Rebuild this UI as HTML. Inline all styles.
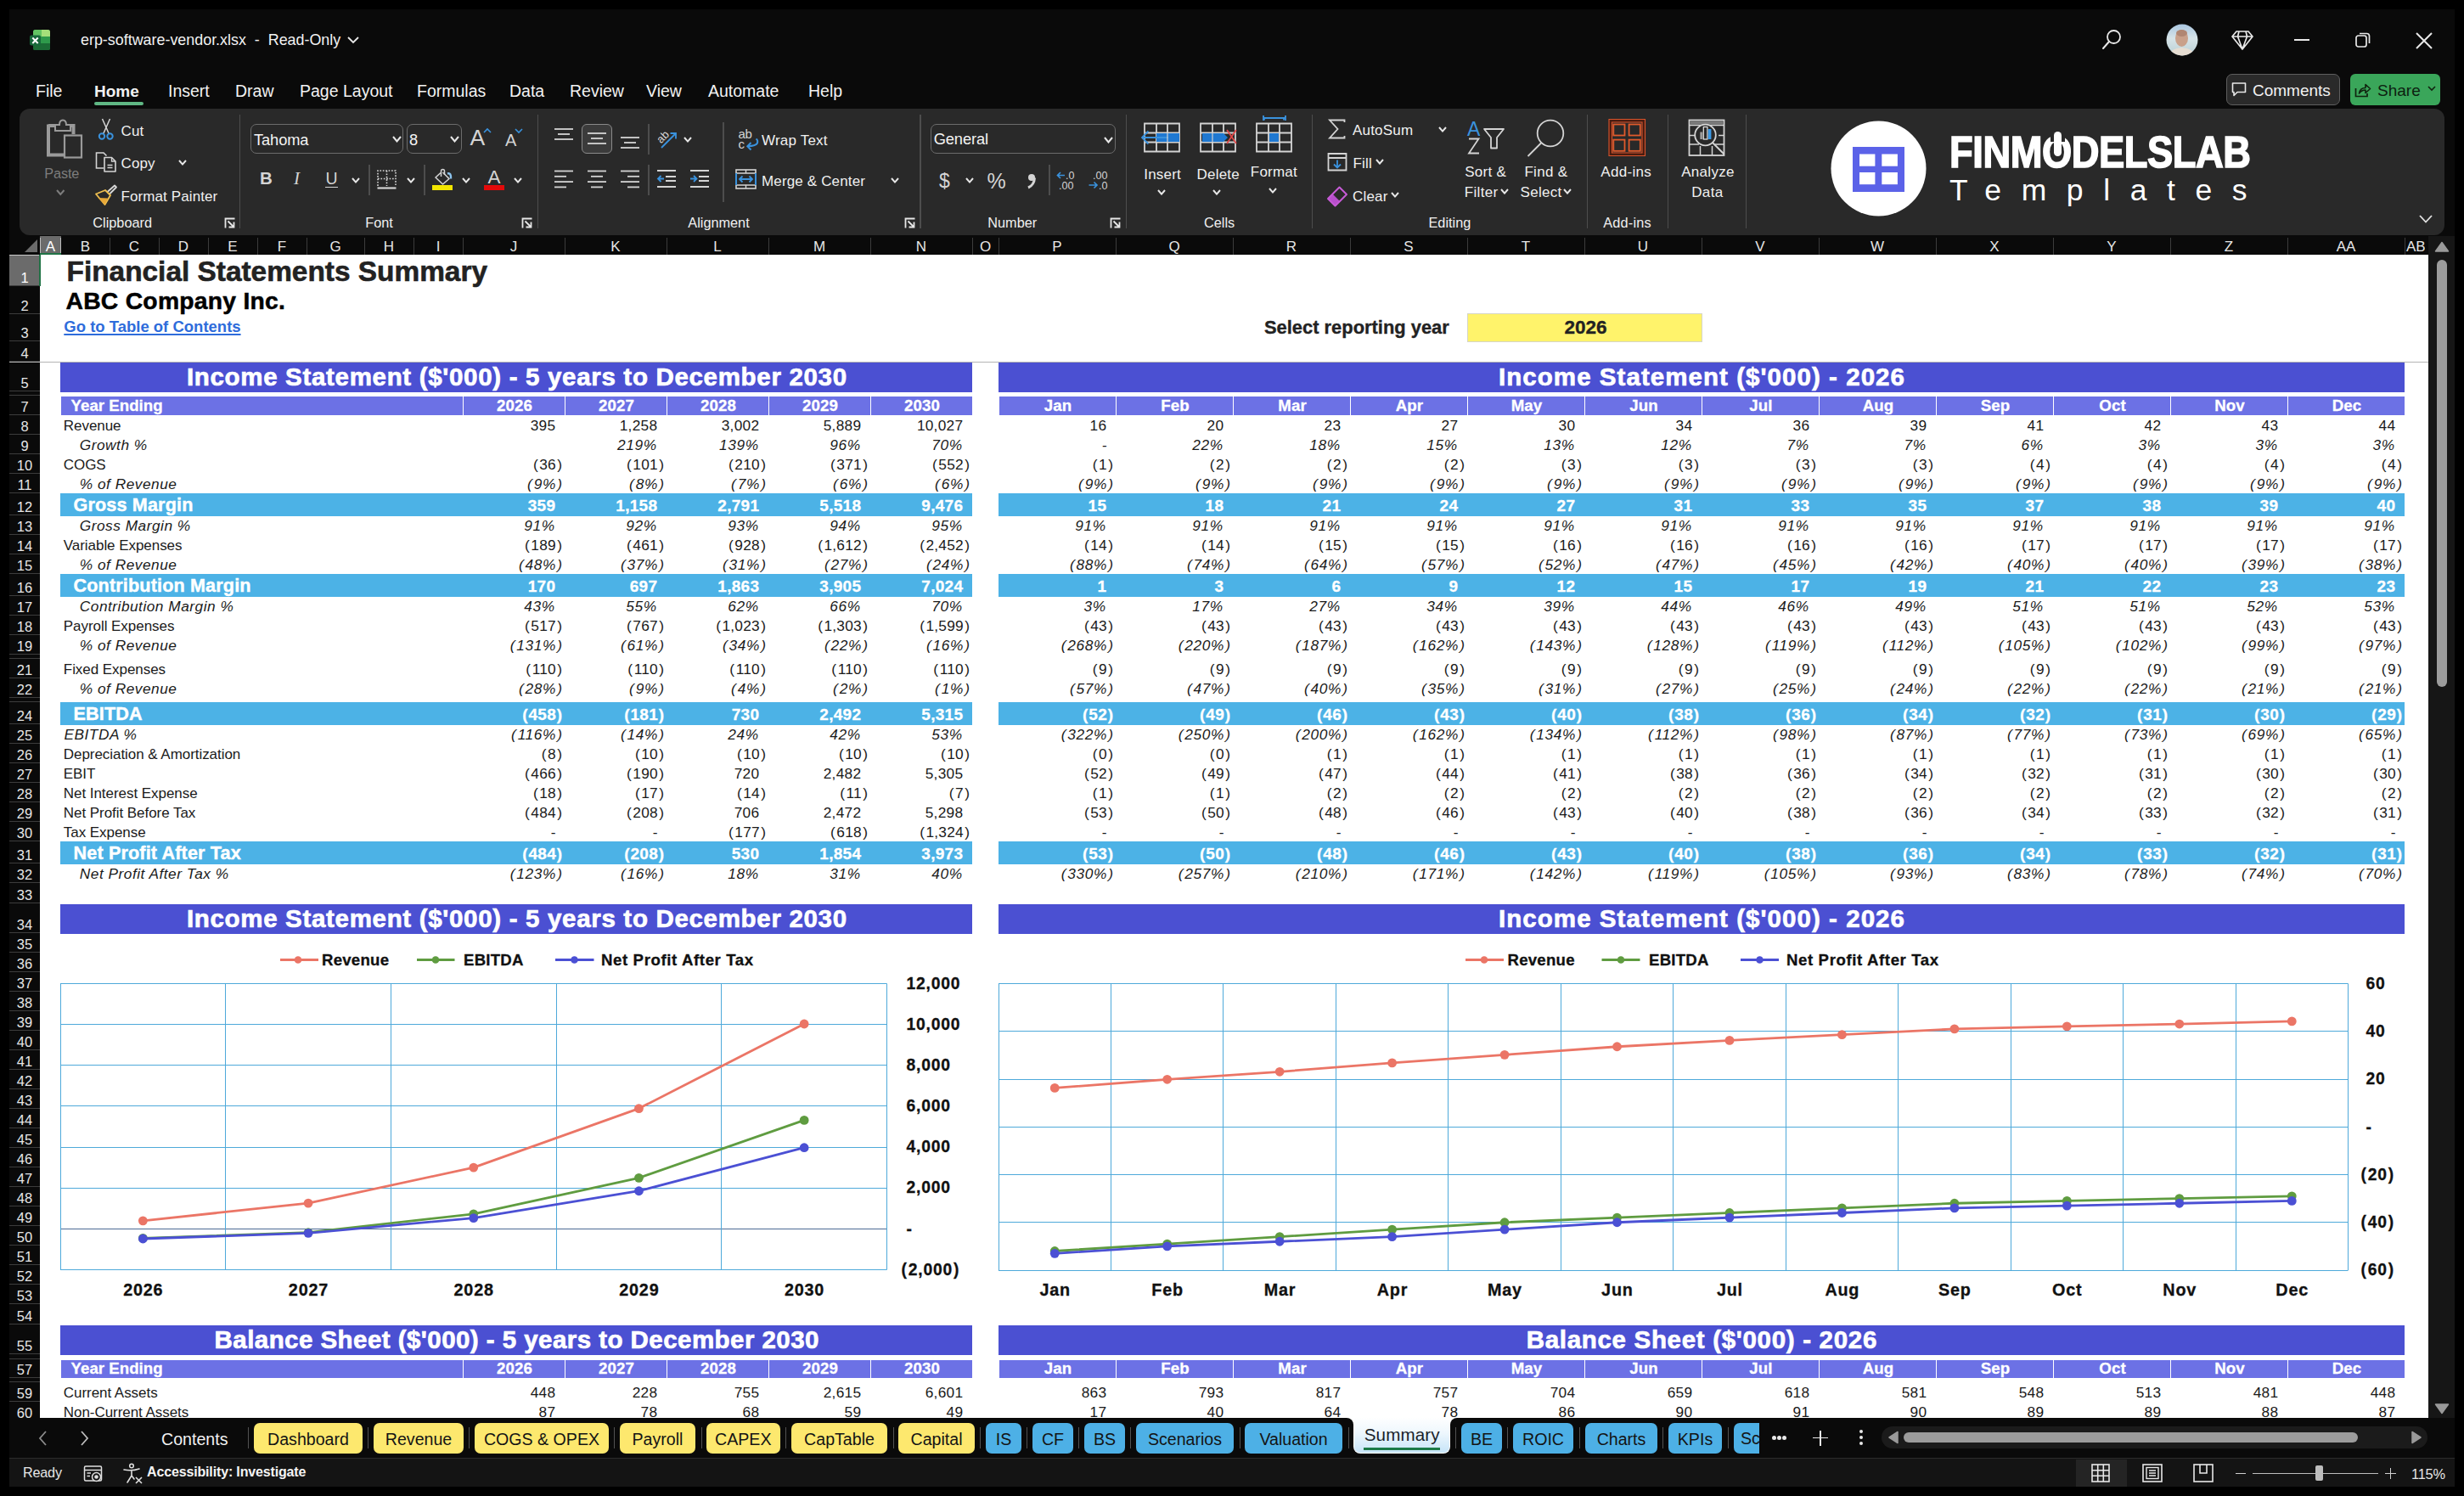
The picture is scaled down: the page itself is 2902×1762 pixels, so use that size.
<!DOCTYPE html>
<html><head><meta charset="utf-8"><title>Excel</title>
<style>
html,body{margin:0;padding:0;}
body{width:2902px;height:1762px;position:relative;overflow:hidden;background:#000;font-family:"Liberation Sans", sans-serif;}
.t{position:absolute;white-space:nowrap;}
.r{position:absolute;}
</style></head><body>
<div class="r" style="left:11px;top:11px;width:2880px;height:1740px;background:#0a0a0a;"></div>
<div class="r" style="left:47px;top:300px;width:2813px;height:1370px;background:#ffffff;"></div>
<svg class="r" style="left:34px;top:34px;" width="26" height="26" viewBox="0 0 26 26">
<rect x="5" y="1" width="20" height="24" rx="2.5" fill="#1f7a3e"/>
<path d="M5 3.5 Q5 1 7.5 1 H15 V9 H5 Z" fill="#62c462"/>
<path d="M15 1 H22.5 Q25 1 25 3.5 V9 H15 Z" fill="#a5e07a"/>
<rect x="5" y="9" width="20" height="8" fill="#2e9a4b"/>
<path d="M5 17 H25 V22.5 Q25 25 22.5 25 H7.5 Q5 25 5 22.5 Z" fill="#1b6b35"/>
<rect x="1" y="7.5" width="13" height="12" rx="2" fill="#17683a"/>
<path d="M4.3 10.5 L10.7 17 M10.7 10.5 L4.3 17" stroke="#fff" stroke-width="2"/>
</svg>
<div class="t" style="top:38.85px;font-size:17.9px;line-height:17.9px;color:#f2f2f2;left:95px;">erp-software-vendor.xlsx&nbsp; - &nbsp;Read-Only</div>
<svg class="r" style="left:408px;top:41px;" width="16" height="12" viewBox="0 0 16 12"><path d="M2 3 L8 9 L14 3" stroke="#e8e8e8" stroke-width="1.8" fill="none"/></svg>
<svg class="r" style="left:2474px;top:33px;" width="26" height="28" viewBox="0 0 26 28"><circle cx="15.5" cy="10.5" r="7.5" stroke="#e8e8e8" stroke-width="1.8" fill="none"/><path d="M10 16 L3 24" stroke="#e8e8e8" stroke-width="2" stroke-linecap="round"/></svg>
<svg class="r" style="left:2551px;top:28px;" width="38" height="38" viewBox="0 0 38 38"><defs><clipPath id="av"><circle cx="19" cy="19" r="18.5"/></clipPath>
<linearGradient id="avg" x1="0" y1="0" x2="0" y2="1"><stop offset="0" stop-color="#a9c6e0"/><stop offset="0.45" stop-color="#d7e4e8"/><stop offset="1" stop-color="#b9cfd4"/></linearGradient></defs>
<g clip-path="url(#av)"><rect width="38" height="38" fill="url(#avg)"/>
<ellipse cx="18.5" cy="17" rx="7.5" ry="10" fill="#c9a08a"/>
<path d="M3 38 Q5 29 18.5 28 Q32 29 35 38 Z" fill="#e6ddd2"/>
<ellipse cx="18.5" cy="11" rx="6.5" ry="4" fill="#b08672"/></g></svg>
<svg class="r" style="left:2627px;top:33px;" width="28" height="28" viewBox="0 0 28 28"><path d="M7 4 H21 L26 10 L14 25 L2 10 Z M2 10 H26 M10 4 L8.5 10 L14 25 L19.5 10 L18 4" stroke="#e8e8e8" stroke-width="1.7" fill="none" stroke-linejoin="round"/></svg>
<div class="r" style="left:2702px;top:46px;width:18px;height:1.8px;background:#e8e8e8;"></div>
<svg class="r" style="left:2772px;top:36px;" width="22" height="22" viewBox="0 0 22 22"><rect x="3" y="6" width="12" height="13" rx="2.5" stroke="#e8e8e8" stroke-width="1.7" fill="none"/><path d="M7 3.5 H15.5 Q18.5 3.5 18.5 6.5 V15" stroke="#e8e8e8" stroke-width="1.7" fill="none"/></svg>
<svg class="r" style="left:2843px;top:36px;" width="24" height="24" viewBox="0 0 24 24"><path d="M3 3 L21 21 M21 3 L3 21" stroke="#e8e8e8" stroke-width="2"/></svg>
<div class="t" style="top:97.99px;font-size:19.5px;line-height:19.5px;color:#f2f2f2;left:42px;">File</div>
<div class="t" style="top:98.42px;font-size:19px;line-height:19px;font-weight:700;color:#f2f2f2;left:111px;">Home</div>
<div class="t" style="top:97.99px;font-size:19.5px;line-height:19.5px;color:#f2f2f2;left:198px;">Insert</div>
<div class="t" style="top:97.99px;font-size:19.5px;line-height:19.5px;color:#f2f2f2;left:277px;">Draw</div>
<div class="t" style="top:97.99px;font-size:19.5px;line-height:19.5px;color:#f2f2f2;left:353px;">Page Layout</div>
<div class="t" style="top:97.99px;font-size:19.5px;line-height:19.5px;color:#f2f2f2;left:491px;">Formulas</div>
<div class="t" style="top:97.99px;font-size:19.5px;line-height:19.5px;color:#f2f2f2;left:600px;">Data</div>
<div class="t" style="top:97.99px;font-size:19.5px;line-height:19.5px;color:#f2f2f2;left:671px;">Review</div>
<div class="t" style="top:97.99px;font-size:19.5px;line-height:19.5px;color:#f2f2f2;left:761px;">View</div>
<div class="t" style="top:97.99px;font-size:19.5px;line-height:19.5px;color:#f2f2f2;left:834px;">Automate</div>
<div class="t" style="top:97.99px;font-size:19.5px;line-height:19.5px;color:#f2f2f2;left:952px;">Help</div>
<div class="r" style="left:111px;top:120px;width:58px;height:3.5px;background:#5fb784;border-radius:2px;"></div>
<div class="r" style="left:2622px;top:87px;width:132px;height:35px;border:1px solid #5e5e5e;border-radius:7px;background:#2a2a2a;"></div>
<svg class="r" style="left:2627px;top:95px;" width="20" height="20" viewBox="0 0 20 20"><path d="M2.5 3 H17.5 V13.5 H8 L4 17.5 V13.5 H2.5 Z" stroke="#e8e8e8" stroke-width="1.6" fill="none" stroke-linejoin="round"/></svg>
<div class="t" style="top:96.92px;font-size:19px;line-height:19px;color:#f2f2f2;left:2653px;">Comments</div>
<div class="r" style="left:2768px;top:87px;width:106px;height:37px;border-radius:6px;background:#3aa65a;"></div>
<svg class="r" style="left:2772px;top:96px;" width="22" height="20" viewBox="0 0 22 20"><path d="M2.5 8 V17.5 H16 V14" stroke="#10240f" stroke-width="1.7" fill="none"/><path d="M6.5 14 Q7.5 7.5 14 7.5 V3.5 L19.5 8.5 L14 13.5 V10 Q9.5 10 6.5 14 Z" stroke="#10240f" stroke-width="1.6" fill="none" stroke-linejoin="round"/></svg>
<div class="t" style="top:96.92px;font-size:19px;line-height:19px;color:#0d1f10;left:2800px;">Share</div>
<svg class="r" style="left:2858px;top:99px;" width="12" height="10" viewBox="0 0 12 10"><path d="M2 3 L6 7 L10 3" stroke="#10240f" stroke-width="1.6" fill="none"/></svg>
<div class="r" style="left:23px;top:128px;width:2856px;height:149px;border-radius:12px;background:#292929;"></div>
<div class="r" style="left:11px;top:278px;width:2849px;height:22px;background:#0a0a0a;"></div>
<svg class="r" style="left:27px;top:280px;" width="20" height="20" viewBox="0 0 20 20"><path d="M17 2 V17 H2 Z" fill="#6b6b6b"/></svg>
<div class="r" style="left:47px;top:278px;width:25px;height:22px;background:#6b6b6b;"></div>
<div class="r" style="left:47px;top:298px;width:25px;height:2px;background:#217346;"></div>
<div class="r" style="left:47px;top:280px;width:1px;height:18px;background:#bdbdbd;"></div>
<div class="r" style="left:71px;top:280px;width:1px;height:18px;background:#bdbdbd;"></div>
<div class="t" style="top:281.61px;font-size:17px;line-height:17px;color:#ffffff;left:-540.5px;width:1200px;text-align:center;">A</div>
<div class="r" style="left:129px;top:280px;width:1px;height:20px;background:#3c3c3c;"></div>
<div class="t" style="top:281.61px;font-size:17px;line-height:17px;color:#e6e6e6;left:-499.5px;width:1200px;text-align:center;">B</div>
<div class="r" style="left:187px;top:280px;width:1px;height:20px;background:#3c3c3c;"></div>
<div class="t" style="top:281.61px;font-size:17px;line-height:17px;color:#e6e6e6;left:-442px;width:1200px;text-align:center;">C</div>
<div class="r" style="left:245px;top:280px;width:1px;height:20px;background:#3c3c3c;"></div>
<div class="t" style="top:281.61px;font-size:17px;line-height:17px;color:#e6e6e6;left:-384px;width:1200px;text-align:center;">D</div>
<div class="r" style="left:303px;top:280px;width:1px;height:20px;background:#3c3c3c;"></div>
<div class="t" style="top:281.61px;font-size:17px;line-height:17px;color:#e6e6e6;left:-326px;width:1200px;text-align:center;">E</div>
<div class="r" style="left:361px;top:280px;width:1px;height:20px;background:#3c3c3c;"></div>
<div class="t" style="top:281.61px;font-size:17px;line-height:17px;color:#e6e6e6;left:-268px;width:1200px;text-align:center;">F</div>
<div class="r" style="left:429px;top:280px;width:1px;height:20px;background:#3c3c3c;"></div>
<div class="t" style="top:281.61px;font-size:17px;line-height:17px;color:#e6e6e6;left:-205px;width:1200px;text-align:center;">G</div>
<div class="r" style="left:487px;top:280px;width:1px;height:20px;background:#3c3c3c;"></div>
<div class="t" style="top:281.61px;font-size:17px;line-height:17px;color:#e6e6e6;left:-142px;width:1200px;text-align:center;">H</div>
<div class="r" style="left:545px;top:280px;width:1px;height:20px;background:#3c3c3c;"></div>
<div class="t" style="top:281.61px;font-size:17px;line-height:17px;color:#e6e6e6;left:-84px;width:1200px;text-align:center;">I</div>
<div class="r" style="left:665px;top:280px;width:1px;height:20px;background:#3c3c3c;"></div>
<div class="t" style="top:281.61px;font-size:17px;line-height:17px;color:#e6e6e6;left:5px;width:1200px;text-align:center;">J</div>
<div class="r" style="left:785px;top:280px;width:1px;height:20px;background:#3c3c3c;"></div>
<div class="t" style="top:281.61px;font-size:17px;line-height:17px;color:#e6e6e6;left:125px;width:1200px;text-align:center;">K</div>
<div class="r" style="left:905px;top:280px;width:1px;height:20px;background:#3c3c3c;"></div>
<div class="t" style="top:281.61px;font-size:17px;line-height:17px;color:#e6e6e6;left:245px;width:1200px;text-align:center;">L</div>
<div class="r" style="left:1025px;top:280px;width:1px;height:20px;background:#3c3c3c;"></div>
<div class="t" style="top:281.61px;font-size:17px;line-height:17px;color:#e6e6e6;left:365px;width:1200px;text-align:center;">M</div>
<div class="r" style="left:1145px;top:280px;width:1px;height:20px;background:#3c3c3c;"></div>
<div class="t" style="top:281.61px;font-size:17px;line-height:17px;color:#e6e6e6;left:485px;width:1200px;text-align:center;">N</div>
<div class="r" style="left:1176px;top:280px;width:1px;height:20px;background:#3c3c3c;"></div>
<div class="t" style="top:281.61px;font-size:17px;line-height:17px;color:#e6e6e6;left:560.5px;width:1200px;text-align:center;">O</div>
<div class="r" style="left:1314px;top:280px;width:1px;height:20px;background:#3c3c3c;"></div>
<div class="t" style="top:281.61px;font-size:17px;line-height:17px;color:#e6e6e6;left:645px;width:1200px;text-align:center;">P</div>
<div class="r" style="left:1452px;top:280px;width:1px;height:20px;background:#3c3c3c;"></div>
<div class="t" style="top:281.61px;font-size:17px;line-height:17px;color:#e6e6e6;left:783px;width:1200px;text-align:center;">Q</div>
<div class="r" style="left:1590px;top:280px;width:1px;height:20px;background:#3c3c3c;"></div>
<div class="t" style="top:281.61px;font-size:17px;line-height:17px;color:#e6e6e6;left:921px;width:1200px;text-align:center;">R</div>
<div class="r" style="left:1728px;top:280px;width:1px;height:20px;background:#3c3c3c;"></div>
<div class="t" style="top:281.61px;font-size:17px;line-height:17px;color:#e6e6e6;left:1059px;width:1200px;text-align:center;">S</div>
<div class="r" style="left:1866px;top:280px;width:1px;height:20px;background:#3c3c3c;"></div>
<div class="t" style="top:281.61px;font-size:17px;line-height:17px;color:#e6e6e6;left:1197px;width:1200px;text-align:center;">T</div>
<div class="r" style="left:2004px;top:280px;width:1px;height:20px;background:#3c3c3c;"></div>
<div class="t" style="top:281.61px;font-size:17px;line-height:17px;color:#e6e6e6;left:1335px;width:1200px;text-align:center;">U</div>
<div class="r" style="left:2142px;top:280px;width:1px;height:20px;background:#3c3c3c;"></div>
<div class="t" style="top:281.61px;font-size:17px;line-height:17px;color:#e6e6e6;left:1473px;width:1200px;text-align:center;">V</div>
<div class="r" style="left:2280px;top:280px;width:1px;height:20px;background:#3c3c3c;"></div>
<div class="t" style="top:281.61px;font-size:17px;line-height:17px;color:#e6e6e6;left:1611px;width:1200px;text-align:center;">W</div>
<div class="r" style="left:2418px;top:280px;width:1px;height:20px;background:#3c3c3c;"></div>
<div class="t" style="top:281.61px;font-size:17px;line-height:17px;color:#e6e6e6;left:1749px;width:1200px;text-align:center;">X</div>
<div class="r" style="left:2556px;top:280px;width:1px;height:20px;background:#3c3c3c;"></div>
<div class="t" style="top:281.61px;font-size:17px;line-height:17px;color:#e6e6e6;left:1887px;width:1200px;text-align:center;">Y</div>
<div class="r" style="left:2694px;top:280px;width:1px;height:20px;background:#3c3c3c;"></div>
<div class="t" style="top:281.61px;font-size:17px;line-height:17px;color:#e6e6e6;left:2025px;width:1200px;text-align:center;">Z</div>
<div class="r" style="left:2832px;top:280px;width:1px;height:20px;background:#3c3c3c;"></div>
<div class="t" style="top:281.61px;font-size:17px;line-height:17px;color:#e6e6e6;left:2163px;width:1200px;text-align:center;">AA</div>
<div class="r" style="left:2856px;top:280px;width:1px;height:20px;background:#3c3c3c;"></div>
<div class="t" style="top:281.61px;font-size:17px;line-height:17px;color:#e6e6e6;left:2834px;">AB</div>
<div class="r" style="left:11px;top:300px;width:36px;height:37px;background:#6b6b6b;"></div>
<div class="r" style="left:11px;top:336px;width:36px;height:1px;background:#3c3c3c;"></div>
<div class="t" style="top:318.53px;font-size:16.5px;line-height:16.5px;color:#ffffff;left:-571px;width:1200px;text-align:center;">1</div>
<div class="r" style="left:11px;top:369px;width:36px;height:1px;background:#3c3c3c;"></div>
<div class="t" style="top:351.53px;font-size:16.5px;line-height:16.5px;color:#e6e6e6;left:-571px;width:1200px;text-align:center;">2</div>
<div class="r" style="left:11px;top:401px;width:36px;height:1px;background:#3c3c3c;"></div>
<div class="t" style="top:383.53px;font-size:16.5px;line-height:16.5px;color:#e6e6e6;left:-571px;width:1200px;text-align:center;">3</div>
<div class="r" style="left:11px;top:425px;width:36px;height:1px;background:#3c3c3c;"></div>
<div class="t" style="top:407.53px;font-size:16.5px;line-height:16.5px;color:#e6e6e6;left:-571px;width:1200px;text-align:center;">4</div>
<div class="r" style="left:11px;top:460px;width:36px;height:1px;background:#3c3c3c;"></div>
<div class="t" style="top:442.53px;font-size:16.5px;line-height:16.5px;color:#e6e6e6;left:-571px;width:1200px;text-align:center;">5</div>
<div class="r" style="left:11px;top:465px;width:36px;height:1px;background:#3c3c3c;"></div>
<div class="r" style="left:11px;top:488px;width:36px;height:1px;background:#3c3c3c;"></div>
<div class="t" style="top:470.53px;font-size:16.5px;line-height:16.5px;color:#e6e6e6;left:-571px;width:1200px;text-align:center;">7</div>
<div class="r" style="left:11px;top:511px;width:36px;height:1px;background:#3c3c3c;"></div>
<div class="t" style="top:493.53px;font-size:16.5px;line-height:16.5px;color:#e6e6e6;left:-571px;width:1200px;text-align:center;">8</div>
<div class="r" style="left:11px;top:534px;width:36px;height:1px;background:#3c3c3c;"></div>
<div class="t" style="top:516.53px;font-size:16.5px;line-height:16.5px;color:#e6e6e6;left:-571px;width:1200px;text-align:center;">9</div>
<div class="r" style="left:11px;top:557px;width:36px;height:1px;background:#3c3c3c;"></div>
<div class="t" style="top:539.53px;font-size:16.5px;line-height:16.5px;color:#e6e6e6;left:-571px;width:1200px;text-align:center;">10</div>
<div class="r" style="left:11px;top:580px;width:36px;height:1px;background:#3c3c3c;"></div>
<div class="t" style="top:562.53px;font-size:16.5px;line-height:16.5px;color:#e6e6e6;left:-571px;width:1200px;text-align:center;">11</div>
<div class="r" style="left:11px;top:606px;width:36px;height:1px;background:#3c3c3c;"></div>
<div class="t" style="top:588.53px;font-size:16.5px;line-height:16.5px;color:#e6e6e6;left:-571px;width:1200px;text-align:center;">12</div>
<div class="r" style="left:11px;top:629px;width:36px;height:1px;background:#3c3c3c;"></div>
<div class="t" style="top:611.53px;font-size:16.5px;line-height:16.5px;color:#e6e6e6;left:-571px;width:1200px;text-align:center;">13</div>
<div class="r" style="left:11px;top:652px;width:36px;height:1px;background:#3c3c3c;"></div>
<div class="t" style="top:634.53px;font-size:16.5px;line-height:16.5px;color:#e6e6e6;left:-571px;width:1200px;text-align:center;">14</div>
<div class="r" style="left:11px;top:675px;width:36px;height:1px;background:#3c3c3c;"></div>
<div class="t" style="top:657.53px;font-size:16.5px;line-height:16.5px;color:#e6e6e6;left:-571px;width:1200px;text-align:center;">15</div>
<div class="r" style="left:11px;top:701px;width:36px;height:1px;background:#3c3c3c;"></div>
<div class="t" style="top:683.53px;font-size:16.5px;line-height:16.5px;color:#e6e6e6;left:-571px;width:1200px;text-align:center;">16</div>
<div class="r" style="left:11px;top:724px;width:36px;height:1px;background:#3c3c3c;"></div>
<div class="t" style="top:706.53px;font-size:16.5px;line-height:16.5px;color:#e6e6e6;left:-571px;width:1200px;text-align:center;">17</div>
<div class="r" style="left:11px;top:747px;width:36px;height:1px;background:#3c3c3c;"></div>
<div class="t" style="top:729.53px;font-size:16.5px;line-height:16.5px;color:#e6e6e6;left:-571px;width:1200px;text-align:center;">18</div>
<div class="r" style="left:11px;top:770px;width:36px;height:1px;background:#3c3c3c;"></div>
<div class="t" style="top:752.53px;font-size:16.5px;line-height:16.5px;color:#e6e6e6;left:-571px;width:1200px;text-align:center;">19</div>
<div class="r" style="left:11px;top:775px;width:36px;height:1px;background:#3c3c3c;"></div>
<div class="r" style="left:11px;top:798px;width:36px;height:1px;background:#3c3c3c;"></div>
<div class="t" style="top:780.53px;font-size:16.5px;line-height:16.5px;color:#e6e6e6;left:-571px;width:1200px;text-align:center;">21</div>
<div class="r" style="left:11px;top:821px;width:36px;height:1px;background:#3c3c3c;"></div>
<div class="t" style="top:803.53px;font-size:16.5px;line-height:16.5px;color:#e6e6e6;left:-571px;width:1200px;text-align:center;">22</div>
<div class="r" style="left:11px;top:826px;width:36px;height:1px;background:#3c3c3c;"></div>
<div class="r" style="left:11px;top:852px;width:36px;height:1px;background:#3c3c3c;"></div>
<div class="t" style="top:834.53px;font-size:16.5px;line-height:16.5px;color:#e6e6e6;left:-571px;width:1200px;text-align:center;">24</div>
<div class="r" style="left:11px;top:875px;width:36px;height:1px;background:#3c3c3c;"></div>
<div class="t" style="top:857.53px;font-size:16.5px;line-height:16.5px;color:#e6e6e6;left:-571px;width:1200px;text-align:center;">25</div>
<div class="r" style="left:11px;top:898px;width:36px;height:1px;background:#3c3c3c;"></div>
<div class="t" style="top:880.53px;font-size:16.5px;line-height:16.5px;color:#e6e6e6;left:-571px;width:1200px;text-align:center;">26</div>
<div class="r" style="left:11px;top:921px;width:36px;height:1px;background:#3c3c3c;"></div>
<div class="t" style="top:903.53px;font-size:16.5px;line-height:16.5px;color:#e6e6e6;left:-571px;width:1200px;text-align:center;">27</div>
<div class="r" style="left:11px;top:944px;width:36px;height:1px;background:#3c3c3c;"></div>
<div class="t" style="top:926.53px;font-size:16.5px;line-height:16.5px;color:#e6e6e6;left:-571px;width:1200px;text-align:center;">28</div>
<div class="r" style="left:11px;top:967px;width:36px;height:1px;background:#3c3c3c;"></div>
<div class="t" style="top:949.53px;font-size:16.5px;line-height:16.5px;color:#e6e6e6;left:-571px;width:1200px;text-align:center;">29</div>
<div class="r" style="left:11px;top:990px;width:36px;height:1px;background:#3c3c3c;"></div>
<div class="t" style="top:972.53px;font-size:16.5px;line-height:16.5px;color:#e6e6e6;left:-571px;width:1200px;text-align:center;">30</div>
<div class="r" style="left:11px;top:1016px;width:36px;height:1px;background:#3c3c3c;"></div>
<div class="t" style="top:998.53px;font-size:16.5px;line-height:16.5px;color:#e6e6e6;left:-571px;width:1200px;text-align:center;">31</div>
<div class="r" style="left:11px;top:1039px;width:36px;height:1px;background:#3c3c3c;"></div>
<div class="t" style="top:1021.53px;font-size:16.5px;line-height:16.5px;color:#e6e6e6;left:-571px;width:1200px;text-align:center;">32</div>
<div class="r" style="left:11px;top:1063px;width:36px;height:1px;background:#3c3c3c;"></div>
<div class="t" style="top:1045.53px;font-size:16.5px;line-height:16.5px;color:#e6e6e6;left:-571px;width:1200px;text-align:center;">33</div>
<div class="r" style="left:11px;top:1098px;width:36px;height:1px;background:#3c3c3c;"></div>
<div class="t" style="top:1080.53px;font-size:16.5px;line-height:16.5px;color:#e6e6e6;left:-571px;width:1200px;text-align:center;">34</div>
<div class="r" style="left:11px;top:1121px;width:36px;height:1px;background:#3c3c3c;"></div>
<div class="t" style="top:1103.53px;font-size:16.5px;line-height:16.5px;color:#e6e6e6;left:-571px;width:1200px;text-align:center;">35</div>
<div class="r" style="left:11px;top:1144px;width:36px;height:1px;background:#3c3c3c;"></div>
<div class="t" style="top:1126.53px;font-size:16.5px;line-height:16.5px;color:#e6e6e6;left:-571px;width:1200px;text-align:center;">36</div>
<div class="r" style="left:11px;top:1167px;width:36px;height:1px;background:#3c3c3c;"></div>
<div class="t" style="top:1149.53px;font-size:16.5px;line-height:16.5px;color:#e6e6e6;left:-571px;width:1200px;text-align:center;">37</div>
<div class="r" style="left:11px;top:1190px;width:36px;height:1px;background:#3c3c3c;"></div>
<div class="t" style="top:1172.53px;font-size:16.5px;line-height:16.5px;color:#e6e6e6;left:-571px;width:1200px;text-align:center;">38</div>
<div class="r" style="left:11px;top:1213px;width:36px;height:1px;background:#3c3c3c;"></div>
<div class="t" style="top:1195.53px;font-size:16.5px;line-height:16.5px;color:#e6e6e6;left:-571px;width:1200px;text-align:center;">39</div>
<div class="r" style="left:11px;top:1236px;width:36px;height:1px;background:#3c3c3c;"></div>
<div class="t" style="top:1218.53px;font-size:16.5px;line-height:16.5px;color:#e6e6e6;left:-571px;width:1200px;text-align:center;">40</div>
<div class="r" style="left:11px;top:1259px;width:36px;height:1px;background:#3c3c3c;"></div>
<div class="t" style="top:1241.53px;font-size:16.5px;line-height:16.5px;color:#e6e6e6;left:-571px;width:1200px;text-align:center;">41</div>
<div class="r" style="left:11px;top:1282px;width:36px;height:1px;background:#3c3c3c;"></div>
<div class="t" style="top:1264.53px;font-size:16.5px;line-height:16.5px;color:#e6e6e6;left:-571px;width:1200px;text-align:center;">42</div>
<div class="r" style="left:11px;top:1305px;width:36px;height:1px;background:#3c3c3c;"></div>
<div class="t" style="top:1287.53px;font-size:16.5px;line-height:16.5px;color:#e6e6e6;left:-571px;width:1200px;text-align:center;">43</div>
<div class="r" style="left:11px;top:1328px;width:36px;height:1px;background:#3c3c3c;"></div>
<div class="t" style="top:1310.53px;font-size:16.5px;line-height:16.5px;color:#e6e6e6;left:-571px;width:1200px;text-align:center;">44</div>
<div class="r" style="left:11px;top:1351px;width:36px;height:1px;background:#3c3c3c;"></div>
<div class="t" style="top:1333.53px;font-size:16.5px;line-height:16.5px;color:#e6e6e6;left:-571px;width:1200px;text-align:center;">45</div>
<div class="r" style="left:11px;top:1374px;width:36px;height:1px;background:#3c3c3c;"></div>
<div class="t" style="top:1356.53px;font-size:16.5px;line-height:16.5px;color:#e6e6e6;left:-571px;width:1200px;text-align:center;">46</div>
<div class="r" style="left:11px;top:1397px;width:36px;height:1px;background:#3c3c3c;"></div>
<div class="t" style="top:1379.53px;font-size:16.5px;line-height:16.5px;color:#e6e6e6;left:-571px;width:1200px;text-align:center;">47</div>
<div class="r" style="left:11px;top:1420px;width:36px;height:1px;background:#3c3c3c;"></div>
<div class="t" style="top:1402.53px;font-size:16.5px;line-height:16.5px;color:#e6e6e6;left:-571px;width:1200px;text-align:center;">48</div>
<div class="r" style="left:11px;top:1443px;width:36px;height:1px;background:#3c3c3c;"></div>
<div class="t" style="top:1425.53px;font-size:16.5px;line-height:16.5px;color:#e6e6e6;left:-571px;width:1200px;text-align:center;">49</div>
<div class="r" style="left:11px;top:1466px;width:36px;height:1px;background:#3c3c3c;"></div>
<div class="t" style="top:1448.53px;font-size:16.5px;line-height:16.5px;color:#e6e6e6;left:-571px;width:1200px;text-align:center;">50</div>
<div class="r" style="left:11px;top:1489px;width:36px;height:1px;background:#3c3c3c;"></div>
<div class="t" style="top:1471.53px;font-size:16.5px;line-height:16.5px;color:#e6e6e6;left:-571px;width:1200px;text-align:center;">51</div>
<div class="r" style="left:11px;top:1512px;width:36px;height:1px;background:#3c3c3c;"></div>
<div class="t" style="top:1494.53px;font-size:16.5px;line-height:16.5px;color:#e6e6e6;left:-571px;width:1200px;text-align:center;">52</div>
<div class="r" style="left:11px;top:1535px;width:36px;height:1px;background:#3c3c3c;"></div>
<div class="t" style="top:1517.53px;font-size:16.5px;line-height:16.5px;color:#e6e6e6;left:-571px;width:1200px;text-align:center;">53</div>
<div class="r" style="left:11px;top:1559px;width:36px;height:1px;background:#3c3c3c;"></div>
<div class="t" style="top:1541.53px;font-size:16.5px;line-height:16.5px;color:#e6e6e6;left:-571px;width:1200px;text-align:center;">54</div>
<div class="r" style="left:11px;top:1594px;width:36px;height:1px;background:#3c3c3c;"></div>
<div class="t" style="top:1576.53px;font-size:16.5px;line-height:16.5px;color:#e6e6e6;left:-571px;width:1200px;text-align:center;">55</div>
<div class="r" style="left:11px;top:1600px;width:36px;height:1px;background:#3c3c3c;"></div>
<div class="r" style="left:11px;top:1622px;width:36px;height:1px;background:#3c3c3c;"></div>
<div class="t" style="top:1604.53px;font-size:16.5px;line-height:16.5px;color:#e6e6e6;left:-571px;width:1200px;text-align:center;">57</div>
<div class="r" style="left:11px;top:1627px;width:36px;height:1px;background:#3c3c3c;"></div>
<div class="r" style="left:11px;top:1650px;width:36px;height:1px;background:#3c3c3c;"></div>
<div class="t" style="top:1632.53px;font-size:16.5px;line-height:16.5px;color:#e6e6e6;left:-571px;width:1200px;text-align:center;">59</div>
<div class="r" style="left:11px;top:1673px;width:36px;height:1px;background:#3c3c3c;"></div>
<div class="t" style="top:1655.53px;font-size:16.5px;line-height:16.5px;color:#e6e6e6;left:-571px;width:1200px;text-align:center;">60</div>
<div class="r" style="left:11px;top:300px;width:36px;height:1px;background:#c8c8c8;"></div>
<div class="r" style="left:46px;top:300px;width:2px;height:37px;background:#217346;"></div>
<div class="t" style="top:302.73px;font-size:33.4px;line-height:33.4px;font-weight:700;color:#222222;left:78.5px;-webkit-text-stroke:0.6px #222222;">Financial Statements Summary</div>
<div class="t" style="top:340.04px;font-size:28.3px;line-height:28.3px;font-weight:700;color:#000000;letter-spacing:0.25px;left:77.5px;-webkit-text-stroke:0.5px #000000;">ABC Company Inc.</div>
<div class="t" style="top:375.84px;font-size:18.5px;line-height:18.5px;font-weight:700;color:#2e6cdb;left:75.3px;"><u style="text-decoration-thickness:1.5px;text-underline-offset:2px">Go to Table of Contents</u></div>
<div class="t" style="top:375.46px;font-size:21.9px;line-height:21.9px;font-weight:700;color:#222222;left:1489px;-webkit-text-stroke:0.35px #222222;">Select reporting year</div>
<div class="r" style="left:1728px;top:369px;width:277px;height:34px;background:#fff36b;box-sizing:border-box;border:1px solid #d6d6c4;"></div>
<div class="t" style="top:374.95px;font-size:22.5px;line-height:22.5px;font-weight:700;color:#222222;left:1267.5px;width:1200px;text-align:center;-webkit-text-stroke:0.35px #222222;">2026</div>
<div class="r" style="left:11px;top:426px;width:2849px;height:1px;background:#b4b4b4;"></div>
<div class="r" style="left:71px;top:427px;width:1074px;height:34.5px;background:#4b50d2;"></div>
<div class="t" style="top:429.03px;font-size:29.5px;line-height:29.5px;font-weight:700;color:#ffffff;letter-spacing:0.68px;left:8.84px;width:1200px;text-align:center;-webkit-text-stroke:0.7px #ffffff;">Income Statement ($&#39;000) - 5 years to December 2030</div>
<div class="r" style="left:1176px;top:427px;width:1656px;height:34.5px;background:#4b50d2;"></div>
<div class="t" style="top:429.03px;font-size:29.5px;line-height:29.5px;font-weight:700;color:#ffffff;letter-spacing:1.05px;left:1404.53px;width:1200px;text-align:center;-webkit-text-stroke:0.7px #ffffff;">Income Statement ($&#39;000) - 2026</div>
<div class="r" style="left:72px;top:467px;width:473px;height:22px;background:#6c71e5;"></div>
<div class="t" style="top:469.17px;font-size:18.7px;line-height:18.7px;font-weight:700;color:#ffffff;left:83.6px;-webkit-text-stroke:0.3px #ffffff;">Year Ending</div>
<div class="r" style="left:546px;top:467px;width:119px;height:22px;background:#6c71e5;"></div>
<div class="t" style="top:469.17px;font-size:18.7px;line-height:18.7px;font-weight:700;color:#ffffff;letter-spacing:0.1px;left:6px;width:1200px;text-align:center;-webkit-text-stroke:0.3px #ffffff;">2026</div>
<div class="r" style="left:666px;top:467px;width:119px;height:22px;background:#6c71e5;"></div>
<div class="t" style="top:469.17px;font-size:18.7px;line-height:18.7px;font-weight:700;color:#ffffff;letter-spacing:0.1px;left:126px;width:1200px;text-align:center;-webkit-text-stroke:0.3px #ffffff;">2027</div>
<div class="r" style="left:786px;top:467px;width:119px;height:22px;background:#6c71e5;"></div>
<div class="t" style="top:469.17px;font-size:18.7px;line-height:18.7px;font-weight:700;color:#ffffff;letter-spacing:0.1px;left:246px;width:1200px;text-align:center;-webkit-text-stroke:0.3px #ffffff;">2028</div>
<div class="r" style="left:906px;top:467px;width:119px;height:22px;background:#6c71e5;"></div>
<div class="t" style="top:469.17px;font-size:18.7px;line-height:18.7px;font-weight:700;color:#ffffff;letter-spacing:0.1px;left:366px;width:1200px;text-align:center;-webkit-text-stroke:0.3px #ffffff;">2029</div>
<div class="r" style="left:1026px;top:467px;width:119px;height:22px;background:#6c71e5;"></div>
<div class="t" style="top:469.17px;font-size:18.7px;line-height:18.7px;font-weight:700;color:#ffffff;letter-spacing:0.1px;left:486px;width:1200px;text-align:center;-webkit-text-stroke:0.3px #ffffff;">2030</div>
<div class="r" style="left:1177px;top:467px;width:137px;height:22px;background:#6c71e5;"></div>
<div class="t" style="top:469.17px;font-size:18.7px;line-height:18.7px;font-weight:700;color:#ffffff;letter-spacing:0.1px;left:646px;width:1200px;text-align:center;-webkit-text-stroke:0.3px #ffffff;">Jan</div>
<div class="r" style="left:1315px;top:467px;width:137px;height:22px;background:#6c71e5;"></div>
<div class="t" style="top:469.17px;font-size:18.7px;line-height:18.7px;font-weight:700;color:#ffffff;letter-spacing:0.1px;left:784px;width:1200px;text-align:center;-webkit-text-stroke:0.3px #ffffff;">Feb</div>
<div class="r" style="left:1453px;top:467px;width:137px;height:22px;background:#6c71e5;"></div>
<div class="t" style="top:469.17px;font-size:18.7px;line-height:18.7px;font-weight:700;color:#ffffff;letter-spacing:0.1px;left:922px;width:1200px;text-align:center;-webkit-text-stroke:0.3px #ffffff;">Mar</div>
<div class="r" style="left:1591px;top:467px;width:137px;height:22px;background:#6c71e5;"></div>
<div class="t" style="top:469.17px;font-size:18.7px;line-height:18.7px;font-weight:700;color:#ffffff;letter-spacing:0.1px;left:1060px;width:1200px;text-align:center;-webkit-text-stroke:0.3px #ffffff;">Apr</div>
<div class="r" style="left:1729px;top:467px;width:137px;height:22px;background:#6c71e5;"></div>
<div class="t" style="top:469.17px;font-size:18.7px;line-height:18.7px;font-weight:700;color:#ffffff;letter-spacing:0.1px;left:1198px;width:1200px;text-align:center;-webkit-text-stroke:0.3px #ffffff;">May</div>
<div class="r" style="left:1867px;top:467px;width:137px;height:22px;background:#6c71e5;"></div>
<div class="t" style="top:469.17px;font-size:18.7px;line-height:18.7px;font-weight:700;color:#ffffff;letter-spacing:0.1px;left:1336px;width:1200px;text-align:center;-webkit-text-stroke:0.3px #ffffff;">Jun</div>
<div class="r" style="left:2005px;top:467px;width:137px;height:22px;background:#6c71e5;"></div>
<div class="t" style="top:469.17px;font-size:18.7px;line-height:18.7px;font-weight:700;color:#ffffff;letter-spacing:0.1px;left:1474px;width:1200px;text-align:center;-webkit-text-stroke:0.3px #ffffff;">Jul</div>
<div class="r" style="left:2143px;top:467px;width:137px;height:22px;background:#6c71e5;"></div>
<div class="t" style="top:469.17px;font-size:18.7px;line-height:18.7px;font-weight:700;color:#ffffff;letter-spacing:0.1px;left:1612px;width:1200px;text-align:center;-webkit-text-stroke:0.3px #ffffff;">Aug</div>
<div class="r" style="left:2281px;top:467px;width:137px;height:22px;background:#6c71e5;"></div>
<div class="t" style="top:469.17px;font-size:18.7px;line-height:18.7px;font-weight:700;color:#ffffff;letter-spacing:0.1px;left:1750px;width:1200px;text-align:center;-webkit-text-stroke:0.3px #ffffff;">Sep</div>
<div class="r" style="left:2419px;top:467px;width:137px;height:22px;background:#6c71e5;"></div>
<div class="t" style="top:469.17px;font-size:18.7px;line-height:18.7px;font-weight:700;color:#ffffff;letter-spacing:0.1px;left:1888px;width:1200px;text-align:center;-webkit-text-stroke:0.3px #ffffff;">Oct</div>
<div class="r" style="left:2557px;top:467px;width:137px;height:22px;background:#6c71e5;"></div>
<div class="t" style="top:469.17px;font-size:18.7px;line-height:18.7px;font-weight:700;color:#ffffff;letter-spacing:0.1px;left:2026px;width:1200px;text-align:center;-webkit-text-stroke:0.3px #ffffff;">Nov</div>
<div class="r" style="left:2695px;top:467px;width:137px;height:22px;background:#6c71e5;"></div>
<div class="t" style="top:469.17px;font-size:18.7px;line-height:18.7px;font-weight:700;color:#ffffff;letter-spacing:0.1px;left:2164px;width:1200px;text-align:center;-webkit-text-stroke:0.3px #ffffff;">Dec</div>
<div class="t" style="top:493.01px;font-size:17px;line-height:17px;color:#1a1a1a;letter-spacing:-0.05px;left:74.8px;">Revenue</div>
<div class="t" style="top:492.76px;font-size:17.3px;line-height:17.3px;color:#1a1a1a;letter-spacing:0.25px;right:2247.75px;">395</div>
<div class="t" style="top:492.76px;font-size:17.3px;line-height:17.3px;color:#1a1a1a;letter-spacing:0.25px;right:2127.75px;">1,258</div>
<div class="t" style="top:492.76px;font-size:17.3px;line-height:17.3px;color:#1a1a1a;letter-spacing:0.25px;right:2007.75px;">3,002</div>
<div class="t" style="top:492.76px;font-size:17.3px;line-height:17.3px;color:#1a1a1a;letter-spacing:0.25px;right:1887.75px;">5,889</div>
<div class="t" style="top:492.76px;font-size:17.3px;line-height:17.3px;color:#1a1a1a;letter-spacing:0.25px;right:1767.75px;">10,027</div>
<div class="t" style="top:492.76px;font-size:17.3px;line-height:17.3px;color:#1a1a1a;letter-spacing:0.25px;right:1598.75px;">16</div>
<div class="t" style="top:492.76px;font-size:17.3px;line-height:17.3px;color:#1a1a1a;letter-spacing:0.25px;right:1460.75px;">20</div>
<div class="t" style="top:492.76px;font-size:17.3px;line-height:17.3px;color:#1a1a1a;letter-spacing:0.25px;right:1322.75px;">23</div>
<div class="t" style="top:492.76px;font-size:17.3px;line-height:17.3px;color:#1a1a1a;letter-spacing:0.25px;right:1184.75px;">27</div>
<div class="t" style="top:492.76px;font-size:17.3px;line-height:17.3px;color:#1a1a1a;letter-spacing:0.25px;right:1046.75px;">30</div>
<div class="t" style="top:492.76px;font-size:17.3px;line-height:17.3px;color:#1a1a1a;letter-spacing:0.25px;right:908.75px;">34</div>
<div class="t" style="top:492.76px;font-size:17.3px;line-height:17.3px;color:#1a1a1a;letter-spacing:0.25px;right:770.75px;">36</div>
<div class="t" style="top:492.76px;font-size:17.3px;line-height:17.3px;color:#1a1a1a;letter-spacing:0.25px;right:632.75px;">39</div>
<div class="t" style="top:492.76px;font-size:17.3px;line-height:17.3px;color:#1a1a1a;letter-spacing:0.25px;right:494.75px;">41</div>
<div class="t" style="top:492.76px;font-size:17.3px;line-height:17.3px;color:#1a1a1a;letter-spacing:0.25px;right:356.75px;">42</div>
<div class="t" style="top:492.76px;font-size:17.3px;line-height:17.3px;color:#1a1a1a;letter-spacing:0.25px;right:218.75px;">43</div>
<div class="t" style="top:492.76px;font-size:17.3px;line-height:17.3px;color:#1a1a1a;letter-spacing:0.25px;right:80.75px;">44</div>
<div class="t" style="top:515.76px;font-size:17.3px;line-height:17.3px;font-style:italic;color:#1a1a1a;letter-spacing:0.5px;left:93.8px;">Growth %</div>
<div class="t" style="top:515.76px;font-size:17.3px;line-height:17.3px;font-style:italic;color:#1a1a1a;letter-spacing:0.6px;right:2128.4px;">219%</div>
<div class="t" style="top:515.76px;font-size:17.3px;line-height:17.3px;font-style:italic;color:#1a1a1a;letter-spacing:0.6px;right:2008.4px;">139%</div>
<div class="t" style="top:515.76px;font-size:17.3px;line-height:17.3px;font-style:italic;color:#1a1a1a;letter-spacing:0.6px;right:1888.4px;">96%</div>
<div class="t" style="top:515.76px;font-size:17.3px;line-height:17.3px;font-style:italic;color:#1a1a1a;letter-spacing:0.6px;right:1768.4px;">70%</div>
<div class="t" style="top:515.76px;font-size:17.3px;line-height:17.3px;font-style:italic;color:#1a1a1a;right:1598.5px;">-</div>
<div class="t" style="top:515.76px;font-size:17.3px;line-height:17.3px;font-style:italic;color:#1a1a1a;letter-spacing:0.6px;right:1461.4px;">22%</div>
<div class="t" style="top:515.76px;font-size:17.3px;line-height:17.3px;font-style:italic;color:#1a1a1a;letter-spacing:0.6px;right:1323.4px;">18%</div>
<div class="t" style="top:515.76px;font-size:17.3px;line-height:17.3px;font-style:italic;color:#1a1a1a;letter-spacing:0.6px;right:1185.4px;">15%</div>
<div class="t" style="top:515.76px;font-size:17.3px;line-height:17.3px;font-style:italic;color:#1a1a1a;letter-spacing:0.6px;right:1047.4px;">13%</div>
<div class="t" style="top:515.76px;font-size:17.3px;line-height:17.3px;font-style:italic;color:#1a1a1a;letter-spacing:0.6px;right:909.4px;">12%</div>
<div class="t" style="top:515.76px;font-size:17.3px;line-height:17.3px;font-style:italic;color:#1a1a1a;letter-spacing:0.6px;right:771.4px;">7%</div>
<div class="t" style="top:515.76px;font-size:17.3px;line-height:17.3px;font-style:italic;color:#1a1a1a;letter-spacing:0.6px;right:633.4px;">7%</div>
<div class="t" style="top:515.76px;font-size:17.3px;line-height:17.3px;font-style:italic;color:#1a1a1a;letter-spacing:0.6px;right:495.4px;">6%</div>
<div class="t" style="top:515.76px;font-size:17.3px;line-height:17.3px;font-style:italic;color:#1a1a1a;letter-spacing:0.6px;right:357.4px;">3%</div>
<div class="t" style="top:515.76px;font-size:17.3px;line-height:17.3px;font-style:italic;color:#1a1a1a;letter-spacing:0.6px;right:219.4px;">3%</div>
<div class="t" style="top:515.76px;font-size:17.3px;line-height:17.3px;font-style:italic;color:#1a1a1a;letter-spacing:0.6px;right:81.4px;">3%</div>
<div class="t" style="top:539.01px;font-size:17px;line-height:17px;color:#1a1a1a;letter-spacing:-0.05px;left:74.8px;">COGS</div>
<div class="t" style="top:538.76px;font-size:17.3px;line-height:17.3px;color:#1a1a1a;letter-spacing:0.25px;right:2239.75px;"><span style="margin-right:1.3px">(</span>36<span style="margin-left:1.3px">)</span></div>
<div class="t" style="top:538.76px;font-size:17.3px;line-height:17.3px;color:#1a1a1a;letter-spacing:0.25px;right:2119.75px;"><span style="margin-right:1.3px">(</span>101<span style="margin-left:1.3px">)</span></div>
<div class="t" style="top:538.76px;font-size:17.3px;line-height:17.3px;color:#1a1a1a;letter-spacing:0.25px;right:1999.75px;"><span style="margin-right:1.3px">(</span>210<span style="margin-left:1.3px">)</span></div>
<div class="t" style="top:538.76px;font-size:17.3px;line-height:17.3px;color:#1a1a1a;letter-spacing:0.25px;right:1879.75px;"><span style="margin-right:1.3px">(</span>371<span style="margin-left:1.3px">)</span></div>
<div class="t" style="top:538.76px;font-size:17.3px;line-height:17.3px;color:#1a1a1a;letter-spacing:0.25px;right:1759.75px;"><span style="margin-right:1.3px">(</span>552<span style="margin-left:1.3px">)</span></div>
<div class="t" style="top:538.76px;font-size:17.3px;line-height:17.3px;color:#1a1a1a;letter-spacing:0.25px;right:1590.75px;"><span style="margin-right:1.3px">(</span>1<span style="margin-left:1.3px">)</span></div>
<div class="t" style="top:538.76px;font-size:17.3px;line-height:17.3px;color:#1a1a1a;letter-spacing:0.25px;right:1452.75px;"><span style="margin-right:1.3px">(</span>2<span style="margin-left:1.3px">)</span></div>
<div class="t" style="top:538.76px;font-size:17.3px;line-height:17.3px;color:#1a1a1a;letter-spacing:0.25px;right:1314.75px;"><span style="margin-right:1.3px">(</span>2<span style="margin-left:1.3px">)</span></div>
<div class="t" style="top:538.76px;font-size:17.3px;line-height:17.3px;color:#1a1a1a;letter-spacing:0.25px;right:1176.75px;"><span style="margin-right:1.3px">(</span>2<span style="margin-left:1.3px">)</span></div>
<div class="t" style="top:538.76px;font-size:17.3px;line-height:17.3px;color:#1a1a1a;letter-spacing:0.25px;right:1038.75px;"><span style="margin-right:1.3px">(</span>3<span style="margin-left:1.3px">)</span></div>
<div class="t" style="top:538.76px;font-size:17.3px;line-height:17.3px;color:#1a1a1a;letter-spacing:0.25px;right:900.75px;"><span style="margin-right:1.3px">(</span>3<span style="margin-left:1.3px">)</span></div>
<div class="t" style="top:538.76px;font-size:17.3px;line-height:17.3px;color:#1a1a1a;letter-spacing:0.25px;right:762.75px;"><span style="margin-right:1.3px">(</span>3<span style="margin-left:1.3px">)</span></div>
<div class="t" style="top:538.76px;font-size:17.3px;line-height:17.3px;color:#1a1a1a;letter-spacing:0.25px;right:624.75px;"><span style="margin-right:1.3px">(</span>3<span style="margin-left:1.3px">)</span></div>
<div class="t" style="top:538.76px;font-size:17.3px;line-height:17.3px;color:#1a1a1a;letter-spacing:0.25px;right:486.75px;"><span style="margin-right:1.3px">(</span>4<span style="margin-left:1.3px">)</span></div>
<div class="t" style="top:538.76px;font-size:17.3px;line-height:17.3px;color:#1a1a1a;letter-spacing:0.25px;right:348.75px;"><span style="margin-right:1.3px">(</span>4<span style="margin-left:1.3px">)</span></div>
<div class="t" style="top:538.76px;font-size:17.3px;line-height:17.3px;color:#1a1a1a;letter-spacing:0.25px;right:210.75px;"><span style="margin-right:1.3px">(</span>4<span style="margin-left:1.3px">)</span></div>
<div class="t" style="top:538.76px;font-size:17.3px;line-height:17.3px;color:#1a1a1a;letter-spacing:0.25px;right:72.75px;"><span style="margin-right:1.3px">(</span>4<span style="margin-left:1.3px">)</span></div>
<div class="t" style="top:561.76px;font-size:17.3px;line-height:17.3px;font-style:italic;color:#1a1a1a;letter-spacing:0.5px;left:93.8px;">% of Revenue</div>
<div class="t" style="top:561.76px;font-size:17.3px;line-height:17.3px;font-style:italic;color:#1a1a1a;letter-spacing:0.6px;right:2239.4px;"><span style="margin-right:1.3px">(</span>9%<span style="margin-left:1.3px">)</span></div>
<div class="t" style="top:561.76px;font-size:17.3px;line-height:17.3px;font-style:italic;color:#1a1a1a;letter-spacing:0.6px;right:2119.4px;"><span style="margin-right:1.3px">(</span>8%<span style="margin-left:1.3px">)</span></div>
<div class="t" style="top:561.76px;font-size:17.3px;line-height:17.3px;font-style:italic;color:#1a1a1a;letter-spacing:0.6px;right:1999.4px;"><span style="margin-right:1.3px">(</span>7%<span style="margin-left:1.3px">)</span></div>
<div class="t" style="top:561.76px;font-size:17.3px;line-height:17.3px;font-style:italic;color:#1a1a1a;letter-spacing:0.6px;right:1879.4px;"><span style="margin-right:1.3px">(</span>6%<span style="margin-left:1.3px">)</span></div>
<div class="t" style="top:561.76px;font-size:17.3px;line-height:17.3px;font-style:italic;color:#1a1a1a;letter-spacing:0.6px;right:1759.4px;"><span style="margin-right:1.3px">(</span>6%<span style="margin-left:1.3px">)</span></div>
<div class="t" style="top:561.76px;font-size:17.3px;line-height:17.3px;font-style:italic;color:#1a1a1a;letter-spacing:0.6px;right:1590.4px;"><span style="margin-right:1.3px">(</span>9%<span style="margin-left:1.3px">)</span></div>
<div class="t" style="top:561.76px;font-size:17.3px;line-height:17.3px;font-style:italic;color:#1a1a1a;letter-spacing:0.6px;right:1452.4px;"><span style="margin-right:1.3px">(</span>9%<span style="margin-left:1.3px">)</span></div>
<div class="t" style="top:561.76px;font-size:17.3px;line-height:17.3px;font-style:italic;color:#1a1a1a;letter-spacing:0.6px;right:1314.4px;"><span style="margin-right:1.3px">(</span>9%<span style="margin-left:1.3px">)</span></div>
<div class="t" style="top:561.76px;font-size:17.3px;line-height:17.3px;font-style:italic;color:#1a1a1a;letter-spacing:0.6px;right:1176.4px;"><span style="margin-right:1.3px">(</span>9%<span style="margin-left:1.3px">)</span></div>
<div class="t" style="top:561.76px;font-size:17.3px;line-height:17.3px;font-style:italic;color:#1a1a1a;letter-spacing:0.6px;right:1038.4px;"><span style="margin-right:1.3px">(</span>9%<span style="margin-left:1.3px">)</span></div>
<div class="t" style="top:561.76px;font-size:17.3px;line-height:17.3px;font-style:italic;color:#1a1a1a;letter-spacing:0.6px;right:900.4px;"><span style="margin-right:1.3px">(</span>9%<span style="margin-left:1.3px">)</span></div>
<div class="t" style="top:561.76px;font-size:17.3px;line-height:17.3px;font-style:italic;color:#1a1a1a;letter-spacing:0.6px;right:762.4px;"><span style="margin-right:1.3px">(</span>9%<span style="margin-left:1.3px">)</span></div>
<div class="t" style="top:561.76px;font-size:17.3px;line-height:17.3px;font-style:italic;color:#1a1a1a;letter-spacing:0.6px;right:624.4px;"><span style="margin-right:1.3px">(</span>9%<span style="margin-left:1.3px">)</span></div>
<div class="t" style="top:561.76px;font-size:17.3px;line-height:17.3px;font-style:italic;color:#1a1a1a;letter-spacing:0.6px;right:486.4px;"><span style="margin-right:1.3px">(</span>9%<span style="margin-left:1.3px">)</span></div>
<div class="t" style="top:561.76px;font-size:17.3px;line-height:17.3px;font-style:italic;color:#1a1a1a;letter-spacing:0.6px;right:348.4px;"><span style="margin-right:1.3px">(</span>9%<span style="margin-left:1.3px">)</span></div>
<div class="t" style="top:561.76px;font-size:17.3px;line-height:17.3px;font-style:italic;color:#1a1a1a;letter-spacing:0.6px;right:210.4px;"><span style="margin-right:1.3px">(</span>9%<span style="margin-left:1.3px">)</span></div>
<div class="t" style="top:561.76px;font-size:17.3px;line-height:17.3px;font-style:italic;color:#1a1a1a;letter-spacing:0.6px;right:72.4px;"><span style="margin-right:1.3px">(</span>9%<span style="margin-left:1.3px">)</span></div>
<div class="r" style="left:71px;top:581px;width:1074px;height:27px;background:#4cb2e6;"></div>
<div class="r" style="left:1176px;top:581px;width:1656px;height:27px;background:#4cb2e6;"></div>
<div class="t" style="top:584.32px;font-size:21.6px;line-height:21.6px;font-weight:700;color:#ffffff;letter-spacing:0.15px;left:86.5px;-webkit-text-stroke:0.45px #ffffff;">Gross Margin</div>
<div class="t" style="top:586.32px;font-size:19px;line-height:19px;font-weight:700;color:#ffffff;-webkit-text-stroke:0.3px #ffffff;letter-spacing:0.3px;right:2247.7px;">359</div>
<div class="t" style="top:586.32px;font-size:19px;line-height:19px;font-weight:700;color:#ffffff;-webkit-text-stroke:0.3px #ffffff;letter-spacing:0.3px;right:2127.7px;">1,158</div>
<div class="t" style="top:586.32px;font-size:19px;line-height:19px;font-weight:700;color:#ffffff;-webkit-text-stroke:0.3px #ffffff;letter-spacing:0.3px;right:2007.7px;">2,791</div>
<div class="t" style="top:586.32px;font-size:19px;line-height:19px;font-weight:700;color:#ffffff;-webkit-text-stroke:0.3px #ffffff;letter-spacing:0.3px;right:1887.7px;">5,518</div>
<div class="t" style="top:586.32px;font-size:19px;line-height:19px;font-weight:700;color:#ffffff;-webkit-text-stroke:0.3px #ffffff;letter-spacing:0.3px;right:1767.7px;">9,476</div>
<div class="t" style="top:586.32px;font-size:19px;line-height:19px;font-weight:700;color:#ffffff;-webkit-text-stroke:0.3px #ffffff;letter-spacing:0.3px;right:1598.7px;">15</div>
<div class="t" style="top:586.32px;font-size:19px;line-height:19px;font-weight:700;color:#ffffff;-webkit-text-stroke:0.3px #ffffff;letter-spacing:0.3px;right:1460.7px;">18</div>
<div class="t" style="top:586.32px;font-size:19px;line-height:19px;font-weight:700;color:#ffffff;-webkit-text-stroke:0.3px #ffffff;letter-spacing:0.3px;right:1322.7px;">21</div>
<div class="t" style="top:586.32px;font-size:19px;line-height:19px;font-weight:700;color:#ffffff;-webkit-text-stroke:0.3px #ffffff;letter-spacing:0.3px;right:1184.7px;">24</div>
<div class="t" style="top:586.32px;font-size:19px;line-height:19px;font-weight:700;color:#ffffff;-webkit-text-stroke:0.3px #ffffff;letter-spacing:0.3px;right:1046.7px;">27</div>
<div class="t" style="top:586.32px;font-size:19px;line-height:19px;font-weight:700;color:#ffffff;-webkit-text-stroke:0.3px #ffffff;letter-spacing:0.3px;right:908.7px;">31</div>
<div class="t" style="top:586.32px;font-size:19px;line-height:19px;font-weight:700;color:#ffffff;-webkit-text-stroke:0.3px #ffffff;letter-spacing:0.3px;right:770.7px;">33</div>
<div class="t" style="top:586.32px;font-size:19px;line-height:19px;font-weight:700;color:#ffffff;-webkit-text-stroke:0.3px #ffffff;letter-spacing:0.3px;right:632.7px;">35</div>
<div class="t" style="top:586.32px;font-size:19px;line-height:19px;font-weight:700;color:#ffffff;-webkit-text-stroke:0.3px #ffffff;letter-spacing:0.3px;right:494.7px;">37</div>
<div class="t" style="top:586.32px;font-size:19px;line-height:19px;font-weight:700;color:#ffffff;-webkit-text-stroke:0.3px #ffffff;letter-spacing:0.3px;right:356.7px;">38</div>
<div class="t" style="top:586.32px;font-size:19px;line-height:19px;font-weight:700;color:#ffffff;-webkit-text-stroke:0.3px #ffffff;letter-spacing:0.3px;right:218.7px;">39</div>
<div class="t" style="top:586.32px;font-size:19px;line-height:19px;font-weight:700;color:#ffffff;-webkit-text-stroke:0.3px #ffffff;letter-spacing:0.3px;right:80.7px;">40</div>
<div class="t" style="top:610.76px;font-size:17.3px;line-height:17.3px;font-style:italic;color:#1a1a1a;letter-spacing:0.5px;left:93.8px;">Gross Margin %</div>
<div class="t" style="top:610.76px;font-size:17.3px;line-height:17.3px;font-style:italic;color:#1a1a1a;letter-spacing:0.6px;right:2248.4px;">91%</div>
<div class="t" style="top:610.76px;font-size:17.3px;line-height:17.3px;font-style:italic;color:#1a1a1a;letter-spacing:0.6px;right:2128.4px;">92%</div>
<div class="t" style="top:610.76px;font-size:17.3px;line-height:17.3px;font-style:italic;color:#1a1a1a;letter-spacing:0.6px;right:2008.4px;">93%</div>
<div class="t" style="top:610.76px;font-size:17.3px;line-height:17.3px;font-style:italic;color:#1a1a1a;letter-spacing:0.6px;right:1888.4px;">94%</div>
<div class="t" style="top:610.76px;font-size:17.3px;line-height:17.3px;font-style:italic;color:#1a1a1a;letter-spacing:0.6px;right:1768.4px;">95%</div>
<div class="t" style="top:610.76px;font-size:17.3px;line-height:17.3px;font-style:italic;color:#1a1a1a;letter-spacing:0.6px;right:1599.4px;">91%</div>
<div class="t" style="top:610.76px;font-size:17.3px;line-height:17.3px;font-style:italic;color:#1a1a1a;letter-spacing:0.6px;right:1461.4px;">91%</div>
<div class="t" style="top:610.76px;font-size:17.3px;line-height:17.3px;font-style:italic;color:#1a1a1a;letter-spacing:0.6px;right:1323.4px;">91%</div>
<div class="t" style="top:610.76px;font-size:17.3px;line-height:17.3px;font-style:italic;color:#1a1a1a;letter-spacing:0.6px;right:1185.4px;">91%</div>
<div class="t" style="top:610.76px;font-size:17.3px;line-height:17.3px;font-style:italic;color:#1a1a1a;letter-spacing:0.6px;right:1047.4px;">91%</div>
<div class="t" style="top:610.76px;font-size:17.3px;line-height:17.3px;font-style:italic;color:#1a1a1a;letter-spacing:0.6px;right:909.4px;">91%</div>
<div class="t" style="top:610.76px;font-size:17.3px;line-height:17.3px;font-style:italic;color:#1a1a1a;letter-spacing:0.6px;right:771.4px;">91%</div>
<div class="t" style="top:610.76px;font-size:17.3px;line-height:17.3px;font-style:italic;color:#1a1a1a;letter-spacing:0.6px;right:633.4px;">91%</div>
<div class="t" style="top:610.76px;font-size:17.3px;line-height:17.3px;font-style:italic;color:#1a1a1a;letter-spacing:0.6px;right:495.4px;">91%</div>
<div class="t" style="top:610.76px;font-size:17.3px;line-height:17.3px;font-style:italic;color:#1a1a1a;letter-spacing:0.6px;right:357.4px;">91%</div>
<div class="t" style="top:610.76px;font-size:17.3px;line-height:17.3px;font-style:italic;color:#1a1a1a;letter-spacing:0.6px;right:219.4px;">91%</div>
<div class="t" style="top:610.76px;font-size:17.3px;line-height:17.3px;font-style:italic;color:#1a1a1a;letter-spacing:0.6px;right:81.4px;">91%</div>
<div class="t" style="top:634.01px;font-size:17px;line-height:17px;color:#1a1a1a;letter-spacing:-0.05px;left:74.8px;">Variable Expenses</div>
<div class="t" style="top:633.76px;font-size:17.3px;line-height:17.3px;color:#1a1a1a;letter-spacing:0.25px;right:2239.75px;"><span style="margin-right:1.3px">(</span>189<span style="margin-left:1.3px">)</span></div>
<div class="t" style="top:633.76px;font-size:17.3px;line-height:17.3px;color:#1a1a1a;letter-spacing:0.25px;right:2119.75px;"><span style="margin-right:1.3px">(</span>461<span style="margin-left:1.3px">)</span></div>
<div class="t" style="top:633.76px;font-size:17.3px;line-height:17.3px;color:#1a1a1a;letter-spacing:0.25px;right:1999.75px;"><span style="margin-right:1.3px">(</span>928<span style="margin-left:1.3px">)</span></div>
<div class="t" style="top:633.76px;font-size:17.3px;line-height:17.3px;color:#1a1a1a;letter-spacing:0.25px;right:1879.75px;"><span style="margin-right:1.3px">(</span>1,612<span style="margin-left:1.3px">)</span></div>
<div class="t" style="top:633.76px;font-size:17.3px;line-height:17.3px;color:#1a1a1a;letter-spacing:0.25px;right:1759.75px;"><span style="margin-right:1.3px">(</span>2,452<span style="margin-left:1.3px">)</span></div>
<div class="t" style="top:633.76px;font-size:17.3px;line-height:17.3px;color:#1a1a1a;letter-spacing:0.25px;right:1590.75px;"><span style="margin-right:1.3px">(</span>14<span style="margin-left:1.3px">)</span></div>
<div class="t" style="top:633.76px;font-size:17.3px;line-height:17.3px;color:#1a1a1a;letter-spacing:0.25px;right:1452.75px;"><span style="margin-right:1.3px">(</span>14<span style="margin-left:1.3px">)</span></div>
<div class="t" style="top:633.76px;font-size:17.3px;line-height:17.3px;color:#1a1a1a;letter-spacing:0.25px;right:1314.75px;"><span style="margin-right:1.3px">(</span>15<span style="margin-left:1.3px">)</span></div>
<div class="t" style="top:633.76px;font-size:17.3px;line-height:17.3px;color:#1a1a1a;letter-spacing:0.25px;right:1176.75px;"><span style="margin-right:1.3px">(</span>15<span style="margin-left:1.3px">)</span></div>
<div class="t" style="top:633.76px;font-size:17.3px;line-height:17.3px;color:#1a1a1a;letter-spacing:0.25px;right:1038.75px;"><span style="margin-right:1.3px">(</span>16<span style="margin-left:1.3px">)</span></div>
<div class="t" style="top:633.76px;font-size:17.3px;line-height:17.3px;color:#1a1a1a;letter-spacing:0.25px;right:900.75px;"><span style="margin-right:1.3px">(</span>16<span style="margin-left:1.3px">)</span></div>
<div class="t" style="top:633.76px;font-size:17.3px;line-height:17.3px;color:#1a1a1a;letter-spacing:0.25px;right:762.75px;"><span style="margin-right:1.3px">(</span>16<span style="margin-left:1.3px">)</span></div>
<div class="t" style="top:633.76px;font-size:17.3px;line-height:17.3px;color:#1a1a1a;letter-spacing:0.25px;right:624.75px;"><span style="margin-right:1.3px">(</span>16<span style="margin-left:1.3px">)</span></div>
<div class="t" style="top:633.76px;font-size:17.3px;line-height:17.3px;color:#1a1a1a;letter-spacing:0.25px;right:486.75px;"><span style="margin-right:1.3px">(</span>17<span style="margin-left:1.3px">)</span></div>
<div class="t" style="top:633.76px;font-size:17.3px;line-height:17.3px;color:#1a1a1a;letter-spacing:0.25px;right:348.75px;"><span style="margin-right:1.3px">(</span>17<span style="margin-left:1.3px">)</span></div>
<div class="t" style="top:633.76px;font-size:17.3px;line-height:17.3px;color:#1a1a1a;letter-spacing:0.25px;right:210.75px;"><span style="margin-right:1.3px">(</span>17<span style="margin-left:1.3px">)</span></div>
<div class="t" style="top:633.76px;font-size:17.3px;line-height:17.3px;color:#1a1a1a;letter-spacing:0.25px;right:72.75px;"><span style="margin-right:1.3px">(</span>17<span style="margin-left:1.3px">)</span></div>
<div class="t" style="top:656.76px;font-size:17.3px;line-height:17.3px;font-style:italic;color:#1a1a1a;letter-spacing:0.5px;left:93.8px;">% of Revenue</div>
<div class="t" style="top:656.76px;font-size:17.3px;line-height:17.3px;font-style:italic;color:#1a1a1a;letter-spacing:0.6px;right:2239.4px;"><span style="margin-right:1.3px">(</span>48%<span style="margin-left:1.3px">)</span></div>
<div class="t" style="top:656.76px;font-size:17.3px;line-height:17.3px;font-style:italic;color:#1a1a1a;letter-spacing:0.6px;right:2119.4px;"><span style="margin-right:1.3px">(</span>37%<span style="margin-left:1.3px">)</span></div>
<div class="t" style="top:656.76px;font-size:17.3px;line-height:17.3px;font-style:italic;color:#1a1a1a;letter-spacing:0.6px;right:1999.4px;"><span style="margin-right:1.3px">(</span>31%<span style="margin-left:1.3px">)</span></div>
<div class="t" style="top:656.76px;font-size:17.3px;line-height:17.3px;font-style:italic;color:#1a1a1a;letter-spacing:0.6px;right:1879.4px;"><span style="margin-right:1.3px">(</span>27%<span style="margin-left:1.3px">)</span></div>
<div class="t" style="top:656.76px;font-size:17.3px;line-height:17.3px;font-style:italic;color:#1a1a1a;letter-spacing:0.6px;right:1759.4px;"><span style="margin-right:1.3px">(</span>24%<span style="margin-left:1.3px">)</span></div>
<div class="t" style="top:656.76px;font-size:17.3px;line-height:17.3px;font-style:italic;color:#1a1a1a;letter-spacing:0.6px;right:1590.4px;"><span style="margin-right:1.3px">(</span>88%<span style="margin-left:1.3px">)</span></div>
<div class="t" style="top:656.76px;font-size:17.3px;line-height:17.3px;font-style:italic;color:#1a1a1a;letter-spacing:0.6px;right:1452.4px;"><span style="margin-right:1.3px">(</span>74%<span style="margin-left:1.3px">)</span></div>
<div class="t" style="top:656.76px;font-size:17.3px;line-height:17.3px;font-style:italic;color:#1a1a1a;letter-spacing:0.6px;right:1314.4px;"><span style="margin-right:1.3px">(</span>64%<span style="margin-left:1.3px">)</span></div>
<div class="t" style="top:656.76px;font-size:17.3px;line-height:17.3px;font-style:italic;color:#1a1a1a;letter-spacing:0.6px;right:1176.4px;"><span style="margin-right:1.3px">(</span>57%<span style="margin-left:1.3px">)</span></div>
<div class="t" style="top:656.76px;font-size:17.3px;line-height:17.3px;font-style:italic;color:#1a1a1a;letter-spacing:0.6px;right:1038.4px;"><span style="margin-right:1.3px">(</span>52%<span style="margin-left:1.3px">)</span></div>
<div class="t" style="top:656.76px;font-size:17.3px;line-height:17.3px;font-style:italic;color:#1a1a1a;letter-spacing:0.6px;right:900.4px;"><span style="margin-right:1.3px">(</span>47%<span style="margin-left:1.3px">)</span></div>
<div class="t" style="top:656.76px;font-size:17.3px;line-height:17.3px;font-style:italic;color:#1a1a1a;letter-spacing:0.6px;right:762.4px;"><span style="margin-right:1.3px">(</span>45%<span style="margin-left:1.3px">)</span></div>
<div class="t" style="top:656.76px;font-size:17.3px;line-height:17.3px;font-style:italic;color:#1a1a1a;letter-spacing:0.6px;right:624.4px;"><span style="margin-right:1.3px">(</span>42%<span style="margin-left:1.3px">)</span></div>
<div class="t" style="top:656.76px;font-size:17.3px;line-height:17.3px;font-style:italic;color:#1a1a1a;letter-spacing:0.6px;right:486.4px;"><span style="margin-right:1.3px">(</span>40%<span style="margin-left:1.3px">)</span></div>
<div class="t" style="top:656.76px;font-size:17.3px;line-height:17.3px;font-style:italic;color:#1a1a1a;letter-spacing:0.6px;right:348.4px;"><span style="margin-right:1.3px">(</span>40%<span style="margin-left:1.3px">)</span></div>
<div class="t" style="top:656.76px;font-size:17.3px;line-height:17.3px;font-style:italic;color:#1a1a1a;letter-spacing:0.6px;right:210.4px;"><span style="margin-right:1.3px">(</span>39%<span style="margin-left:1.3px">)</span></div>
<div class="t" style="top:656.76px;font-size:17.3px;line-height:17.3px;font-style:italic;color:#1a1a1a;letter-spacing:0.6px;right:72.4px;"><span style="margin-right:1.3px">(</span>38%<span style="margin-left:1.3px">)</span></div>
<div class="r" style="left:71px;top:676px;width:1074px;height:27px;background:#4cb2e6;"></div>
<div class="r" style="left:1176px;top:676px;width:1656px;height:27px;background:#4cb2e6;"></div>
<div class="t" style="top:679.32px;font-size:21.6px;line-height:21.6px;font-weight:700;color:#ffffff;letter-spacing:0.15px;left:86.5px;-webkit-text-stroke:0.45px #ffffff;">Contribution Margin</div>
<div class="t" style="top:681.32px;font-size:19px;line-height:19px;font-weight:700;color:#ffffff;-webkit-text-stroke:0.3px #ffffff;letter-spacing:0.3px;right:2247.7px;">170</div>
<div class="t" style="top:681.32px;font-size:19px;line-height:19px;font-weight:700;color:#ffffff;-webkit-text-stroke:0.3px #ffffff;letter-spacing:0.3px;right:2127.7px;">697</div>
<div class="t" style="top:681.32px;font-size:19px;line-height:19px;font-weight:700;color:#ffffff;-webkit-text-stroke:0.3px #ffffff;letter-spacing:0.3px;right:2007.7px;">1,863</div>
<div class="t" style="top:681.32px;font-size:19px;line-height:19px;font-weight:700;color:#ffffff;-webkit-text-stroke:0.3px #ffffff;letter-spacing:0.3px;right:1887.7px;">3,905</div>
<div class="t" style="top:681.32px;font-size:19px;line-height:19px;font-weight:700;color:#ffffff;-webkit-text-stroke:0.3px #ffffff;letter-spacing:0.3px;right:1767.7px;">7,024</div>
<div class="t" style="top:681.32px;font-size:19px;line-height:19px;font-weight:700;color:#ffffff;-webkit-text-stroke:0.3px #ffffff;letter-spacing:0.3px;right:1598.7px;">1</div>
<div class="t" style="top:681.32px;font-size:19px;line-height:19px;font-weight:700;color:#ffffff;-webkit-text-stroke:0.3px #ffffff;letter-spacing:0.3px;right:1460.7px;">3</div>
<div class="t" style="top:681.32px;font-size:19px;line-height:19px;font-weight:700;color:#ffffff;-webkit-text-stroke:0.3px #ffffff;letter-spacing:0.3px;right:1322.7px;">6</div>
<div class="t" style="top:681.32px;font-size:19px;line-height:19px;font-weight:700;color:#ffffff;-webkit-text-stroke:0.3px #ffffff;letter-spacing:0.3px;right:1184.7px;">9</div>
<div class="t" style="top:681.32px;font-size:19px;line-height:19px;font-weight:700;color:#ffffff;-webkit-text-stroke:0.3px #ffffff;letter-spacing:0.3px;right:1046.7px;">12</div>
<div class="t" style="top:681.32px;font-size:19px;line-height:19px;font-weight:700;color:#ffffff;-webkit-text-stroke:0.3px #ffffff;letter-spacing:0.3px;right:908.7px;">15</div>
<div class="t" style="top:681.32px;font-size:19px;line-height:19px;font-weight:700;color:#ffffff;-webkit-text-stroke:0.3px #ffffff;letter-spacing:0.3px;right:770.7px;">17</div>
<div class="t" style="top:681.32px;font-size:19px;line-height:19px;font-weight:700;color:#ffffff;-webkit-text-stroke:0.3px #ffffff;letter-spacing:0.3px;right:632.7px;">19</div>
<div class="t" style="top:681.32px;font-size:19px;line-height:19px;font-weight:700;color:#ffffff;-webkit-text-stroke:0.3px #ffffff;letter-spacing:0.3px;right:494.7px;">21</div>
<div class="t" style="top:681.32px;font-size:19px;line-height:19px;font-weight:700;color:#ffffff;-webkit-text-stroke:0.3px #ffffff;letter-spacing:0.3px;right:356.7px;">22</div>
<div class="t" style="top:681.32px;font-size:19px;line-height:19px;font-weight:700;color:#ffffff;-webkit-text-stroke:0.3px #ffffff;letter-spacing:0.3px;right:218.7px;">23</div>
<div class="t" style="top:681.32px;font-size:19px;line-height:19px;font-weight:700;color:#ffffff;-webkit-text-stroke:0.3px #ffffff;letter-spacing:0.3px;right:80.7px;">23</div>
<div class="t" style="top:705.76px;font-size:17.3px;line-height:17.3px;font-style:italic;color:#1a1a1a;letter-spacing:0.5px;left:93.8px;">Contribution Margin %</div>
<div class="t" style="top:705.76px;font-size:17.3px;line-height:17.3px;font-style:italic;color:#1a1a1a;letter-spacing:0.6px;right:2248.4px;">43%</div>
<div class="t" style="top:705.76px;font-size:17.3px;line-height:17.3px;font-style:italic;color:#1a1a1a;letter-spacing:0.6px;right:2128.4px;">55%</div>
<div class="t" style="top:705.76px;font-size:17.3px;line-height:17.3px;font-style:italic;color:#1a1a1a;letter-spacing:0.6px;right:2008.4px;">62%</div>
<div class="t" style="top:705.76px;font-size:17.3px;line-height:17.3px;font-style:italic;color:#1a1a1a;letter-spacing:0.6px;right:1888.4px;">66%</div>
<div class="t" style="top:705.76px;font-size:17.3px;line-height:17.3px;font-style:italic;color:#1a1a1a;letter-spacing:0.6px;right:1768.4px;">70%</div>
<div class="t" style="top:705.76px;font-size:17.3px;line-height:17.3px;font-style:italic;color:#1a1a1a;letter-spacing:0.6px;right:1599.4px;">3%</div>
<div class="t" style="top:705.76px;font-size:17.3px;line-height:17.3px;font-style:italic;color:#1a1a1a;letter-spacing:0.6px;right:1461.4px;">17%</div>
<div class="t" style="top:705.76px;font-size:17.3px;line-height:17.3px;font-style:italic;color:#1a1a1a;letter-spacing:0.6px;right:1323.4px;">27%</div>
<div class="t" style="top:705.76px;font-size:17.3px;line-height:17.3px;font-style:italic;color:#1a1a1a;letter-spacing:0.6px;right:1185.4px;">34%</div>
<div class="t" style="top:705.76px;font-size:17.3px;line-height:17.3px;font-style:italic;color:#1a1a1a;letter-spacing:0.6px;right:1047.4px;">39%</div>
<div class="t" style="top:705.76px;font-size:17.3px;line-height:17.3px;font-style:italic;color:#1a1a1a;letter-spacing:0.6px;right:909.4px;">44%</div>
<div class="t" style="top:705.76px;font-size:17.3px;line-height:17.3px;font-style:italic;color:#1a1a1a;letter-spacing:0.6px;right:771.4px;">46%</div>
<div class="t" style="top:705.76px;font-size:17.3px;line-height:17.3px;font-style:italic;color:#1a1a1a;letter-spacing:0.6px;right:633.4px;">49%</div>
<div class="t" style="top:705.76px;font-size:17.3px;line-height:17.3px;font-style:italic;color:#1a1a1a;letter-spacing:0.6px;right:495.4px;">51%</div>
<div class="t" style="top:705.76px;font-size:17.3px;line-height:17.3px;font-style:italic;color:#1a1a1a;letter-spacing:0.6px;right:357.4px;">51%</div>
<div class="t" style="top:705.76px;font-size:17.3px;line-height:17.3px;font-style:italic;color:#1a1a1a;letter-spacing:0.6px;right:219.4px;">52%</div>
<div class="t" style="top:705.76px;font-size:17.3px;line-height:17.3px;font-style:italic;color:#1a1a1a;letter-spacing:0.6px;right:81.4px;">53%</div>
<div class="t" style="top:729.01px;font-size:17px;line-height:17px;color:#1a1a1a;letter-spacing:-0.05px;left:74.8px;">Payroll Expenses</div>
<div class="t" style="top:728.76px;font-size:17.3px;line-height:17.3px;color:#1a1a1a;letter-spacing:0.25px;right:2239.75px;"><span style="margin-right:1.3px">(</span>517<span style="margin-left:1.3px">)</span></div>
<div class="t" style="top:728.76px;font-size:17.3px;line-height:17.3px;color:#1a1a1a;letter-spacing:0.25px;right:2119.75px;"><span style="margin-right:1.3px">(</span>767<span style="margin-left:1.3px">)</span></div>
<div class="t" style="top:728.76px;font-size:17.3px;line-height:17.3px;color:#1a1a1a;letter-spacing:0.25px;right:1999.75px;"><span style="margin-right:1.3px">(</span>1,023<span style="margin-left:1.3px">)</span></div>
<div class="t" style="top:728.76px;font-size:17.3px;line-height:17.3px;color:#1a1a1a;letter-spacing:0.25px;right:1879.75px;"><span style="margin-right:1.3px">(</span>1,303<span style="margin-left:1.3px">)</span></div>
<div class="t" style="top:728.76px;font-size:17.3px;line-height:17.3px;color:#1a1a1a;letter-spacing:0.25px;right:1759.75px;"><span style="margin-right:1.3px">(</span>1,599<span style="margin-left:1.3px">)</span></div>
<div class="t" style="top:728.76px;font-size:17.3px;line-height:17.3px;color:#1a1a1a;letter-spacing:0.25px;right:1590.75px;"><span style="margin-right:1.3px">(</span>43<span style="margin-left:1.3px">)</span></div>
<div class="t" style="top:728.76px;font-size:17.3px;line-height:17.3px;color:#1a1a1a;letter-spacing:0.25px;right:1452.75px;"><span style="margin-right:1.3px">(</span>43<span style="margin-left:1.3px">)</span></div>
<div class="t" style="top:728.76px;font-size:17.3px;line-height:17.3px;color:#1a1a1a;letter-spacing:0.25px;right:1314.75px;"><span style="margin-right:1.3px">(</span>43<span style="margin-left:1.3px">)</span></div>
<div class="t" style="top:728.76px;font-size:17.3px;line-height:17.3px;color:#1a1a1a;letter-spacing:0.25px;right:1176.75px;"><span style="margin-right:1.3px">(</span>43<span style="margin-left:1.3px">)</span></div>
<div class="t" style="top:728.76px;font-size:17.3px;line-height:17.3px;color:#1a1a1a;letter-spacing:0.25px;right:1038.75px;"><span style="margin-right:1.3px">(</span>43<span style="margin-left:1.3px">)</span></div>
<div class="t" style="top:728.76px;font-size:17.3px;line-height:17.3px;color:#1a1a1a;letter-spacing:0.25px;right:900.75px;"><span style="margin-right:1.3px">(</span>43<span style="margin-left:1.3px">)</span></div>
<div class="t" style="top:728.76px;font-size:17.3px;line-height:17.3px;color:#1a1a1a;letter-spacing:0.25px;right:762.75px;"><span style="margin-right:1.3px">(</span>43<span style="margin-left:1.3px">)</span></div>
<div class="t" style="top:728.76px;font-size:17.3px;line-height:17.3px;color:#1a1a1a;letter-spacing:0.25px;right:624.75px;"><span style="margin-right:1.3px">(</span>43<span style="margin-left:1.3px">)</span></div>
<div class="t" style="top:728.76px;font-size:17.3px;line-height:17.3px;color:#1a1a1a;letter-spacing:0.25px;right:486.75px;"><span style="margin-right:1.3px">(</span>43<span style="margin-left:1.3px">)</span></div>
<div class="t" style="top:728.76px;font-size:17.3px;line-height:17.3px;color:#1a1a1a;letter-spacing:0.25px;right:348.75px;"><span style="margin-right:1.3px">(</span>43<span style="margin-left:1.3px">)</span></div>
<div class="t" style="top:728.76px;font-size:17.3px;line-height:17.3px;color:#1a1a1a;letter-spacing:0.25px;right:210.75px;"><span style="margin-right:1.3px">(</span>43<span style="margin-left:1.3px">)</span></div>
<div class="t" style="top:728.76px;font-size:17.3px;line-height:17.3px;color:#1a1a1a;letter-spacing:0.25px;right:72.75px;"><span style="margin-right:1.3px">(</span>43<span style="margin-left:1.3px">)</span></div>
<div class="t" style="top:751.76px;font-size:17.3px;line-height:17.3px;font-style:italic;color:#1a1a1a;letter-spacing:0.5px;left:93.8px;">% of Revenue</div>
<div class="t" style="top:751.76px;font-size:17.3px;line-height:17.3px;font-style:italic;color:#1a1a1a;letter-spacing:0.6px;right:2239.4px;"><span style="margin-right:1.3px">(</span>131%<span style="margin-left:1.3px">)</span></div>
<div class="t" style="top:751.76px;font-size:17.3px;line-height:17.3px;font-style:italic;color:#1a1a1a;letter-spacing:0.6px;right:2119.4px;"><span style="margin-right:1.3px">(</span>61%<span style="margin-left:1.3px">)</span></div>
<div class="t" style="top:751.76px;font-size:17.3px;line-height:17.3px;font-style:italic;color:#1a1a1a;letter-spacing:0.6px;right:1999.4px;"><span style="margin-right:1.3px">(</span>34%<span style="margin-left:1.3px">)</span></div>
<div class="t" style="top:751.76px;font-size:17.3px;line-height:17.3px;font-style:italic;color:#1a1a1a;letter-spacing:0.6px;right:1879.4px;"><span style="margin-right:1.3px">(</span>22%<span style="margin-left:1.3px">)</span></div>
<div class="t" style="top:751.76px;font-size:17.3px;line-height:17.3px;font-style:italic;color:#1a1a1a;letter-spacing:0.6px;right:1759.4px;"><span style="margin-right:1.3px">(</span>16%<span style="margin-left:1.3px">)</span></div>
<div class="t" style="top:751.76px;font-size:17.3px;line-height:17.3px;font-style:italic;color:#1a1a1a;letter-spacing:0.6px;right:1590.4px;"><span style="margin-right:1.3px">(</span>268%<span style="margin-left:1.3px">)</span></div>
<div class="t" style="top:751.76px;font-size:17.3px;line-height:17.3px;font-style:italic;color:#1a1a1a;letter-spacing:0.6px;right:1452.4px;"><span style="margin-right:1.3px">(</span>220%<span style="margin-left:1.3px">)</span></div>
<div class="t" style="top:751.76px;font-size:17.3px;line-height:17.3px;font-style:italic;color:#1a1a1a;letter-spacing:0.6px;right:1314.4px;"><span style="margin-right:1.3px">(</span>187%<span style="margin-left:1.3px">)</span></div>
<div class="t" style="top:751.76px;font-size:17.3px;line-height:17.3px;font-style:italic;color:#1a1a1a;letter-spacing:0.6px;right:1176.4px;"><span style="margin-right:1.3px">(</span>162%<span style="margin-left:1.3px">)</span></div>
<div class="t" style="top:751.76px;font-size:17.3px;line-height:17.3px;font-style:italic;color:#1a1a1a;letter-spacing:0.6px;right:1038.4px;"><span style="margin-right:1.3px">(</span>143%<span style="margin-left:1.3px">)</span></div>
<div class="t" style="top:751.76px;font-size:17.3px;line-height:17.3px;font-style:italic;color:#1a1a1a;letter-spacing:0.6px;right:900.4px;"><span style="margin-right:1.3px">(</span>128%<span style="margin-left:1.3px">)</span></div>
<div class="t" style="top:751.76px;font-size:17.3px;line-height:17.3px;font-style:italic;color:#1a1a1a;letter-spacing:0.6px;right:762.4px;"><span style="margin-right:1.3px">(</span>119%<span style="margin-left:1.3px">)</span></div>
<div class="t" style="top:751.76px;font-size:17.3px;line-height:17.3px;font-style:italic;color:#1a1a1a;letter-spacing:0.6px;right:624.4px;"><span style="margin-right:1.3px">(</span>112%<span style="margin-left:1.3px">)</span></div>
<div class="t" style="top:751.76px;font-size:17.3px;line-height:17.3px;font-style:italic;color:#1a1a1a;letter-spacing:0.6px;right:486.4px;"><span style="margin-right:1.3px">(</span>105%<span style="margin-left:1.3px">)</span></div>
<div class="t" style="top:751.76px;font-size:17.3px;line-height:17.3px;font-style:italic;color:#1a1a1a;letter-spacing:0.6px;right:348.4px;"><span style="margin-right:1.3px">(</span>102%<span style="margin-left:1.3px">)</span></div>
<div class="t" style="top:751.76px;font-size:17.3px;line-height:17.3px;font-style:italic;color:#1a1a1a;letter-spacing:0.6px;right:210.4px;"><span style="margin-right:1.3px">(</span>99%<span style="margin-left:1.3px">)</span></div>
<div class="t" style="top:751.76px;font-size:17.3px;line-height:17.3px;font-style:italic;color:#1a1a1a;letter-spacing:0.6px;right:72.4px;"><span style="margin-right:1.3px">(</span>97%<span style="margin-left:1.3px">)</span></div>
<div class="t" style="top:780.01px;font-size:17px;line-height:17px;color:#1a1a1a;letter-spacing:-0.05px;left:74.8px;">Fixed Expenses</div>
<div class="t" style="top:779.76px;font-size:17.3px;line-height:17.3px;color:#1a1a1a;letter-spacing:0.25px;right:2239.75px;"><span style="margin-right:1.3px">(</span>110<span style="margin-left:1.3px">)</span></div>
<div class="t" style="top:779.76px;font-size:17.3px;line-height:17.3px;color:#1a1a1a;letter-spacing:0.25px;right:2119.75px;"><span style="margin-right:1.3px">(</span>110<span style="margin-left:1.3px">)</span></div>
<div class="t" style="top:779.76px;font-size:17.3px;line-height:17.3px;color:#1a1a1a;letter-spacing:0.25px;right:1999.75px;"><span style="margin-right:1.3px">(</span>110<span style="margin-left:1.3px">)</span></div>
<div class="t" style="top:779.76px;font-size:17.3px;line-height:17.3px;color:#1a1a1a;letter-spacing:0.25px;right:1879.75px;"><span style="margin-right:1.3px">(</span>110<span style="margin-left:1.3px">)</span></div>
<div class="t" style="top:779.76px;font-size:17.3px;line-height:17.3px;color:#1a1a1a;letter-spacing:0.25px;right:1759.75px;"><span style="margin-right:1.3px">(</span>110<span style="margin-left:1.3px">)</span></div>
<div class="t" style="top:779.76px;font-size:17.3px;line-height:17.3px;color:#1a1a1a;letter-spacing:0.25px;right:1590.75px;"><span style="margin-right:1.3px">(</span>9<span style="margin-left:1.3px">)</span></div>
<div class="t" style="top:779.76px;font-size:17.3px;line-height:17.3px;color:#1a1a1a;letter-spacing:0.25px;right:1452.75px;"><span style="margin-right:1.3px">(</span>9<span style="margin-left:1.3px">)</span></div>
<div class="t" style="top:779.76px;font-size:17.3px;line-height:17.3px;color:#1a1a1a;letter-spacing:0.25px;right:1314.75px;"><span style="margin-right:1.3px">(</span>9<span style="margin-left:1.3px">)</span></div>
<div class="t" style="top:779.76px;font-size:17.3px;line-height:17.3px;color:#1a1a1a;letter-spacing:0.25px;right:1176.75px;"><span style="margin-right:1.3px">(</span>9<span style="margin-left:1.3px">)</span></div>
<div class="t" style="top:779.76px;font-size:17.3px;line-height:17.3px;color:#1a1a1a;letter-spacing:0.25px;right:1038.75px;"><span style="margin-right:1.3px">(</span>9<span style="margin-left:1.3px">)</span></div>
<div class="t" style="top:779.76px;font-size:17.3px;line-height:17.3px;color:#1a1a1a;letter-spacing:0.25px;right:900.75px;"><span style="margin-right:1.3px">(</span>9<span style="margin-left:1.3px">)</span></div>
<div class="t" style="top:779.76px;font-size:17.3px;line-height:17.3px;color:#1a1a1a;letter-spacing:0.25px;right:762.75px;"><span style="margin-right:1.3px">(</span>9<span style="margin-left:1.3px">)</span></div>
<div class="t" style="top:779.76px;font-size:17.3px;line-height:17.3px;color:#1a1a1a;letter-spacing:0.25px;right:624.75px;"><span style="margin-right:1.3px">(</span>9<span style="margin-left:1.3px">)</span></div>
<div class="t" style="top:779.76px;font-size:17.3px;line-height:17.3px;color:#1a1a1a;letter-spacing:0.25px;right:486.75px;"><span style="margin-right:1.3px">(</span>9<span style="margin-left:1.3px">)</span></div>
<div class="t" style="top:779.76px;font-size:17.3px;line-height:17.3px;color:#1a1a1a;letter-spacing:0.25px;right:348.75px;"><span style="margin-right:1.3px">(</span>9<span style="margin-left:1.3px">)</span></div>
<div class="t" style="top:779.76px;font-size:17.3px;line-height:17.3px;color:#1a1a1a;letter-spacing:0.25px;right:210.75px;"><span style="margin-right:1.3px">(</span>9<span style="margin-left:1.3px">)</span></div>
<div class="t" style="top:779.76px;font-size:17.3px;line-height:17.3px;color:#1a1a1a;letter-spacing:0.25px;right:72.75px;"><span style="margin-right:1.3px">(</span>9<span style="margin-left:1.3px">)</span></div>
<div class="t" style="top:802.76px;font-size:17.3px;line-height:17.3px;font-style:italic;color:#1a1a1a;letter-spacing:0.5px;left:93.8px;">% of Revenue</div>
<div class="t" style="top:802.76px;font-size:17.3px;line-height:17.3px;font-style:italic;color:#1a1a1a;letter-spacing:0.6px;right:2239.4px;"><span style="margin-right:1.3px">(</span>28%<span style="margin-left:1.3px">)</span></div>
<div class="t" style="top:802.76px;font-size:17.3px;line-height:17.3px;font-style:italic;color:#1a1a1a;letter-spacing:0.6px;right:2119.4px;"><span style="margin-right:1.3px">(</span>9%<span style="margin-left:1.3px">)</span></div>
<div class="t" style="top:802.76px;font-size:17.3px;line-height:17.3px;font-style:italic;color:#1a1a1a;letter-spacing:0.6px;right:1999.4px;"><span style="margin-right:1.3px">(</span>4%<span style="margin-left:1.3px">)</span></div>
<div class="t" style="top:802.76px;font-size:17.3px;line-height:17.3px;font-style:italic;color:#1a1a1a;letter-spacing:0.6px;right:1879.4px;"><span style="margin-right:1.3px">(</span>2%<span style="margin-left:1.3px">)</span></div>
<div class="t" style="top:802.76px;font-size:17.3px;line-height:17.3px;font-style:italic;color:#1a1a1a;letter-spacing:0.6px;right:1759.4px;"><span style="margin-right:1.3px">(</span>1%<span style="margin-left:1.3px">)</span></div>
<div class="t" style="top:802.76px;font-size:17.3px;line-height:17.3px;font-style:italic;color:#1a1a1a;letter-spacing:0.6px;right:1590.4px;"><span style="margin-right:1.3px">(</span>57%<span style="margin-left:1.3px">)</span></div>
<div class="t" style="top:802.76px;font-size:17.3px;line-height:17.3px;font-style:italic;color:#1a1a1a;letter-spacing:0.6px;right:1452.4px;"><span style="margin-right:1.3px">(</span>47%<span style="margin-left:1.3px">)</span></div>
<div class="t" style="top:802.76px;font-size:17.3px;line-height:17.3px;font-style:italic;color:#1a1a1a;letter-spacing:0.6px;right:1314.4px;"><span style="margin-right:1.3px">(</span>40%<span style="margin-left:1.3px">)</span></div>
<div class="t" style="top:802.76px;font-size:17.3px;line-height:17.3px;font-style:italic;color:#1a1a1a;letter-spacing:0.6px;right:1176.4px;"><span style="margin-right:1.3px">(</span>35%<span style="margin-left:1.3px">)</span></div>
<div class="t" style="top:802.76px;font-size:17.3px;line-height:17.3px;font-style:italic;color:#1a1a1a;letter-spacing:0.6px;right:1038.4px;"><span style="margin-right:1.3px">(</span>31%<span style="margin-left:1.3px">)</span></div>
<div class="t" style="top:802.76px;font-size:17.3px;line-height:17.3px;font-style:italic;color:#1a1a1a;letter-spacing:0.6px;right:900.4px;"><span style="margin-right:1.3px">(</span>27%<span style="margin-left:1.3px">)</span></div>
<div class="t" style="top:802.76px;font-size:17.3px;line-height:17.3px;font-style:italic;color:#1a1a1a;letter-spacing:0.6px;right:762.4px;"><span style="margin-right:1.3px">(</span>25%<span style="margin-left:1.3px">)</span></div>
<div class="t" style="top:802.76px;font-size:17.3px;line-height:17.3px;font-style:italic;color:#1a1a1a;letter-spacing:0.6px;right:624.4px;"><span style="margin-right:1.3px">(</span>24%<span style="margin-left:1.3px">)</span></div>
<div class="t" style="top:802.76px;font-size:17.3px;line-height:17.3px;font-style:italic;color:#1a1a1a;letter-spacing:0.6px;right:486.4px;"><span style="margin-right:1.3px">(</span>22%<span style="margin-left:1.3px">)</span></div>
<div class="t" style="top:802.76px;font-size:17.3px;line-height:17.3px;font-style:italic;color:#1a1a1a;letter-spacing:0.6px;right:348.4px;"><span style="margin-right:1.3px">(</span>22%<span style="margin-left:1.3px">)</span></div>
<div class="t" style="top:802.76px;font-size:17.3px;line-height:17.3px;font-style:italic;color:#1a1a1a;letter-spacing:0.6px;right:210.4px;"><span style="margin-right:1.3px">(</span>21%<span style="margin-left:1.3px">)</span></div>
<div class="t" style="top:802.76px;font-size:17.3px;line-height:17.3px;font-style:italic;color:#1a1a1a;letter-spacing:0.6px;right:72.4px;"><span style="margin-right:1.3px">(</span>21%<span style="margin-left:1.3px">)</span></div>
<div class="r" style="left:71px;top:827px;width:1074px;height:27px;background:#4cb2e6;"></div>
<div class="r" style="left:1176px;top:827px;width:1656px;height:27px;background:#4cb2e6;"></div>
<div class="t" style="top:830.32px;font-size:21.6px;line-height:21.6px;font-weight:700;color:#ffffff;letter-spacing:0.15px;left:86.5px;-webkit-text-stroke:0.45px #ffffff;">EBITDA</div>
<div class="t" style="top:832.32px;font-size:19px;line-height:19px;font-weight:700;color:#ffffff;-webkit-text-stroke:0.3px #ffffff;letter-spacing:0.3px;right:2239.7px;"><span style="margin-right:0.6px">(</span>458<span style="margin-left:0.6px">)</span></div>
<div class="t" style="top:832.32px;font-size:19px;line-height:19px;font-weight:700;color:#ffffff;-webkit-text-stroke:0.3px #ffffff;letter-spacing:0.3px;right:2119.7px;"><span style="margin-right:0.6px">(</span>181<span style="margin-left:0.6px">)</span></div>
<div class="t" style="top:832.32px;font-size:19px;line-height:19px;font-weight:700;color:#ffffff;-webkit-text-stroke:0.3px #ffffff;letter-spacing:0.3px;right:2007.7px;">730</div>
<div class="t" style="top:832.32px;font-size:19px;line-height:19px;font-weight:700;color:#ffffff;-webkit-text-stroke:0.3px #ffffff;letter-spacing:0.3px;right:1887.7px;">2,492</div>
<div class="t" style="top:832.32px;font-size:19px;line-height:19px;font-weight:700;color:#ffffff;-webkit-text-stroke:0.3px #ffffff;letter-spacing:0.3px;right:1767.7px;">5,315</div>
<div class="t" style="top:832.32px;font-size:19px;line-height:19px;font-weight:700;color:#ffffff;-webkit-text-stroke:0.3px #ffffff;letter-spacing:0.3px;right:1590.7px;"><span style="margin-right:0.6px">(</span>52<span style="margin-left:0.6px">)</span></div>
<div class="t" style="top:832.32px;font-size:19px;line-height:19px;font-weight:700;color:#ffffff;-webkit-text-stroke:0.3px #ffffff;letter-spacing:0.3px;right:1452.7px;"><span style="margin-right:0.6px">(</span>49<span style="margin-left:0.6px">)</span></div>
<div class="t" style="top:832.32px;font-size:19px;line-height:19px;font-weight:700;color:#ffffff;-webkit-text-stroke:0.3px #ffffff;letter-spacing:0.3px;right:1314.7px;"><span style="margin-right:0.6px">(</span>46<span style="margin-left:0.6px">)</span></div>
<div class="t" style="top:832.32px;font-size:19px;line-height:19px;font-weight:700;color:#ffffff;-webkit-text-stroke:0.3px #ffffff;letter-spacing:0.3px;right:1176.7px;"><span style="margin-right:0.6px">(</span>43<span style="margin-left:0.6px">)</span></div>
<div class="t" style="top:832.32px;font-size:19px;line-height:19px;font-weight:700;color:#ffffff;-webkit-text-stroke:0.3px #ffffff;letter-spacing:0.3px;right:1038.7px;"><span style="margin-right:0.6px">(</span>40<span style="margin-left:0.6px">)</span></div>
<div class="t" style="top:832.32px;font-size:19px;line-height:19px;font-weight:700;color:#ffffff;-webkit-text-stroke:0.3px #ffffff;letter-spacing:0.3px;right:900.7px;"><span style="margin-right:0.6px">(</span>38<span style="margin-left:0.6px">)</span></div>
<div class="t" style="top:832.32px;font-size:19px;line-height:19px;font-weight:700;color:#ffffff;-webkit-text-stroke:0.3px #ffffff;letter-spacing:0.3px;right:762.7px;"><span style="margin-right:0.6px">(</span>36<span style="margin-left:0.6px">)</span></div>
<div class="t" style="top:832.32px;font-size:19px;line-height:19px;font-weight:700;color:#ffffff;-webkit-text-stroke:0.3px #ffffff;letter-spacing:0.3px;right:624.7px;"><span style="margin-right:0.6px">(</span>34<span style="margin-left:0.6px">)</span></div>
<div class="t" style="top:832.32px;font-size:19px;line-height:19px;font-weight:700;color:#ffffff;-webkit-text-stroke:0.3px #ffffff;letter-spacing:0.3px;right:486.7px;"><span style="margin-right:0.6px">(</span>32<span style="margin-left:0.6px">)</span></div>
<div class="t" style="top:832.32px;font-size:19px;line-height:19px;font-weight:700;color:#ffffff;-webkit-text-stroke:0.3px #ffffff;letter-spacing:0.3px;right:348.7px;"><span style="margin-right:0.6px">(</span>31<span style="margin-left:0.6px">)</span></div>
<div class="t" style="top:832.32px;font-size:19px;line-height:19px;font-weight:700;color:#ffffff;-webkit-text-stroke:0.3px #ffffff;letter-spacing:0.3px;right:210.7px;"><span style="margin-right:0.6px">(</span>30<span style="margin-left:0.6px">)</span></div>
<div class="t" style="top:832.32px;font-size:19px;line-height:19px;font-weight:700;color:#ffffff;-webkit-text-stroke:0.3px #ffffff;letter-spacing:0.3px;right:72.7px;"><span style="margin-right:0.6px">(</span>29<span style="margin-left:0.6px">)</span></div>
<div class="t" style="top:856.76px;font-size:17.3px;line-height:17.3px;font-style:italic;color:#1a1a1a;letter-spacing:0.5px;left:75.5px;">EBITDA %</div>
<div class="t" style="top:856.76px;font-size:17.3px;line-height:17.3px;font-style:italic;color:#1a1a1a;letter-spacing:0.6px;right:2239.4px;"><span style="margin-right:1.3px">(</span>116%<span style="margin-left:1.3px">)</span></div>
<div class="t" style="top:856.76px;font-size:17.3px;line-height:17.3px;font-style:italic;color:#1a1a1a;letter-spacing:0.6px;right:2119.4px;"><span style="margin-right:1.3px">(</span>14%<span style="margin-left:1.3px">)</span></div>
<div class="t" style="top:856.76px;font-size:17.3px;line-height:17.3px;font-style:italic;color:#1a1a1a;letter-spacing:0.6px;right:2008.4px;">24%</div>
<div class="t" style="top:856.76px;font-size:17.3px;line-height:17.3px;font-style:italic;color:#1a1a1a;letter-spacing:0.6px;right:1888.4px;">42%</div>
<div class="t" style="top:856.76px;font-size:17.3px;line-height:17.3px;font-style:italic;color:#1a1a1a;letter-spacing:0.6px;right:1768.4px;">53%</div>
<div class="t" style="top:856.76px;font-size:17.3px;line-height:17.3px;font-style:italic;color:#1a1a1a;letter-spacing:0.6px;right:1590.4px;"><span style="margin-right:1.3px">(</span>322%<span style="margin-left:1.3px">)</span></div>
<div class="t" style="top:856.76px;font-size:17.3px;line-height:17.3px;font-style:italic;color:#1a1a1a;letter-spacing:0.6px;right:1452.4px;"><span style="margin-right:1.3px">(</span>250%<span style="margin-left:1.3px">)</span></div>
<div class="t" style="top:856.76px;font-size:17.3px;line-height:17.3px;font-style:italic;color:#1a1a1a;letter-spacing:0.6px;right:1314.4px;"><span style="margin-right:1.3px">(</span>200%<span style="margin-left:1.3px">)</span></div>
<div class="t" style="top:856.76px;font-size:17.3px;line-height:17.3px;font-style:italic;color:#1a1a1a;letter-spacing:0.6px;right:1176.4px;"><span style="margin-right:1.3px">(</span>162%<span style="margin-left:1.3px">)</span></div>
<div class="t" style="top:856.76px;font-size:17.3px;line-height:17.3px;font-style:italic;color:#1a1a1a;letter-spacing:0.6px;right:1038.4px;"><span style="margin-right:1.3px">(</span>134%<span style="margin-left:1.3px">)</span></div>
<div class="t" style="top:856.76px;font-size:17.3px;line-height:17.3px;font-style:italic;color:#1a1a1a;letter-spacing:0.6px;right:900.4px;"><span style="margin-right:1.3px">(</span>112%<span style="margin-left:1.3px">)</span></div>
<div class="t" style="top:856.76px;font-size:17.3px;line-height:17.3px;font-style:italic;color:#1a1a1a;letter-spacing:0.6px;right:762.4px;"><span style="margin-right:1.3px">(</span>98%<span style="margin-left:1.3px">)</span></div>
<div class="t" style="top:856.76px;font-size:17.3px;line-height:17.3px;font-style:italic;color:#1a1a1a;letter-spacing:0.6px;right:624.4px;"><span style="margin-right:1.3px">(</span>87%<span style="margin-left:1.3px">)</span></div>
<div class="t" style="top:856.76px;font-size:17.3px;line-height:17.3px;font-style:italic;color:#1a1a1a;letter-spacing:0.6px;right:486.4px;"><span style="margin-right:1.3px">(</span>77%<span style="margin-left:1.3px">)</span></div>
<div class="t" style="top:856.76px;font-size:17.3px;line-height:17.3px;font-style:italic;color:#1a1a1a;letter-spacing:0.6px;right:348.4px;"><span style="margin-right:1.3px">(</span>73%<span style="margin-left:1.3px">)</span></div>
<div class="t" style="top:856.76px;font-size:17.3px;line-height:17.3px;font-style:italic;color:#1a1a1a;letter-spacing:0.6px;right:210.4px;"><span style="margin-right:1.3px">(</span>69%<span style="margin-left:1.3px">)</span></div>
<div class="t" style="top:856.76px;font-size:17.3px;line-height:17.3px;font-style:italic;color:#1a1a1a;letter-spacing:0.6px;right:72.4px;"><span style="margin-right:1.3px">(</span>65%<span style="margin-left:1.3px">)</span></div>
<div class="t" style="top:880.01px;font-size:17px;line-height:17px;color:#1a1a1a;letter-spacing:-0.05px;left:74.8px;">Depreciation &amp; Amortization</div>
<div class="t" style="top:879.76px;font-size:17.3px;line-height:17.3px;color:#1a1a1a;letter-spacing:0.25px;right:2239.75px;"><span style="margin-right:1.3px">(</span>8<span style="margin-left:1.3px">)</span></div>
<div class="t" style="top:879.76px;font-size:17.3px;line-height:17.3px;color:#1a1a1a;letter-spacing:0.25px;right:2119.75px;"><span style="margin-right:1.3px">(</span>10<span style="margin-left:1.3px">)</span></div>
<div class="t" style="top:879.76px;font-size:17.3px;line-height:17.3px;color:#1a1a1a;letter-spacing:0.25px;right:1999.75px;"><span style="margin-right:1.3px">(</span>10<span style="margin-left:1.3px">)</span></div>
<div class="t" style="top:879.76px;font-size:17.3px;line-height:17.3px;color:#1a1a1a;letter-spacing:0.25px;right:1879.75px;"><span style="margin-right:1.3px">(</span>10<span style="margin-left:1.3px">)</span></div>
<div class="t" style="top:879.76px;font-size:17.3px;line-height:17.3px;color:#1a1a1a;letter-spacing:0.25px;right:1759.75px;"><span style="margin-right:1.3px">(</span>10<span style="margin-left:1.3px">)</span></div>
<div class="t" style="top:879.76px;font-size:17.3px;line-height:17.3px;color:#1a1a1a;letter-spacing:0.25px;right:1590.75px;"><span style="margin-right:1.3px">(</span>0<span style="margin-left:1.3px">)</span></div>
<div class="t" style="top:879.76px;font-size:17.3px;line-height:17.3px;color:#1a1a1a;letter-spacing:0.25px;right:1452.75px;"><span style="margin-right:1.3px">(</span>0<span style="margin-left:1.3px">)</span></div>
<div class="t" style="top:879.76px;font-size:17.3px;line-height:17.3px;color:#1a1a1a;letter-spacing:0.25px;right:1314.75px;"><span style="margin-right:1.3px">(</span>1<span style="margin-left:1.3px">)</span></div>
<div class="t" style="top:879.76px;font-size:17.3px;line-height:17.3px;color:#1a1a1a;letter-spacing:0.25px;right:1176.75px;"><span style="margin-right:1.3px">(</span>1<span style="margin-left:1.3px">)</span></div>
<div class="t" style="top:879.76px;font-size:17.3px;line-height:17.3px;color:#1a1a1a;letter-spacing:0.25px;right:1038.75px;"><span style="margin-right:1.3px">(</span>1<span style="margin-left:1.3px">)</span></div>
<div class="t" style="top:879.76px;font-size:17.3px;line-height:17.3px;color:#1a1a1a;letter-spacing:0.25px;right:900.75px;"><span style="margin-right:1.3px">(</span>1<span style="margin-left:1.3px">)</span></div>
<div class="t" style="top:879.76px;font-size:17.3px;line-height:17.3px;color:#1a1a1a;letter-spacing:0.25px;right:762.75px;"><span style="margin-right:1.3px">(</span>1<span style="margin-left:1.3px">)</span></div>
<div class="t" style="top:879.76px;font-size:17.3px;line-height:17.3px;color:#1a1a1a;letter-spacing:0.25px;right:624.75px;"><span style="margin-right:1.3px">(</span>1<span style="margin-left:1.3px">)</span></div>
<div class="t" style="top:879.76px;font-size:17.3px;line-height:17.3px;color:#1a1a1a;letter-spacing:0.25px;right:486.75px;"><span style="margin-right:1.3px">(</span>1<span style="margin-left:1.3px">)</span></div>
<div class="t" style="top:879.76px;font-size:17.3px;line-height:17.3px;color:#1a1a1a;letter-spacing:0.25px;right:348.75px;"><span style="margin-right:1.3px">(</span>1<span style="margin-left:1.3px">)</span></div>
<div class="t" style="top:879.76px;font-size:17.3px;line-height:17.3px;color:#1a1a1a;letter-spacing:0.25px;right:210.75px;"><span style="margin-right:1.3px">(</span>1<span style="margin-left:1.3px">)</span></div>
<div class="t" style="top:879.76px;font-size:17.3px;line-height:17.3px;color:#1a1a1a;letter-spacing:0.25px;right:72.75px;"><span style="margin-right:1.3px">(</span>1<span style="margin-left:1.3px">)</span></div>
<div class="t" style="top:903.01px;font-size:17px;line-height:17px;color:#1a1a1a;letter-spacing:-0.05px;left:74.8px;">EBIT</div>
<div class="t" style="top:902.76px;font-size:17.3px;line-height:17.3px;color:#1a1a1a;letter-spacing:0.25px;right:2239.75px;"><span style="margin-right:1.3px">(</span>466<span style="margin-left:1.3px">)</span></div>
<div class="t" style="top:902.76px;font-size:17.3px;line-height:17.3px;color:#1a1a1a;letter-spacing:0.25px;right:2119.75px;"><span style="margin-right:1.3px">(</span>190<span style="margin-left:1.3px">)</span></div>
<div class="t" style="top:902.76px;font-size:17.3px;line-height:17.3px;color:#1a1a1a;letter-spacing:0.25px;right:2007.75px;">720</div>
<div class="t" style="top:902.76px;font-size:17.3px;line-height:17.3px;color:#1a1a1a;letter-spacing:0.25px;right:1887.75px;">2,482</div>
<div class="t" style="top:902.76px;font-size:17.3px;line-height:17.3px;color:#1a1a1a;letter-spacing:0.25px;right:1767.75px;">5,305</div>
<div class="t" style="top:902.76px;font-size:17.3px;line-height:17.3px;color:#1a1a1a;letter-spacing:0.25px;right:1590.75px;"><span style="margin-right:1.3px">(</span>52<span style="margin-left:1.3px">)</span></div>
<div class="t" style="top:902.76px;font-size:17.3px;line-height:17.3px;color:#1a1a1a;letter-spacing:0.25px;right:1452.75px;"><span style="margin-right:1.3px">(</span>49<span style="margin-left:1.3px">)</span></div>
<div class="t" style="top:902.76px;font-size:17.3px;line-height:17.3px;color:#1a1a1a;letter-spacing:0.25px;right:1314.75px;"><span style="margin-right:1.3px">(</span>47<span style="margin-left:1.3px">)</span></div>
<div class="t" style="top:902.76px;font-size:17.3px;line-height:17.3px;color:#1a1a1a;letter-spacing:0.25px;right:1176.75px;"><span style="margin-right:1.3px">(</span>44<span style="margin-left:1.3px">)</span></div>
<div class="t" style="top:902.76px;font-size:17.3px;line-height:17.3px;color:#1a1a1a;letter-spacing:0.25px;right:1038.75px;"><span style="margin-right:1.3px">(</span>41<span style="margin-left:1.3px">)</span></div>
<div class="t" style="top:902.76px;font-size:17.3px;line-height:17.3px;color:#1a1a1a;letter-spacing:0.25px;right:900.75px;"><span style="margin-right:1.3px">(</span>38<span style="margin-left:1.3px">)</span></div>
<div class="t" style="top:902.76px;font-size:17.3px;line-height:17.3px;color:#1a1a1a;letter-spacing:0.25px;right:762.75px;"><span style="margin-right:1.3px">(</span>36<span style="margin-left:1.3px">)</span></div>
<div class="t" style="top:902.76px;font-size:17.3px;line-height:17.3px;color:#1a1a1a;letter-spacing:0.25px;right:624.75px;"><span style="margin-right:1.3px">(</span>34<span style="margin-left:1.3px">)</span></div>
<div class="t" style="top:902.76px;font-size:17.3px;line-height:17.3px;color:#1a1a1a;letter-spacing:0.25px;right:486.75px;"><span style="margin-right:1.3px">(</span>32<span style="margin-left:1.3px">)</span></div>
<div class="t" style="top:902.76px;font-size:17.3px;line-height:17.3px;color:#1a1a1a;letter-spacing:0.25px;right:348.75px;"><span style="margin-right:1.3px">(</span>31<span style="margin-left:1.3px">)</span></div>
<div class="t" style="top:902.76px;font-size:17.3px;line-height:17.3px;color:#1a1a1a;letter-spacing:0.25px;right:210.75px;"><span style="margin-right:1.3px">(</span>30<span style="margin-left:1.3px">)</span></div>
<div class="t" style="top:902.76px;font-size:17.3px;line-height:17.3px;color:#1a1a1a;letter-spacing:0.25px;right:72.75px;"><span style="margin-right:1.3px">(</span>30<span style="margin-left:1.3px">)</span></div>
<div class="t" style="top:926.01px;font-size:17px;line-height:17px;color:#1a1a1a;letter-spacing:-0.05px;left:74.8px;">Net Interest Expense</div>
<div class="t" style="top:925.76px;font-size:17.3px;line-height:17.3px;color:#1a1a1a;letter-spacing:0.25px;right:2239.75px;"><span style="margin-right:1.3px">(</span>18<span style="margin-left:1.3px">)</span></div>
<div class="t" style="top:925.76px;font-size:17.3px;line-height:17.3px;color:#1a1a1a;letter-spacing:0.25px;right:2119.75px;"><span style="margin-right:1.3px">(</span>17<span style="margin-left:1.3px">)</span></div>
<div class="t" style="top:925.76px;font-size:17.3px;line-height:17.3px;color:#1a1a1a;letter-spacing:0.25px;right:1999.75px;"><span style="margin-right:1.3px">(</span>14<span style="margin-left:1.3px">)</span></div>
<div class="t" style="top:925.76px;font-size:17.3px;line-height:17.3px;color:#1a1a1a;letter-spacing:0.25px;right:1879.75px;"><span style="margin-right:1.3px">(</span>11<span style="margin-left:1.3px">)</span></div>
<div class="t" style="top:925.76px;font-size:17.3px;line-height:17.3px;color:#1a1a1a;letter-spacing:0.25px;right:1759.75px;"><span style="margin-right:1.3px">(</span>7<span style="margin-left:1.3px">)</span></div>
<div class="t" style="top:925.76px;font-size:17.3px;line-height:17.3px;color:#1a1a1a;letter-spacing:0.25px;right:1590.75px;"><span style="margin-right:1.3px">(</span>1<span style="margin-left:1.3px">)</span></div>
<div class="t" style="top:925.76px;font-size:17.3px;line-height:17.3px;color:#1a1a1a;letter-spacing:0.25px;right:1452.75px;"><span style="margin-right:1.3px">(</span>1<span style="margin-left:1.3px">)</span></div>
<div class="t" style="top:925.76px;font-size:17.3px;line-height:17.3px;color:#1a1a1a;letter-spacing:0.25px;right:1314.75px;"><span style="margin-right:1.3px">(</span>2<span style="margin-left:1.3px">)</span></div>
<div class="t" style="top:925.76px;font-size:17.3px;line-height:17.3px;color:#1a1a1a;letter-spacing:0.25px;right:1176.75px;"><span style="margin-right:1.3px">(</span>2<span style="margin-left:1.3px">)</span></div>
<div class="t" style="top:925.76px;font-size:17.3px;line-height:17.3px;color:#1a1a1a;letter-spacing:0.25px;right:1038.75px;"><span style="margin-right:1.3px">(</span>2<span style="margin-left:1.3px">)</span></div>
<div class="t" style="top:925.76px;font-size:17.3px;line-height:17.3px;color:#1a1a1a;letter-spacing:0.25px;right:900.75px;"><span style="margin-right:1.3px">(</span>2<span style="margin-left:1.3px">)</span></div>
<div class="t" style="top:925.76px;font-size:17.3px;line-height:17.3px;color:#1a1a1a;letter-spacing:0.25px;right:762.75px;"><span style="margin-right:1.3px">(</span>2<span style="margin-left:1.3px">)</span></div>
<div class="t" style="top:925.76px;font-size:17.3px;line-height:17.3px;color:#1a1a1a;letter-spacing:0.25px;right:624.75px;"><span style="margin-right:1.3px">(</span>2<span style="margin-left:1.3px">)</span></div>
<div class="t" style="top:925.76px;font-size:17.3px;line-height:17.3px;color:#1a1a1a;letter-spacing:0.25px;right:486.75px;"><span style="margin-right:1.3px">(</span>2<span style="margin-left:1.3px">)</span></div>
<div class="t" style="top:925.76px;font-size:17.3px;line-height:17.3px;color:#1a1a1a;letter-spacing:0.25px;right:348.75px;"><span style="margin-right:1.3px">(</span>2<span style="margin-left:1.3px">)</span></div>
<div class="t" style="top:925.76px;font-size:17.3px;line-height:17.3px;color:#1a1a1a;letter-spacing:0.25px;right:210.75px;"><span style="margin-right:1.3px">(</span>2<span style="margin-left:1.3px">)</span></div>
<div class="t" style="top:925.76px;font-size:17.3px;line-height:17.3px;color:#1a1a1a;letter-spacing:0.25px;right:72.75px;"><span style="margin-right:1.3px">(</span>2<span style="margin-left:1.3px">)</span></div>
<div class="t" style="top:949.01px;font-size:17px;line-height:17px;color:#1a1a1a;letter-spacing:-0.05px;left:74.8px;">Net Profit Before Tax</div>
<div class="t" style="top:948.76px;font-size:17.3px;line-height:17.3px;color:#1a1a1a;letter-spacing:0.25px;right:2239.75px;"><span style="margin-right:1.3px">(</span>484<span style="margin-left:1.3px">)</span></div>
<div class="t" style="top:948.76px;font-size:17.3px;line-height:17.3px;color:#1a1a1a;letter-spacing:0.25px;right:2119.75px;"><span style="margin-right:1.3px">(</span>208<span style="margin-left:1.3px">)</span></div>
<div class="t" style="top:948.76px;font-size:17.3px;line-height:17.3px;color:#1a1a1a;letter-spacing:0.25px;right:2007.75px;">706</div>
<div class="t" style="top:948.76px;font-size:17.3px;line-height:17.3px;color:#1a1a1a;letter-spacing:0.25px;right:1887.75px;">2,472</div>
<div class="t" style="top:948.76px;font-size:17.3px;line-height:17.3px;color:#1a1a1a;letter-spacing:0.25px;right:1767.75px;">5,298</div>
<div class="t" style="top:948.76px;font-size:17.3px;line-height:17.3px;color:#1a1a1a;letter-spacing:0.25px;right:1590.75px;"><span style="margin-right:1.3px">(</span>53<span style="margin-left:1.3px">)</span></div>
<div class="t" style="top:948.76px;font-size:17.3px;line-height:17.3px;color:#1a1a1a;letter-spacing:0.25px;right:1452.75px;"><span style="margin-right:1.3px">(</span>50<span style="margin-left:1.3px">)</span></div>
<div class="t" style="top:948.76px;font-size:17.3px;line-height:17.3px;color:#1a1a1a;letter-spacing:0.25px;right:1314.75px;"><span style="margin-right:1.3px">(</span>48<span style="margin-left:1.3px">)</span></div>
<div class="t" style="top:948.76px;font-size:17.3px;line-height:17.3px;color:#1a1a1a;letter-spacing:0.25px;right:1176.75px;"><span style="margin-right:1.3px">(</span>46<span style="margin-left:1.3px">)</span></div>
<div class="t" style="top:948.76px;font-size:17.3px;line-height:17.3px;color:#1a1a1a;letter-spacing:0.25px;right:1038.75px;"><span style="margin-right:1.3px">(</span>43<span style="margin-left:1.3px">)</span></div>
<div class="t" style="top:948.76px;font-size:17.3px;line-height:17.3px;color:#1a1a1a;letter-spacing:0.25px;right:900.75px;"><span style="margin-right:1.3px">(</span>40<span style="margin-left:1.3px">)</span></div>
<div class="t" style="top:948.76px;font-size:17.3px;line-height:17.3px;color:#1a1a1a;letter-spacing:0.25px;right:762.75px;"><span style="margin-right:1.3px">(</span>38<span style="margin-left:1.3px">)</span></div>
<div class="t" style="top:948.76px;font-size:17.3px;line-height:17.3px;color:#1a1a1a;letter-spacing:0.25px;right:624.75px;"><span style="margin-right:1.3px">(</span>36<span style="margin-left:1.3px">)</span></div>
<div class="t" style="top:948.76px;font-size:17.3px;line-height:17.3px;color:#1a1a1a;letter-spacing:0.25px;right:486.75px;"><span style="margin-right:1.3px">(</span>34<span style="margin-left:1.3px">)</span></div>
<div class="t" style="top:948.76px;font-size:17.3px;line-height:17.3px;color:#1a1a1a;letter-spacing:0.25px;right:348.75px;"><span style="margin-right:1.3px">(</span>33<span style="margin-left:1.3px">)</span></div>
<div class="t" style="top:948.76px;font-size:17.3px;line-height:17.3px;color:#1a1a1a;letter-spacing:0.25px;right:210.75px;"><span style="margin-right:1.3px">(</span>32<span style="margin-left:1.3px">)</span></div>
<div class="t" style="top:948.76px;font-size:17.3px;line-height:17.3px;color:#1a1a1a;letter-spacing:0.25px;right:72.75px;"><span style="margin-right:1.3px">(</span>31<span style="margin-left:1.3px">)</span></div>
<div class="t" style="top:972.01px;font-size:17px;line-height:17px;color:#1a1a1a;letter-spacing:-0.05px;left:74.8px;">Tax Expense</div>
<div class="t" style="top:971.76px;font-size:17.3px;line-height:17.3px;color:#1a1a1a;right:2247.5px;">-</div>
<div class="t" style="top:971.76px;font-size:17.3px;line-height:17.3px;color:#1a1a1a;right:2127.5px;">-</div>
<div class="t" style="top:971.76px;font-size:17.3px;line-height:17.3px;color:#1a1a1a;letter-spacing:0.25px;right:1999.75px;"><span style="margin-right:1.3px">(</span>177<span style="margin-left:1.3px">)</span></div>
<div class="t" style="top:971.76px;font-size:17.3px;line-height:17.3px;color:#1a1a1a;letter-spacing:0.25px;right:1879.75px;"><span style="margin-right:1.3px">(</span>618<span style="margin-left:1.3px">)</span></div>
<div class="t" style="top:971.76px;font-size:17.3px;line-height:17.3px;color:#1a1a1a;letter-spacing:0.25px;right:1759.75px;"><span style="margin-right:1.3px">(</span>1,324<span style="margin-left:1.3px">)</span></div>
<div class="t" style="top:971.76px;font-size:17.3px;line-height:17.3px;color:#1a1a1a;right:1598.5px;">-</div>
<div class="t" style="top:971.76px;font-size:17.3px;line-height:17.3px;color:#1a1a1a;right:1460.5px;">-</div>
<div class="t" style="top:971.76px;font-size:17.3px;line-height:17.3px;color:#1a1a1a;right:1322.5px;">-</div>
<div class="t" style="top:971.76px;font-size:17.3px;line-height:17.3px;color:#1a1a1a;right:1184.5px;">-</div>
<div class="t" style="top:971.76px;font-size:17.3px;line-height:17.3px;color:#1a1a1a;right:1046.5px;">-</div>
<div class="t" style="top:971.76px;font-size:17.3px;line-height:17.3px;color:#1a1a1a;right:908.5px;">-</div>
<div class="t" style="top:971.76px;font-size:17.3px;line-height:17.3px;color:#1a1a1a;right:770.5px;">-</div>
<div class="t" style="top:971.76px;font-size:17.3px;line-height:17.3px;color:#1a1a1a;right:632.5px;">-</div>
<div class="t" style="top:971.76px;font-size:17.3px;line-height:17.3px;color:#1a1a1a;right:494.5px;">-</div>
<div class="t" style="top:971.76px;font-size:17.3px;line-height:17.3px;color:#1a1a1a;right:356.5px;">-</div>
<div class="t" style="top:971.76px;font-size:17.3px;line-height:17.3px;color:#1a1a1a;right:218.5px;">-</div>
<div class="t" style="top:971.76px;font-size:17.3px;line-height:17.3px;color:#1a1a1a;right:80.5px;">-</div>
<div class="r" style="left:71px;top:991px;width:1074px;height:27px;background:#4cb2e6;"></div>
<div class="r" style="left:1176px;top:991px;width:1656px;height:27px;background:#4cb2e6;"></div>
<div class="t" style="top:994.32px;font-size:21.6px;line-height:21.6px;font-weight:700;color:#ffffff;letter-spacing:0.15px;left:86.5px;-webkit-text-stroke:0.45px #ffffff;">Net Profit After Tax</div>
<div class="t" style="top:996.32px;font-size:19px;line-height:19px;font-weight:700;color:#ffffff;-webkit-text-stroke:0.3px #ffffff;letter-spacing:0.3px;right:2239.7px;"><span style="margin-right:0.6px">(</span>484<span style="margin-left:0.6px">)</span></div>
<div class="t" style="top:996.32px;font-size:19px;line-height:19px;font-weight:700;color:#ffffff;-webkit-text-stroke:0.3px #ffffff;letter-spacing:0.3px;right:2119.7px;"><span style="margin-right:0.6px">(</span>208<span style="margin-left:0.6px">)</span></div>
<div class="t" style="top:996.32px;font-size:19px;line-height:19px;font-weight:700;color:#ffffff;-webkit-text-stroke:0.3px #ffffff;letter-spacing:0.3px;right:2007.7px;">530</div>
<div class="t" style="top:996.32px;font-size:19px;line-height:19px;font-weight:700;color:#ffffff;-webkit-text-stroke:0.3px #ffffff;letter-spacing:0.3px;right:1887.7px;">1,854</div>
<div class="t" style="top:996.32px;font-size:19px;line-height:19px;font-weight:700;color:#ffffff;-webkit-text-stroke:0.3px #ffffff;letter-spacing:0.3px;right:1767.7px;">3,973</div>
<div class="t" style="top:996.32px;font-size:19px;line-height:19px;font-weight:700;color:#ffffff;-webkit-text-stroke:0.3px #ffffff;letter-spacing:0.3px;right:1590.7px;"><span style="margin-right:0.6px">(</span>53<span style="margin-left:0.6px">)</span></div>
<div class="t" style="top:996.32px;font-size:19px;line-height:19px;font-weight:700;color:#ffffff;-webkit-text-stroke:0.3px #ffffff;letter-spacing:0.3px;right:1452.7px;"><span style="margin-right:0.6px">(</span>50<span style="margin-left:0.6px">)</span></div>
<div class="t" style="top:996.32px;font-size:19px;line-height:19px;font-weight:700;color:#ffffff;-webkit-text-stroke:0.3px #ffffff;letter-spacing:0.3px;right:1314.7px;"><span style="margin-right:0.6px">(</span>48<span style="margin-left:0.6px">)</span></div>
<div class="t" style="top:996.32px;font-size:19px;line-height:19px;font-weight:700;color:#ffffff;-webkit-text-stroke:0.3px #ffffff;letter-spacing:0.3px;right:1176.7px;"><span style="margin-right:0.6px">(</span>46<span style="margin-left:0.6px">)</span></div>
<div class="t" style="top:996.32px;font-size:19px;line-height:19px;font-weight:700;color:#ffffff;-webkit-text-stroke:0.3px #ffffff;letter-spacing:0.3px;right:1038.7px;"><span style="margin-right:0.6px">(</span>43<span style="margin-left:0.6px">)</span></div>
<div class="t" style="top:996.32px;font-size:19px;line-height:19px;font-weight:700;color:#ffffff;-webkit-text-stroke:0.3px #ffffff;letter-spacing:0.3px;right:900.7px;"><span style="margin-right:0.6px">(</span>40<span style="margin-left:0.6px">)</span></div>
<div class="t" style="top:996.32px;font-size:19px;line-height:19px;font-weight:700;color:#ffffff;-webkit-text-stroke:0.3px #ffffff;letter-spacing:0.3px;right:762.7px;"><span style="margin-right:0.6px">(</span>38<span style="margin-left:0.6px">)</span></div>
<div class="t" style="top:996.32px;font-size:19px;line-height:19px;font-weight:700;color:#ffffff;-webkit-text-stroke:0.3px #ffffff;letter-spacing:0.3px;right:624.7px;"><span style="margin-right:0.6px">(</span>36<span style="margin-left:0.6px">)</span></div>
<div class="t" style="top:996.32px;font-size:19px;line-height:19px;font-weight:700;color:#ffffff;-webkit-text-stroke:0.3px #ffffff;letter-spacing:0.3px;right:486.7px;"><span style="margin-right:0.6px">(</span>34<span style="margin-left:0.6px">)</span></div>
<div class="t" style="top:996.32px;font-size:19px;line-height:19px;font-weight:700;color:#ffffff;-webkit-text-stroke:0.3px #ffffff;letter-spacing:0.3px;right:348.7px;"><span style="margin-right:0.6px">(</span>33<span style="margin-left:0.6px">)</span></div>
<div class="t" style="top:996.32px;font-size:19px;line-height:19px;font-weight:700;color:#ffffff;-webkit-text-stroke:0.3px #ffffff;letter-spacing:0.3px;right:210.7px;"><span style="margin-right:0.6px">(</span>32<span style="margin-left:0.6px">)</span></div>
<div class="t" style="top:996.32px;font-size:19px;line-height:19px;font-weight:700;color:#ffffff;-webkit-text-stroke:0.3px #ffffff;letter-spacing:0.3px;right:72.7px;"><span style="margin-right:0.6px">(</span>31<span style="margin-left:0.6px">)</span></div>
<div class="t" style="top:1020.76px;font-size:17.3px;line-height:17.3px;font-style:italic;color:#1a1a1a;letter-spacing:0.5px;left:93.8px;">Net Profit After Tax %</div>
<div class="t" style="top:1020.76px;font-size:17.3px;line-height:17.3px;font-style:italic;color:#1a1a1a;letter-spacing:0.6px;right:2239.4px;"><span style="margin-right:1.3px">(</span>123%<span style="margin-left:1.3px">)</span></div>
<div class="t" style="top:1020.76px;font-size:17.3px;line-height:17.3px;font-style:italic;color:#1a1a1a;letter-spacing:0.6px;right:2119.4px;"><span style="margin-right:1.3px">(</span>16%<span style="margin-left:1.3px">)</span></div>
<div class="t" style="top:1020.76px;font-size:17.3px;line-height:17.3px;font-style:italic;color:#1a1a1a;letter-spacing:0.6px;right:2008.4px;">18%</div>
<div class="t" style="top:1020.76px;font-size:17.3px;line-height:17.3px;font-style:italic;color:#1a1a1a;letter-spacing:0.6px;right:1888.4px;">31%</div>
<div class="t" style="top:1020.76px;font-size:17.3px;line-height:17.3px;font-style:italic;color:#1a1a1a;letter-spacing:0.6px;right:1768.4px;">40%</div>
<div class="t" style="top:1020.76px;font-size:17.3px;line-height:17.3px;font-style:italic;color:#1a1a1a;letter-spacing:0.6px;right:1590.4px;"><span style="margin-right:1.3px">(</span>330%<span style="margin-left:1.3px">)</span></div>
<div class="t" style="top:1020.76px;font-size:17.3px;line-height:17.3px;font-style:italic;color:#1a1a1a;letter-spacing:0.6px;right:1452.4px;"><span style="margin-right:1.3px">(</span>257%<span style="margin-left:1.3px">)</span></div>
<div class="t" style="top:1020.76px;font-size:17.3px;line-height:17.3px;font-style:italic;color:#1a1a1a;letter-spacing:0.6px;right:1314.4px;"><span style="margin-right:1.3px">(</span>210%<span style="margin-left:1.3px">)</span></div>
<div class="t" style="top:1020.76px;font-size:17.3px;line-height:17.3px;font-style:italic;color:#1a1a1a;letter-spacing:0.6px;right:1176.4px;"><span style="margin-right:1.3px">(</span>171%<span style="margin-left:1.3px">)</span></div>
<div class="t" style="top:1020.76px;font-size:17.3px;line-height:17.3px;font-style:italic;color:#1a1a1a;letter-spacing:0.6px;right:1038.4px;"><span style="margin-right:1.3px">(</span>142%<span style="margin-left:1.3px">)</span></div>
<div class="t" style="top:1020.76px;font-size:17.3px;line-height:17.3px;font-style:italic;color:#1a1a1a;letter-spacing:0.6px;right:900.4px;"><span style="margin-right:1.3px">(</span>119%<span style="margin-left:1.3px">)</span></div>
<div class="t" style="top:1020.76px;font-size:17.3px;line-height:17.3px;font-style:italic;color:#1a1a1a;letter-spacing:0.6px;right:762.4px;"><span style="margin-right:1.3px">(</span>105%<span style="margin-left:1.3px">)</span></div>
<div class="t" style="top:1020.76px;font-size:17.3px;line-height:17.3px;font-style:italic;color:#1a1a1a;letter-spacing:0.6px;right:624.4px;"><span style="margin-right:1.3px">(</span>93%<span style="margin-left:1.3px">)</span></div>
<div class="t" style="top:1020.76px;font-size:17.3px;line-height:17.3px;font-style:italic;color:#1a1a1a;letter-spacing:0.6px;right:486.4px;"><span style="margin-right:1.3px">(</span>83%<span style="margin-left:1.3px">)</span></div>
<div class="t" style="top:1020.76px;font-size:17.3px;line-height:17.3px;font-style:italic;color:#1a1a1a;letter-spacing:0.6px;right:348.4px;"><span style="margin-right:1.3px">(</span>78%<span style="margin-left:1.3px">)</span></div>
<div class="t" style="top:1020.76px;font-size:17.3px;line-height:17.3px;font-style:italic;color:#1a1a1a;letter-spacing:0.6px;right:210.4px;"><span style="margin-right:1.3px">(</span>74%<span style="margin-left:1.3px">)</span></div>
<div class="t" style="top:1020.76px;font-size:17.3px;line-height:17.3px;font-style:italic;color:#1a1a1a;letter-spacing:0.6px;right:72.4px;"><span style="margin-right:1.3px">(</span>70%<span style="margin-left:1.3px">)</span></div>
<div class="r" style="left:71px;top:1065px;width:1074px;height:34.5px;background:#4b50d2;"></div>
<div class="t" style="top:1067.03px;font-size:29.5px;line-height:29.5px;font-weight:700;color:#ffffff;letter-spacing:0.68px;left:8.84px;width:1200px;text-align:center;-webkit-text-stroke:0.7px #ffffff;">Income Statement ($&#39;000) - 5 years to December 2030</div>
<div class="r" style="left:1176px;top:1065px;width:1656px;height:34.5px;background:#4b50d2;"></div>
<div class="t" style="top:1067.03px;font-size:29.5px;line-height:29.5px;font-weight:700;color:#ffffff;letter-spacing:1.05px;left:1404.53px;width:1200px;text-align:center;-webkit-text-stroke:0.7px #ffffff;">Income Statement ($&#39;000) - 2026</div>
<div class="r" style="left:71px;top:1561px;width:1074px;height:34.5px;background:#4b50d2;"></div>
<div class="t" style="top:1563.03px;font-size:29.5px;line-height:29.5px;font-weight:700;color:#ffffff;letter-spacing:0.45px;left:8.73px;width:1200px;text-align:center;-webkit-text-stroke:0.7px #ffffff;">Balance Sheet ($&#39;000) - 5 years to December 2030</div>
<div class="r" style="left:1176px;top:1561px;width:1656px;height:34.5px;background:#4b50d2;"></div>
<div class="t" style="top:1563.03px;font-size:29.5px;line-height:29.5px;font-weight:700;color:#ffffff;letter-spacing:0.69px;left:1404.35px;width:1200px;text-align:center;-webkit-text-stroke:0.7px #ffffff;">Balance Sheet ($&#39;000) - 2026</div>
<div class="r" style="left:72px;top:1602px;width:473px;height:21px;background:#6c71e5;"></div>
<div class="t" style="top:1603.17px;font-size:18.7px;line-height:18.7px;font-weight:700;color:#ffffff;left:83.6px;-webkit-text-stroke:0.3px #ffffff;">Year Ending</div>
<div class="r" style="left:546px;top:1602px;width:119px;height:21px;background:#6c71e5;"></div>
<div class="t" style="top:1603.17px;font-size:18.7px;line-height:18.7px;font-weight:700;color:#ffffff;letter-spacing:0.1px;left:6px;width:1200px;text-align:center;-webkit-text-stroke:0.3px #ffffff;">2026</div>
<div class="r" style="left:666px;top:1602px;width:119px;height:21px;background:#6c71e5;"></div>
<div class="t" style="top:1603.17px;font-size:18.7px;line-height:18.7px;font-weight:700;color:#ffffff;letter-spacing:0.1px;left:126px;width:1200px;text-align:center;-webkit-text-stroke:0.3px #ffffff;">2027</div>
<div class="r" style="left:786px;top:1602px;width:119px;height:21px;background:#6c71e5;"></div>
<div class="t" style="top:1603.17px;font-size:18.7px;line-height:18.7px;font-weight:700;color:#ffffff;letter-spacing:0.1px;left:246px;width:1200px;text-align:center;-webkit-text-stroke:0.3px #ffffff;">2028</div>
<div class="r" style="left:906px;top:1602px;width:119px;height:21px;background:#6c71e5;"></div>
<div class="t" style="top:1603.17px;font-size:18.7px;line-height:18.7px;font-weight:700;color:#ffffff;letter-spacing:0.1px;left:366px;width:1200px;text-align:center;-webkit-text-stroke:0.3px #ffffff;">2029</div>
<div class="r" style="left:1026px;top:1602px;width:119px;height:21px;background:#6c71e5;"></div>
<div class="t" style="top:1603.17px;font-size:18.7px;line-height:18.7px;font-weight:700;color:#ffffff;letter-spacing:0.1px;left:486px;width:1200px;text-align:center;-webkit-text-stroke:0.3px #ffffff;">2030</div>
<div class="r" style="left:1177px;top:1602px;width:137px;height:21px;background:#6c71e5;"></div>
<div class="t" style="top:1603.17px;font-size:18.7px;line-height:18.7px;font-weight:700;color:#ffffff;letter-spacing:0.1px;left:646px;width:1200px;text-align:center;-webkit-text-stroke:0.3px #ffffff;">Jan</div>
<div class="r" style="left:1315px;top:1602px;width:137px;height:21px;background:#6c71e5;"></div>
<div class="t" style="top:1603.17px;font-size:18.7px;line-height:18.7px;font-weight:700;color:#ffffff;letter-spacing:0.1px;left:784px;width:1200px;text-align:center;-webkit-text-stroke:0.3px #ffffff;">Feb</div>
<div class="r" style="left:1453px;top:1602px;width:137px;height:21px;background:#6c71e5;"></div>
<div class="t" style="top:1603.17px;font-size:18.7px;line-height:18.7px;font-weight:700;color:#ffffff;letter-spacing:0.1px;left:922px;width:1200px;text-align:center;-webkit-text-stroke:0.3px #ffffff;">Mar</div>
<div class="r" style="left:1591px;top:1602px;width:137px;height:21px;background:#6c71e5;"></div>
<div class="t" style="top:1603.17px;font-size:18.7px;line-height:18.7px;font-weight:700;color:#ffffff;letter-spacing:0.1px;left:1060px;width:1200px;text-align:center;-webkit-text-stroke:0.3px #ffffff;">Apr</div>
<div class="r" style="left:1729px;top:1602px;width:137px;height:21px;background:#6c71e5;"></div>
<div class="t" style="top:1603.17px;font-size:18.7px;line-height:18.7px;font-weight:700;color:#ffffff;letter-spacing:0.1px;left:1198px;width:1200px;text-align:center;-webkit-text-stroke:0.3px #ffffff;">May</div>
<div class="r" style="left:1867px;top:1602px;width:137px;height:21px;background:#6c71e5;"></div>
<div class="t" style="top:1603.17px;font-size:18.7px;line-height:18.7px;font-weight:700;color:#ffffff;letter-spacing:0.1px;left:1336px;width:1200px;text-align:center;-webkit-text-stroke:0.3px #ffffff;">Jun</div>
<div class="r" style="left:2005px;top:1602px;width:137px;height:21px;background:#6c71e5;"></div>
<div class="t" style="top:1603.17px;font-size:18.7px;line-height:18.7px;font-weight:700;color:#ffffff;letter-spacing:0.1px;left:1474px;width:1200px;text-align:center;-webkit-text-stroke:0.3px #ffffff;">Jul</div>
<div class="r" style="left:2143px;top:1602px;width:137px;height:21px;background:#6c71e5;"></div>
<div class="t" style="top:1603.17px;font-size:18.7px;line-height:18.7px;font-weight:700;color:#ffffff;letter-spacing:0.1px;left:1612px;width:1200px;text-align:center;-webkit-text-stroke:0.3px #ffffff;">Aug</div>
<div class="r" style="left:2281px;top:1602px;width:137px;height:21px;background:#6c71e5;"></div>
<div class="t" style="top:1603.17px;font-size:18.7px;line-height:18.7px;font-weight:700;color:#ffffff;letter-spacing:0.1px;left:1750px;width:1200px;text-align:center;-webkit-text-stroke:0.3px #ffffff;">Sep</div>
<div class="r" style="left:2419px;top:1602px;width:137px;height:21px;background:#6c71e5;"></div>
<div class="t" style="top:1603.17px;font-size:18.7px;line-height:18.7px;font-weight:700;color:#ffffff;letter-spacing:0.1px;left:1888px;width:1200px;text-align:center;-webkit-text-stroke:0.3px #ffffff;">Oct</div>
<div class="r" style="left:2557px;top:1602px;width:137px;height:21px;background:#6c71e5;"></div>
<div class="t" style="top:1603.17px;font-size:18.7px;line-height:18.7px;font-weight:700;color:#ffffff;letter-spacing:0.1px;left:2026px;width:1200px;text-align:center;-webkit-text-stroke:0.3px #ffffff;">Nov</div>
<div class="r" style="left:2695px;top:1602px;width:137px;height:21px;background:#6c71e5;"></div>
<div class="t" style="top:1603.17px;font-size:18.7px;line-height:18.7px;font-weight:700;color:#ffffff;letter-spacing:0.1px;left:2164px;width:1200px;text-align:center;-webkit-text-stroke:0.3px #ffffff;">Dec</div>
<div class="t" style="top:1632.01px;font-size:17px;line-height:17px;color:#1a1a1a;letter-spacing:-0.05px;left:74.8px;">Current Assets</div>
<div class="t" style="top:1631.76px;font-size:17.3px;line-height:17.3px;color:#1a1a1a;letter-spacing:0.25px;right:2247.75px;">448</div>
<div class="t" style="top:1631.76px;font-size:17.3px;line-height:17.3px;color:#1a1a1a;letter-spacing:0.25px;right:2127.75px;">228</div>
<div class="t" style="top:1631.76px;font-size:17.3px;line-height:17.3px;color:#1a1a1a;letter-spacing:0.25px;right:2007.75px;">755</div>
<div class="t" style="top:1631.76px;font-size:17.3px;line-height:17.3px;color:#1a1a1a;letter-spacing:0.25px;right:1887.75px;">2,615</div>
<div class="t" style="top:1631.76px;font-size:17.3px;line-height:17.3px;color:#1a1a1a;letter-spacing:0.25px;right:1767.75px;">6,601</div>
<div class="t" style="top:1631.76px;font-size:17.3px;line-height:17.3px;color:#1a1a1a;letter-spacing:0.25px;right:1598.75px;">863</div>
<div class="t" style="top:1631.76px;font-size:17.3px;line-height:17.3px;color:#1a1a1a;letter-spacing:0.25px;right:1460.75px;">793</div>
<div class="t" style="top:1631.76px;font-size:17.3px;line-height:17.3px;color:#1a1a1a;letter-spacing:0.25px;right:1322.75px;">817</div>
<div class="t" style="top:1631.76px;font-size:17.3px;line-height:17.3px;color:#1a1a1a;letter-spacing:0.25px;right:1184.75px;">757</div>
<div class="t" style="top:1631.76px;font-size:17.3px;line-height:17.3px;color:#1a1a1a;letter-spacing:0.25px;right:1046.75px;">704</div>
<div class="t" style="top:1631.76px;font-size:17.3px;line-height:17.3px;color:#1a1a1a;letter-spacing:0.25px;right:908.75px;">659</div>
<div class="t" style="top:1631.76px;font-size:17.3px;line-height:17.3px;color:#1a1a1a;letter-spacing:0.25px;right:770.75px;">618</div>
<div class="t" style="top:1631.76px;font-size:17.3px;line-height:17.3px;color:#1a1a1a;letter-spacing:0.25px;right:632.75px;">581</div>
<div class="t" style="top:1631.76px;font-size:17.3px;line-height:17.3px;color:#1a1a1a;letter-spacing:0.25px;right:494.75px;">548</div>
<div class="t" style="top:1631.76px;font-size:17.3px;line-height:17.3px;color:#1a1a1a;letter-spacing:0.25px;right:356.75px;">513</div>
<div class="t" style="top:1631.76px;font-size:17.3px;line-height:17.3px;color:#1a1a1a;letter-spacing:0.25px;right:218.75px;">481</div>
<div class="t" style="top:1631.76px;font-size:17.3px;line-height:17.3px;color:#1a1a1a;letter-spacing:0.25px;right:80.75px;">448</div>
<div class="t" style="top:1655.01px;font-size:17px;line-height:17px;color:#1a1a1a;letter-spacing:-0.05px;left:74.8px;">Non-Current Assets</div>
<div class="t" style="top:1654.76px;font-size:17.3px;line-height:17.3px;color:#1a1a1a;letter-spacing:0.25px;right:2247.75px;">87</div>
<div class="t" style="top:1654.76px;font-size:17.3px;line-height:17.3px;color:#1a1a1a;letter-spacing:0.25px;right:2127.75px;">78</div>
<div class="t" style="top:1654.76px;font-size:17.3px;line-height:17.3px;color:#1a1a1a;letter-spacing:0.25px;right:2007.75px;">68</div>
<div class="t" style="top:1654.76px;font-size:17.3px;line-height:17.3px;color:#1a1a1a;letter-spacing:0.25px;right:1887.75px;">59</div>
<div class="t" style="top:1654.76px;font-size:17.3px;line-height:17.3px;color:#1a1a1a;letter-spacing:0.25px;right:1767.75px;">49</div>
<div class="t" style="top:1654.76px;font-size:17.3px;line-height:17.3px;color:#1a1a1a;letter-spacing:0.25px;right:1598.75px;">17</div>
<div class="t" style="top:1654.76px;font-size:17.3px;line-height:17.3px;color:#1a1a1a;letter-spacing:0.25px;right:1460.75px;">40</div>
<div class="t" style="top:1654.76px;font-size:17.3px;line-height:17.3px;color:#1a1a1a;letter-spacing:0.25px;right:1322.75px;">64</div>
<div class="t" style="top:1654.76px;font-size:17.3px;line-height:17.3px;color:#1a1a1a;letter-spacing:0.25px;right:1184.75px;">78</div>
<div class="t" style="top:1654.76px;font-size:17.3px;line-height:17.3px;color:#1a1a1a;letter-spacing:0.25px;right:1046.75px;">86</div>
<div class="t" style="top:1654.76px;font-size:17.3px;line-height:17.3px;color:#1a1a1a;letter-spacing:0.25px;right:908.75px;">90</div>
<div class="t" style="top:1654.76px;font-size:17.3px;line-height:17.3px;color:#1a1a1a;letter-spacing:0.25px;right:770.75px;">91</div>
<div class="t" style="top:1654.76px;font-size:17.3px;line-height:17.3px;color:#1a1a1a;letter-spacing:0.25px;right:632.75px;">90</div>
<div class="t" style="top:1654.76px;font-size:17.3px;line-height:17.3px;color:#1a1a1a;letter-spacing:0.25px;right:494.75px;">89</div>
<div class="t" style="top:1654.76px;font-size:17.3px;line-height:17.3px;color:#1a1a1a;letter-spacing:0.25px;right:356.75px;">89</div>
<div class="t" style="top:1654.76px;font-size:17.3px;line-height:17.3px;color:#1a1a1a;letter-spacing:0.25px;right:218.75px;">88</div>
<div class="t" style="top:1654.76px;font-size:17.3px;line-height:17.3px;color:#1a1a1a;letter-spacing:0.25px;right:80.75px;">87</div>
<svg class="r" style="left:0;top:0" width="2902" height="1762" viewBox="0 0 2902 1762"><line x1="71" y1="1158.5" x2="1044.5" y2="1158.5" stroke="#4ea9da" stroke-width="1"/><line x1="71" y1="1206.5" x2="1044.5" y2="1206.5" stroke="#4ea9da" stroke-width="1"/><line x1="71" y1="1254.5" x2="1044.5" y2="1254.5" stroke="#4ea9da" stroke-width="1"/><line x1="71" y1="1302.5" x2="1044.5" y2="1302.5" stroke="#4ea9da" stroke-width="1"/><line x1="71" y1="1351.5" x2="1044.5" y2="1351.5" stroke="#4ea9da" stroke-width="1"/><line x1="71" y1="1399.5" x2="1044.5" y2="1399.5" stroke="#4ea9da" stroke-width="1"/><line x1="71" y1="1447.5" x2="1044.5" y2="1447.5" stroke="#4d6a94" stroke-width="1"/><line x1="71" y1="1495.5" x2="1044.5" y2="1495.5" stroke="#4ea9da" stroke-width="1"/><line x1="71.5" y1="1158.5" x2="71.5" y2="1495.5" stroke="#4ea9da" stroke-width="1"/><line x1="265.5" y1="1158.5" x2="265.5" y2="1495.5" stroke="#4ea9da" stroke-width="1"/><line x1="460.5" y1="1158.5" x2="460.5" y2="1495.5" stroke="#4ea9da" stroke-width="1"/><line x1="655.5" y1="1158.5" x2="655.5" y2="1495.5" stroke="#4ea9da" stroke-width="1"/><line x1="849.5" y1="1158.5" x2="849.5" y2="1495.5" stroke="#4ea9da" stroke-width="1"/><line x1="1044.5" y1="1158.5" x2="1044.5" y2="1495.5" stroke="#4ea9da" stroke-width="1"/><polyline points="168.35,1437.85 363.05,1417.08 557.75,1375.09 752.45,1305.6 947.15,1205.99" fill="none" stroke="#eb7566" stroke-width="2.8" stroke-linejoin="round"/><circle cx="168.35" cy="1437.85" r="5.4" fill="#eb7566"/><circle cx="363.05" cy="1417.08" r="5.4" fill="#eb7566"/><circle cx="557.75" cy="1375.09" r="5.4" fill="#eb7566"/><circle cx="752.45" cy="1305.6" r="5.4" fill="#eb7566"/><circle cx="947.15" cy="1205.99" r="5.4" fill="#eb7566"/><polyline points="168.35,1458.38 363.05,1451.71 557.75,1429.79 752.45,1387.37 947.15,1319.42" fill="none" stroke="#5f9c40" stroke-width="2.8" stroke-linejoin="round"/><circle cx="168.35" cy="1458.38" r="5.4" fill="#5f9c40"/><circle cx="363.05" cy="1451.71" r="5.4" fill="#5f9c40"/><circle cx="557.75" cy="1429.79" r="5.4" fill="#5f9c40"/><circle cx="752.45" cy="1387.37" r="5.4" fill="#5f9c40"/><circle cx="947.15" cy="1319.42" r="5.4" fill="#5f9c40"/><polyline points="168.35,1459.01 363.05,1452.36 557.75,1434.6 752.45,1402.73 947.15,1351.72" fill="none" stroke="#4b50d4" stroke-width="2.8" stroke-linejoin="round"/><circle cx="168.35" cy="1459.01" r="5.4" fill="#4b50d4"/><circle cx="363.05" cy="1452.36" r="5.4" fill="#4b50d4"/><circle cx="557.75" cy="1434.6" r="5.4" fill="#4b50d4"/><circle cx="752.45" cy="1402.73" r="5.4" fill="#4b50d4"/><circle cx="947.15" cy="1351.72" r="5.4" fill="#4b50d4"/><line x1="330" y1="1130.5" x2="375" y2="1130.5" stroke="#eb7566" stroke-width="2.8"/><circle cx="351" cy="1130.5" r="4.3" fill="#eb7566"/><line x1="491" y1="1130.5" x2="535.5" y2="1130.5" stroke="#5f9c40" stroke-width="2.8"/><circle cx="513" cy="1130.5" r="4.3" fill="#5f9c40"/><line x1="654" y1="1130.5" x2="699.5" y2="1130.5" stroke="#4b50d4" stroke-width="2.8"/><circle cx="676.5" cy="1130.5" r="4.3" fill="#4b50d4"/></svg>
<div class="t" style="top:1510.24px;font-size:19.8px;line-height:19.8px;font-weight:700;color:#111111;letter-spacing:0.8px;left:-431.25px;width:1200px;text-align:center;-webkit-text-stroke:0.3px #111111;">2026</div>
<div class="t" style="top:1510.24px;font-size:19.8px;line-height:19.8px;font-weight:700;color:#111111;letter-spacing:0.8px;left:-236.55px;width:1200px;text-align:center;-webkit-text-stroke:0.3px #111111;">2027</div>
<div class="t" style="top:1510.24px;font-size:19.8px;line-height:19.8px;font-weight:700;color:#111111;letter-spacing:0.8px;left:-41.85px;width:1200px;text-align:center;-webkit-text-stroke:0.3px #111111;">2028</div>
<div class="t" style="top:1510.24px;font-size:19.8px;line-height:19.8px;font-weight:700;color:#111111;letter-spacing:0.8px;left:152.85px;width:1200px;text-align:center;-webkit-text-stroke:0.3px #111111;">2029</div>
<div class="t" style="top:1510.24px;font-size:19.8px;line-height:19.8px;font-weight:700;color:#111111;letter-spacing:0.8px;left:347.55px;width:1200px;text-align:center;-webkit-text-stroke:0.3px #111111;">2030</div>
<div class="t" style="top:1148.76px;font-size:19.3px;line-height:19.3px;font-weight:700;color:#111111;letter-spacing:0.8px;left:1067.5px;-webkit-text-stroke:0.3px #111111;">12,000</div>
<div class="t" style="top:1196.91px;font-size:19.3px;line-height:19.3px;font-weight:700;color:#111111;letter-spacing:0.8px;left:1067.5px;-webkit-text-stroke:0.3px #111111;">10,000</div>
<div class="t" style="top:1245.05px;font-size:19.3px;line-height:19.3px;font-weight:700;color:#111111;letter-spacing:0.8px;left:1067.5px;-webkit-text-stroke:0.3px #111111;">8,000</div>
<div class="t" style="top:1293.19px;font-size:19.3px;line-height:19.3px;font-weight:700;color:#111111;letter-spacing:0.8px;left:1067.5px;-webkit-text-stroke:0.3px #111111;">6,000</div>
<div class="t" style="top:1341.33px;font-size:19.3px;line-height:19.3px;font-weight:700;color:#111111;letter-spacing:0.8px;left:1067.5px;-webkit-text-stroke:0.3px #111111;">4,000</div>
<div class="t" style="top:1389.48px;font-size:19.3px;line-height:19.3px;font-weight:700;color:#111111;letter-spacing:0.8px;left:1067.5px;-webkit-text-stroke:0.3px #111111;">2,000</div>
<div class="t" style="top:1437.62px;font-size:19.3px;line-height:19.3px;font-weight:700;color:#111111;letter-spacing:0.8px;left:1067.5px;-webkit-text-stroke:0.3px #111111;">-</div>
<div class="t" style="top:1485.76px;font-size:19.3px;line-height:19.3px;font-weight:700;color:#111111;letter-spacing:0.8px;left:1061.5px;-webkit-text-stroke:0.3px #111111;"><span style="margin-right:1px">(</span>2,000<span style="margin-left:1px">)</span></div>
<svg class="r" style="left:0;top:0" width="2902" height="1762" viewBox="0 0 2902 1762"><line x1="1176" y1="1158.5" x2="2765.5" y2="1158.5" stroke="#4ea9da" stroke-width="1"/><line x1="1176" y1="1214.5" x2="2765.5" y2="1214.5" stroke="#4ea9da" stroke-width="1"/><line x1="1176" y1="1271.5" x2="2765.5" y2="1271.5" stroke="#4ea9da" stroke-width="1"/><line x1="1176" y1="1327.5" x2="2765.5" y2="1327.5" stroke="#4ea9da" stroke-width="1"/><line x1="1176" y1="1383.5" x2="2765.5" y2="1383.5" stroke="#4ea9da" stroke-width="1"/><line x1="1176" y1="1439.5" x2="2765.5" y2="1439.5" stroke="#4ea9da" stroke-width="1"/><line x1="1176" y1="1496.5" x2="2765.5" y2="1496.5" stroke="#4ea9da" stroke-width="1"/><line x1="1176.5" y1="1158.5" x2="1176.5" y2="1496" stroke="#4ea9da" stroke-width="1"/><line x1="1308.5" y1="1158.5" x2="1308.5" y2="1496" stroke="#4ea9da" stroke-width="1"/><line x1="1440.5" y1="1158.5" x2="1440.5" y2="1496" stroke="#4ea9da" stroke-width="1"/><line x1="1573.5" y1="1158.5" x2="1573.5" y2="1496" stroke="#4ea9da" stroke-width="1"/><line x1="1705.5" y1="1158.5" x2="1705.5" y2="1496" stroke="#4ea9da" stroke-width="1"/><line x1="1838.5" y1="1158.5" x2="1838.5" y2="1496" stroke="#4ea9da" stroke-width="1"/><line x1="1970.5" y1="1158.5" x2="1970.5" y2="1496" stroke="#4ea9da" stroke-width="1"/><line x1="2103.5" y1="1158.5" x2="2103.5" y2="1496" stroke="#4ea9da" stroke-width="1"/><line x1="2235.5" y1="1158.5" x2="2235.5" y2="1496" stroke="#4ea9da" stroke-width="1"/><line x1="2368.5" y1="1158.5" x2="2368.5" y2="1496" stroke="#4ea9da" stroke-width="1"/><line x1="2500.5" y1="1158.5" x2="2500.5" y2="1496" stroke="#4ea9da" stroke-width="1"/><line x1="2633.5" y1="1158.5" x2="2633.5" y2="1496" stroke="#4ea9da" stroke-width="1"/><line x1="2765.5" y1="1158.5" x2="2765.5" y2="1496" stroke="#4ea9da" stroke-width="1"/><polyline points="1242.23,1281.41 1374.69,1271.28 1507.15,1262.28 1639.6,1251.88 1772.06,1242.31 1904.52,1232.75 2036.98,1225.44 2169.44,1218.69 2301.9,1211.94 2434.35,1208.84 2566.81,1206.03 2699.27,1202.94" fill="none" stroke="#eb7566" stroke-width="2.8" stroke-linejoin="round"/><circle cx="1242.23" cy="1281.41" r="5.4" fill="#eb7566"/><circle cx="1374.69" cy="1271.28" r="5.4" fill="#eb7566"/><circle cx="1507.15" cy="1262.28" r="5.4" fill="#eb7566"/><circle cx="1639.6" cy="1251.88" r="5.4" fill="#eb7566"/><circle cx="1772.06" cy="1242.31" r="5.4" fill="#eb7566"/><circle cx="1904.52" cy="1232.75" r="5.4" fill="#eb7566"/><circle cx="2036.98" cy="1225.44" r="5.4" fill="#eb7566"/><circle cx="2169.44" cy="1218.69" r="5.4" fill="#eb7566"/><circle cx="2301.9" cy="1211.94" r="5.4" fill="#eb7566"/><circle cx="2434.35" cy="1208.84" r="5.4" fill="#eb7566"/><circle cx="2566.81" cy="1206.03" r="5.4" fill="#eb7566"/><circle cx="2699.27" cy="1202.94" r="5.4" fill="#eb7566"/><polyline points="1242.23,1473.5 1374.69,1465.06 1507.15,1456.62 1639.6,1448.19 1772.06,1439.75 1904.52,1434.12 2036.98,1428.5 2169.44,1422.88 2301.9,1417.25 2434.35,1414.44 2566.81,1411.62 2699.27,1408.81" fill="none" stroke="#5f9c40" stroke-width="2.8" stroke-linejoin="round"/><circle cx="1242.23" cy="1473.5" r="5.4" fill="#5f9c40"/><circle cx="1374.69" cy="1465.06" r="5.4" fill="#5f9c40"/><circle cx="1507.15" cy="1456.62" r="5.4" fill="#5f9c40"/><circle cx="1639.6" cy="1448.19" r="5.4" fill="#5f9c40"/><circle cx="1772.06" cy="1439.75" r="5.4" fill="#5f9c40"/><circle cx="1904.52" cy="1434.12" r="5.4" fill="#5f9c40"/><circle cx="2036.98" cy="1428.5" r="5.4" fill="#5f9c40"/><circle cx="2169.44" cy="1422.88" r="5.4" fill="#5f9c40"/><circle cx="2301.9" cy="1417.25" r="5.4" fill="#5f9c40"/><circle cx="2434.35" cy="1414.44" r="5.4" fill="#5f9c40"/><circle cx="2566.81" cy="1411.62" r="5.4" fill="#5f9c40"/><circle cx="2699.27" cy="1408.81" r="5.4" fill="#5f9c40"/><polyline points="1242.23,1476.31 1374.69,1467.88 1507.15,1462.25 1639.6,1456.62 1772.06,1448.19 1904.52,1439.75 2036.98,1434.12 2169.44,1428.5 2301.9,1422.88 2434.35,1420.06 2566.81,1417.25 2699.27,1414.44" fill="none" stroke="#4b50d4" stroke-width="2.8" stroke-linejoin="round"/><circle cx="1242.23" cy="1476.31" r="5.4" fill="#4b50d4"/><circle cx="1374.69" cy="1467.88" r="5.4" fill="#4b50d4"/><circle cx="1507.15" cy="1462.25" r="5.4" fill="#4b50d4"/><circle cx="1639.6" cy="1456.62" r="5.4" fill="#4b50d4"/><circle cx="1772.06" cy="1448.19" r="5.4" fill="#4b50d4"/><circle cx="1904.52" cy="1439.75" r="5.4" fill="#4b50d4"/><circle cx="2036.98" cy="1434.12" r="5.4" fill="#4b50d4"/><circle cx="2169.44" cy="1428.5" r="5.4" fill="#4b50d4"/><circle cx="2301.9" cy="1422.88" r="5.4" fill="#4b50d4"/><circle cx="2434.35" cy="1420.06" r="5.4" fill="#4b50d4"/><circle cx="2566.81" cy="1417.25" r="5.4" fill="#4b50d4"/><circle cx="2699.27" cy="1414.44" r="5.4" fill="#4b50d4"/><line x1="1726" y1="1130.5" x2="1771" y2="1130.5" stroke="#eb7566" stroke-width="2.8"/><circle cx="1748" cy="1130.5" r="4.3" fill="#eb7566"/><line x1="1886.5" y1="1130.5" x2="1931.5" y2="1130.5" stroke="#5f9c40" stroke-width="2.8"/><circle cx="1909" cy="1130.5" r="4.3" fill="#5f9c40"/><line x1="2050" y1="1130.5" x2="2095" y2="1130.5" stroke="#4b50d4" stroke-width="2.8"/><circle cx="2072.5" cy="1130.5" r="4.3" fill="#4b50d4"/></svg>
<div class="t" style="top:1510.24px;font-size:19.8px;line-height:19.8px;font-weight:700;color:#111111;letter-spacing:0.8px;left:642.63px;width:1200px;text-align:center;-webkit-text-stroke:0.3px #111111;">Jan</div>
<div class="t" style="top:1510.24px;font-size:19.8px;line-height:19.8px;font-weight:700;color:#111111;letter-spacing:0.8px;left:775.09px;width:1200px;text-align:center;-webkit-text-stroke:0.3px #111111;">Feb</div>
<div class="t" style="top:1510.24px;font-size:19.8px;line-height:19.8px;font-weight:700;color:#111111;letter-spacing:0.8px;left:907.55px;width:1200px;text-align:center;-webkit-text-stroke:0.3px #111111;">Mar</div>
<div class="t" style="top:1510.24px;font-size:19.8px;line-height:19.8px;font-weight:700;color:#111111;letter-spacing:0.8px;left:1040px;width:1200px;text-align:center;-webkit-text-stroke:0.3px #111111;">Apr</div>
<div class="t" style="top:1510.24px;font-size:19.8px;line-height:19.8px;font-weight:700;color:#111111;letter-spacing:0.8px;left:1172.46px;width:1200px;text-align:center;-webkit-text-stroke:0.3px #111111;">May</div>
<div class="t" style="top:1510.24px;font-size:19.8px;line-height:19.8px;font-weight:700;color:#111111;letter-spacing:0.8px;left:1304.92px;width:1200px;text-align:center;-webkit-text-stroke:0.3px #111111;">Jun</div>
<div class="t" style="top:1510.24px;font-size:19.8px;line-height:19.8px;font-weight:700;color:#111111;letter-spacing:0.8px;left:1437.38px;width:1200px;text-align:center;-webkit-text-stroke:0.3px #111111;">Jul</div>
<div class="t" style="top:1510.24px;font-size:19.8px;line-height:19.8px;font-weight:700;color:#111111;letter-spacing:0.8px;left:1569.84px;width:1200px;text-align:center;-webkit-text-stroke:0.3px #111111;">Aug</div>
<div class="t" style="top:1510.24px;font-size:19.8px;line-height:19.8px;font-weight:700;color:#111111;letter-spacing:0.8px;left:1702.3px;width:1200px;text-align:center;-webkit-text-stroke:0.3px #111111;">Sep</div>
<div class="t" style="top:1510.24px;font-size:19.8px;line-height:19.8px;font-weight:700;color:#111111;letter-spacing:0.8px;left:1834.75px;width:1200px;text-align:center;-webkit-text-stroke:0.3px #111111;">Oct</div>
<div class="t" style="top:1510.24px;font-size:19.8px;line-height:19.8px;font-weight:700;color:#111111;letter-spacing:0.8px;left:1967.21px;width:1200px;text-align:center;-webkit-text-stroke:0.3px #111111;">Nov</div>
<div class="t" style="top:1510.24px;font-size:19.8px;line-height:19.8px;font-weight:700;color:#111111;letter-spacing:0.8px;left:2099.67px;width:1200px;text-align:center;-webkit-text-stroke:0.3px #111111;">Dec</div>
<div class="t" style="top:1148.76px;font-size:19.3px;line-height:19.3px;font-weight:700;color:#111111;letter-spacing:0.8px;left:2786.5px;-webkit-text-stroke:0.3px #111111;">60</div>
<div class="t" style="top:1205.01px;font-size:19.3px;line-height:19.3px;font-weight:700;color:#111111;letter-spacing:0.8px;left:2786.5px;-webkit-text-stroke:0.3px #111111;">40</div>
<div class="t" style="top:1261.26px;font-size:19.3px;line-height:19.3px;font-weight:700;color:#111111;letter-spacing:0.8px;left:2786.5px;-webkit-text-stroke:0.3px #111111;">20</div>
<div class="t" style="top:1317.51px;font-size:19.3px;line-height:19.3px;font-weight:700;color:#111111;letter-spacing:0.8px;left:2786.5px;-webkit-text-stroke:0.3px #111111;">-</div>
<div class="t" style="top:1373.76px;font-size:19.3px;line-height:19.3px;font-weight:700;color:#111111;letter-spacing:0.8px;left:2780.5px;-webkit-text-stroke:0.3px #111111;"><span style="margin-right:1px">(</span>20<span style="margin-left:1px">)</span></div>
<div class="t" style="top:1430.01px;font-size:19.3px;line-height:19.3px;font-weight:700;color:#111111;letter-spacing:0.8px;left:2780.5px;-webkit-text-stroke:0.3px #111111;"><span style="margin-right:1px">(</span>40<span style="margin-left:1px">)</span></div>
<div class="t" style="top:1486.26px;font-size:19.3px;line-height:19.3px;font-weight:700;color:#111111;letter-spacing:0.8px;left:2780.5px;-webkit-text-stroke:0.3px #111111;"><span style="margin-right:1px">(</span>60<span style="margin-left:1px">)</span></div>
<div class="t" style="top:1121.76px;font-size:18.6px;line-height:18.6px;font-weight:700;color:#111111;letter-spacing:0.25px;left:379px;-webkit-text-stroke:0.3px #111111;">Revenue</div>
<div class="t" style="top:1121.76px;font-size:18.6px;line-height:18.6px;font-weight:700;color:#111111;letter-spacing:0.25px;left:546px;-webkit-text-stroke:0.3px #111111;">EBITDA</div>
<div class="t" style="top:1121.76px;font-size:18.6px;line-height:18.6px;font-weight:700;color:#111111;letter-spacing:0.62px;left:708px;-webkit-text-stroke:0.3px #111111;">Net Profit After Tax</div>
<div class="t" style="top:1121.76px;font-size:18.6px;line-height:18.6px;font-weight:700;color:#111111;letter-spacing:0.25px;left:1775.5px;-webkit-text-stroke:0.3px #111111;">Revenue</div>
<div class="t" style="top:1121.76px;font-size:18.6px;line-height:18.6px;font-weight:700;color:#111111;letter-spacing:0.25px;left:1942px;-webkit-text-stroke:0.3px #111111;">EBITDA</div>
<div class="t" style="top:1121.76px;font-size:18.6px;line-height:18.6px;font-weight:700;color:#111111;letter-spacing:0.62px;left:2104px;-webkit-text-stroke:0.3px #111111;">Net Profit After Tax</div>
<svg class="r" style="left:52px;top:138px;" width="48" height="52" viewBox="0 0 48 52">
<path d="M5 10 H12 M27 10 H34.5 V20" stroke="#9a9a9a" stroke-width="4" fill="none"/>
<path d="M5 8.5 V44.5 H23" stroke="#9a9a9a" stroke-width="4" fill="none"/>
<path d="M13 16 V9 H18 Q18 3.5 22 3.5 Q26 3.5 26 9 H31 V16 Z" stroke="#9a9a9a" stroke-width="2" fill="#292929"/>
<rect x="24" y="21.5" width="20" height="26" stroke="#9a9a9a" stroke-width="2.2" fill="#292929"/>
</svg>
<div class="t" style="top:195.7px;font-size:16.3px;line-height:16.3px;color:#7d7d7d;letter-spacing:-0.1px;left:52.2px;">Paste</div>
<svg class="r" style="left:65.05px;top:222px;" width="12.5" height="9" viewBox="0 0 12.5 9"><path d="M2 2 L6.25 7 L10.5 2" stroke="#7d7d7d" stroke-width="2" fill="none"/></svg>
<svg class="r" style="left:112px;top:138px;" width="26" height="28" viewBox="0 0 26 28">
<path d="M8.5 2 L16.5 20 M17.5 2 L9.5 20" stroke="#d4d4d4" stroke-width="1.5"/>
<circle cx="8" cy="22.5" r="3.2" stroke="#3a92dd" stroke-width="2" fill="none"/>
<circle cx="17.5" cy="22.5" r="3.2" stroke="#3a92dd" stroke-width="2" fill="none"/>
</svg>
<div class="t" style="top:145.61px;font-size:17px;line-height:17px;color:#f0f0f0;letter-spacing:0.1px;left:142.5px;">Cut</div>
<svg class="r" style="left:110px;top:177px;" width="30" height="28" viewBox="0 0 30 28">
<path d="M12 21 H3.5 V3 H12 L15.5 6.5" stroke="#d4d4d4" stroke-width="1.6" fill="none"/>
<path d="M13 25 V8.5 H21.5 L26 13 V25 Z" stroke="#d4d4d4" stroke-width="1.6" fill="none" stroke-linejoin="round"/>
<path d="M21.5 8.5 V13 H26" stroke="#d4d4d4" stroke-width="1.3" fill="none"/>
<path d="M16.5 17.5 H22.5 M16.5 20.5 H22.5" stroke="#d4d4d4" stroke-width="1.3"/>
</svg>
<div class="t" style="top:184.11px;font-size:17px;line-height:17px;color:#f0f0f0;letter-spacing:0.1px;left:142.5px;">Copy</div>
<svg class="r" style="left:209.3px;top:187.4px;" width="12" height="8.6" viewBox="0 0 12 8.6"><path d="M2 2 L6 6.6 L10 2" stroke="#e8e8e8" stroke-width="2" fill="none"/></svg>
<svg class="r" style="left:110px;top:216px;" width="30" height="28" viewBox="0 0 30 28">
<path d="M16.5 10 L25 2.5 L27 4.5 L19 12.5" stroke="#d8d8d8" stroke-width="1.8" fill="none" stroke-linejoin="round"/>
<path d="M3 12.5 L14 8 L20 14 L13.5 25 Z" stroke="#f0c050" stroke-width="1.8" fill="none" stroke-linejoin="round"/>
<path d="M5.5 17 L17 17.5 L13.5 25 Z" fill="#e8a838"/>
</svg>
<div class="t" style="top:223.11px;font-size:17px;line-height:17px;color:#f0f0f0;letter-spacing:0.1px;left:142.5px;">Format Painter</div>
<div class="t" style="top:254.2px;font-size:16.3px;line-height:16.3px;color:#f0f0f0;left:109.3px;">Clipboard</div>
<svg class="r" style="left:264px;top:256px;" width="14" height="14" viewBox="0 0 14 14"><path d="M1.5 12.5 V1.5 H12.5" stroke="#e6e6e6" stroke-width="1.8" fill="none"/><path d="M4.5 4.5 L11 11 M5.5 11.5 H11.5 V5.5" stroke="#e6e6e6" stroke-width="1.8" fill="none"/></svg>
<div class="r" style="left:282px;top:135px;width:1.3px;height:134px;background:#4d4d4d;"></div>
<div class="r" style="left:295px;top:146px;width:180px;height:35px;box-sizing:border-box;border:1.3px solid #6c6c6c;border-radius:7px;"></div>
<div class="t" style="top:155.71px;font-size:18.3px;line-height:18.3px;color:#f4f4f4;letter-spacing:-0.1px;left:299px;">Tahoma</div>
<svg class="r" style="left:460.7px;top:159.45px;" width="13" height="9.5" viewBox="0 0 13 9.5"><path d="M2 2 L6.5 7.5 L11 2" stroke="#e8e8e8" stroke-width="2" fill="none"/></svg>
<div class="r" style="left:479px;top:146px;width:65px;height:35px;box-sizing:border-box;border:1.3px solid #6c6c6c;border-radius:7px;"></div>
<div class="t" style="top:155.71px;font-size:18.3px;line-height:18.3px;color:#f4f4f4;left:482px;">8</div>
<svg class="r" style="left:528.5px;top:159.45px;" width="13" height="9.5" viewBox="0 0 13 9.5"><path d="M2 2 L6.5 7.5 L11 2" stroke="#e8e8e8" stroke-width="2" fill="none"/></svg>
<div class="t" style="top:149.17px;font-size:26.5px;line-height:26.5px;color:#d4d4d4;left:553.5px;font-weight:300;">A</div>
<svg class="r" style="left:568px;top:149px;" width="12" height="9" viewBox="0 0 12 9"><path d="M2 7 L6 3 L10 7" stroke="#3a92dd" stroke-width="1.6" fill="none"/></svg>
<div class="t" style="top:154.67px;font-size:20px;line-height:20px;color:#d4d4d4;left:595px;">A</div>
<svg class="r" style="left:605px;top:149px;" width="12" height="9" viewBox="0 0 12 9"><path d="M2 3 L6 7 L10 3" stroke="#3a92dd" stroke-width="1.6" fill="none"/></svg>
<div class="t" style="top:200.05px;font-size:20.5px;line-height:20.5px;font-weight:700;color:#d4d4d4;left:306px;">B</div>
<div class="t" style="top:199.62px;font-size:21px;line-height:21px;font-style:italic;color:#d4d4d4;font-family:'Liberation Serif', serif;left:346px;">I</div>
<div class="t" style="top:200.89px;font-size:19.5px;line-height:19.5px;color:#d4d4d4;left:383.5px;">U</div>
<div class="r" style="left:383px;top:219.5px;width:14.5px;height:1.6px;background:#d4d4d4;"></div>
<svg class="r" style="left:413px;top:208.2px;" width="12" height="8.6" viewBox="0 0 12 8.6"><path d="M2 2 L6 6.6 L10 2" stroke="#e8e8e8" stroke-width="2" fill="none"/></svg>
<div class="r" style="left:434.3px;top:194px;width:1.3px;height:36px;background:#4d4d4d;"></div>
<svg class="r" style="left:443px;top:199px;" width="26" height="25" viewBox="0 0 26 25">
<path d="M2 20 V2 H23 V20 M2 11.5 H23 M12.5 2 V20" stroke="#d4d4d4" stroke-width="1.6" stroke-dasharray="1.7 1.7" fill="none"/>
<path d="M1.5 22.5 H23.5" stroke="#d4d4d4" stroke-width="2.2"/>
</svg>
<svg class="r" style="left:478.3px;top:208.2px;" width="12" height="8.6" viewBox="0 0 12 8.6"><path d="M2 2 L6 6.6 L10 2" stroke="#e8e8e8" stroke-width="2" fill="none"/></svg>
<div class="r" style="left:499.3px;top:194px;width:1.3px;height:36px;background:#4d4d4d;"></div>
<svg class="r" style="left:508px;top:198px;" width="28" height="20" viewBox="0 0 28 20">
<path d="M13.5 5 L21 12.5 L13.5 19 L5 11 L11 5.5" stroke="#d4d4d4" stroke-width="1.6" fill="none" stroke-linejoin="round"/>
<path d="M11.5 10 V3.5 Q11.5 1.5 13.5 1.5 Q15.5 1.5 15.5 3.5 V8" stroke="#d4d4d4" stroke-width="1.5" fill="none"/>
<path d="M19 6.5 Q23.5 5 23 12.5" stroke="#8cc4ee" stroke-width="2.4" fill="none"/>
</svg>
<div class="r" style="left:509px;top:218px;width:24px;height:6px;background:#f2e600;"></div>
<svg class="r" style="left:543px;top:208.2px;" width="12" height="8.6" viewBox="0 0 12 8.6"><path d="M2 2 L6 6.6 L10 2" stroke="#e8e8e8" stroke-width="2" fill="none"/></svg>
<div class="t" style="top:197.65px;font-size:22.5px;line-height:22.5px;color:#d4d4d4;left:574.5px;">A</div>
<div class="r" style="left:570px;top:218px;width:24px;height:6px;background:#e30a0a;"></div>
<svg class="r" style="left:604.3px;top:208.2px;" width="12" height="8.6" viewBox="0 0 12 8.6"><path d="M2 2 L6 6.6 L10 2" stroke="#e8e8e8" stroke-width="2" fill="none"/></svg>
<div class="t" style="top:254.2px;font-size:16.3px;line-height:16.3px;color:#f0f0f0;left:430.3px;">Font</div>
<svg class="r" style="left:614px;top:256px;" width="14" height="14" viewBox="0 0 14 14"><path d="M1.5 12.5 V1.5 H12.5" stroke="#e6e6e6" stroke-width="1.8" fill="none"/><path d="M4.5 4.5 L11 11 M5.5 11.5 H11.5 V5.5" stroke="#e6e6e6" stroke-width="1.8" fill="none"/></svg>
<div class="r" style="left:632.5px;top:135px;width:1.3px;height:134px;background:#4d4d4d;"></div>
<svg class="r" style="left:652px;top:0px;" width="24" height="300" viewBox="0 0 24 300"><path d="M1 152 H23" stroke="#d4d4d4" stroke-width="1.8"/><path d="M5 158 H19" stroke="#d4d4d4" stroke-width="1.8"/><path d="M1 164 H23" stroke="#d4d4d4" stroke-width="1.8"/></svg>
<div class="r" style="left:685px;top:146px;width:36px;height:35px;box-sizing:border-box;border:1.3px solid #8a8a8a;border-radius:6px;background:#3b3b3b;"></div>
<svg class="r" style="left:691px;top:0px;" width="24" height="300" viewBox="0 0 24 300"><path d="M1 157 H23" stroke="#d4d4d4" stroke-width="1.8"/><path d="M5 163 H19" stroke="#d4d4d4" stroke-width="1.8"/><path d="M1 169 H23" stroke="#d4d4d4" stroke-width="1.8"/></svg>
<svg class="r" style="left:730px;top:0px;" width="24" height="300" viewBox="0 0 24 300"><path d="M1 162 H23" stroke="#d4d4d4" stroke-width="1.8"/><path d="M5 168 H19" stroke="#d4d4d4" stroke-width="1.8"/><path d="M1 174 H23" stroke="#d4d4d4" stroke-width="1.8"/></svg>
<div class="r" style="left:763.3px;top:146px;width:1.3px;height:36px;background:#4d4d4d;"></div>
<svg class="r" style="left:771px;top:149px;" width="30" height="28" viewBox="0 0 30 28">
<text x="2" y="17" font-family="Liberation Sans" font-size="13" fill="#d4d4d4" transform="rotate(-45 9 12)">ab</text>
<path d="M8 25 L25 8 M18.5 8 H25 V14.5" stroke="#3a92dd" stroke-width="1.8" fill="none"/>
</svg>
<svg class="r" style="left:804px;top:160.2px;" width="12" height="8.6" viewBox="0 0 12 8.6"><path d="M2 2 L6 6.6 L10 2" stroke="#e8e8e8" stroke-width="2" fill="none"/></svg>
<div class="r" style="left:851.3px;top:144px;width:1.3px;height:94px;background:#4d4d4d;"></div>
<svg class="r" style="left:868px;top:149px;" width="28" height="30" viewBox="0 0 28 30">
<text x="1.5" y="14.3" font-family="Liberation Sans" font-size="15" fill="#d4d4d4" letter-spacing="-0.3">ab</text>
<text x="1.5" y="25.5" font-family="Liberation Sans" font-size="15" fill="#d4d4d4">c</text>
<path d="M22.5 14.5 Q25 16 24 19.5 Q22.5 23 12.5 23.2 M16.5 19 L12.3 23.2 L16.5 27.5" stroke="#3a92dd" stroke-width="2" fill="none"/>
</svg>
<div class="t" style="top:156.61px;font-size:17px;line-height:17px;color:#f0f0f0;letter-spacing:0.2px;left:897px;">Wrap Text</div>
<svg class="r" style="left:652px;top:0px;" width="24" height="300" viewBox="0 0 24 300"><path d="M1 201.5 H23" stroke="#d4d4d4" stroke-width="1.8"/><path d="M1 207.8 H15" stroke="#d4d4d4" stroke-width="1.8"/><path d="M1 214.1 H23" stroke="#d4d4d4" stroke-width="1.8"/><path d="M1 220.4 H15" stroke="#d4d4d4" stroke-width="1.8"/></svg>
<svg class="r" style="left:691px;top:0px;" width="24" height="300" viewBox="0 0 24 300"><path d="M1 201.5 H23" stroke="#d4d4d4" stroke-width="1.8"/><path d="M5 207.8 H19" stroke="#d4d4d4" stroke-width="1.8"/><path d="M1 214.1 H23" stroke="#d4d4d4" stroke-width="1.8"/><path d="M5 220.4 H19" stroke="#d4d4d4" stroke-width="1.8"/></svg>
<svg class="r" style="left:730px;top:0px;" width="24" height="300" viewBox="0 0 24 300"><path d="M1 201.5 H23" stroke="#d4d4d4" stroke-width="1.8"/><path d="M9 207.8 H23" stroke="#d4d4d4" stroke-width="1.8"/><path d="M1 214.1 H23" stroke="#d4d4d4" stroke-width="1.8"/><path d="M9 220.4 H23" stroke="#d4d4d4" stroke-width="1.8"/></svg>
<div class="r" style="left:763.3px;top:194px;width:1.3px;height:36px;background:#4d4d4d;"></div>
<svg class="r" style="left:772px;top:198px;" width="26" height="26" viewBox="0 0 26 26">
<path d="M2 3 H24 M12 10 H24 M12 15 H24 M2 22 H24" stroke="#d4d4d4" stroke-width="1.8"/>
<path d="M10 12.5 H3 M6.5 9 L3 12.5 L6.5 16" stroke="#3a92dd" stroke-width="1.8" fill="none"/>
</svg>
<svg class="r" style="left:811px;top:198px;" width="26" height="26" viewBox="0 0 26 26">
<path d="M2 3 H24 M12 10 H24 M12 15 H24 M2 22 H24" stroke="#d4d4d4" stroke-width="1.8"/>
<path d="M2 12.5 H9.5 M6 9 L9.5 12.5 L6 16" stroke="#3a92dd" stroke-width="1.8" fill="none"/>
</svg>
<svg class="r" style="left:865px;top:198px;" width="28" height="28" viewBox="0 0 28 28">
<rect x="2" y="2" width="23" height="22" stroke="#d4d4d4" stroke-width="1.6" fill="none"/>
<path d="M2 6 H25 M2 20 H25 M13.5 2 V6 M13.5 20 V24" stroke="#d4d4d4" stroke-width="1.4"/>
<path d="M2 6 V20 M25 6 V20" stroke="#3a92dd" stroke-width="2"/>
<path d="M6 13 H21 M9.5 9.5 L6 13 L9.5 16.5 M17.5 9.5 L21 13 L17.5 16.5" stroke="#3a92dd" stroke-width="1.8" fill="none"/>
</svg>
<div class="t" style="top:204.61px;font-size:17px;line-height:17px;color:#f0f0f0;letter-spacing:0.15px;left:897px;">Merge &amp; Center</div>
<svg class="r" style="left:1048px;top:208.2px;" width="12" height="8.6" viewBox="0 0 12 8.6"><path d="M2 2 L6 6.6 L10 2" stroke="#e8e8e8" stroke-width="2" fill="none"/></svg>
<div class="t" style="top:254.2px;font-size:16.3px;line-height:16.3px;color:#f0f0f0;left:810.3px;">Alignment</div>
<svg class="r" style="left:1065px;top:256px;" width="14" height="14" viewBox="0 0 14 14"><path d="M1.5 12.5 V1.5 H12.5" stroke="#e6e6e6" stroke-width="1.8" fill="none"/><path d="M4.5 4.5 L11 11 M5.5 11.5 H11.5 V5.5" stroke="#e6e6e6" stroke-width="1.8" fill="none"/></svg>
<div class="r" style="left:1083.3px;top:135px;width:1.3px;height:134px;background:#4d4d4d;"></div>
<div class="r" style="left:1096px;top:146px;width:218px;height:35px;box-sizing:border-box;border:1.3px solid #6c6c6c;border-radius:7px;"></div>
<div class="t" style="top:155.31px;font-size:18.3px;line-height:18.3px;color:#f4f4f4;letter-spacing:-0.1px;left:1099.7px;">General</div>
<svg class="r" style="left:1298.8px;top:159.65px;" width="13" height="9.5" viewBox="0 0 13 9.5"><path d="M2 2 L6.5 7.5 L11 2" stroke="#e8e8e8" stroke-width="2" fill="none"/></svg>
<div class="t" style="top:201.53px;font-size:23px;line-height:23px;color:#d4d4d4;left:1106px;">$</div>
<svg class="r" style="left:1136px;top:208.2px;" width="12" height="8.6" viewBox="0 0 12 8.6"><path d="M2 2 L6 6.6 L10 2" stroke="#e8e8e8" stroke-width="2" fill="none"/></svg>
<div class="t" style="top:201.34px;font-size:25px;line-height:25px;color:#d4d4d4;left:1162.5px;font-weight:300;">%</div>
<svg class="r" style="left:1206px;top:201px;" width="18" height="24" viewBox="0 0 18 24"><circle cx="9" cy="8" r="4" fill="#d4d4d4"/><path d="M12.5 8.5 Q12 17 5 20" stroke="#d4d4d4" stroke-width="3" fill="none"/></svg>
<div class="r" style="left:1235.3px;top:194px;width:1.3px;height:36px;background:#4d4d4d;"></div>
<svg class="r" style="left:1243px;top:199px;" width="28" height="26" viewBox="0 0 28 26">
<path d="M2.5 7.5 H11 M6 4 L2.5 7.5 L6 11" stroke="#3a92dd" stroke-width="1.7" fill="none"/>
<text x="12" y="12" font-family="Liberation Sans" font-size="12.5" fill="#d4d4d4">.0</text>
<text x="4" y="24" font-family="Liberation Sans" font-size="12.5" fill="#d4d4d4">.00</text>
</svg>
<svg class="r" style="left:1280px;top:199px;" width="30" height="26" viewBox="0 0 30 26">
<text x="7" y="12" font-family="Liberation Sans" font-size="12.5" fill="#d4d4d4">.00</text>
<path d="M2.5 19 H12 M8.5 15.5 L12 19 L8.5 22.5" stroke="#3a92dd" stroke-width="1.7" fill="none"/>
<text x="14" y="24" font-family="Liberation Sans" font-size="12.5" fill="#d4d4d4">.0</text>
</svg>
<div class="t" style="top:254.2px;font-size:16.3px;line-height:16.3px;color:#f0f0f0;left:1163.3px;">Number</div>
<svg class="r" style="left:1307px;top:256px;" width="14" height="14" viewBox="0 0 14 14"><path d="M1.5 12.5 V1.5 H12.5" stroke="#e6e6e6" stroke-width="1.8" fill="none"/><path d="M4.5 4.5 L11 11 M5.5 11.5 H11.5 V5.5" stroke="#e6e6e6" stroke-width="1.8" fill="none"/></svg>
<div class="r" style="left:1325.5px;top:135px;width:1.3px;height:134px;background:#4d4d4d;"></div>
<svg class="r" style="left:1343px;top:140px;" width="48" height="44" viewBox="0 0 48 44">
<path d="M5 5.5 H46 V38.5 H5 Z M5 16.5 H46 M5 27.5 H46 M19 5.5 V38.5 M32 5.5 V38.5" stroke="#d4d4d4" stroke-width="1.8" fill="none"/>
<rect x="19" y="17" width="27" height="10" fill="#1f78d1"/>
<path d="M33 22 H2 M9.5 14.5 L2 22 L9.5 29.5" stroke="#3a92dd" stroke-width="1.8" fill="none"/>
<path d="M32 17 V27" stroke="#d4d4d4" stroke-width="1.2"/></svg>
<div class="t" style="top:196.81px;font-size:17px;line-height:17px;color:#f0f0f0;letter-spacing:0.2px;left:1347.3px;">Insert</div>
<svg class="r" style="left:1362px;top:221.9px;" width="12" height="8.6" viewBox="0 0 12 8.6"><path d="M2 2 L6 6.6 L10 2" stroke="#e8e8e8" stroke-width="2" fill="none"/></svg>
<svg class="r" style="left:1409px;top:140px;" width="48" height="44" viewBox="0 0 48 44">
<path d="M5 5.5 H46 V38.5 H5 Z M5 16.5 H46 M5 27.5 H46 M19 5.5 V38.5 M32 5.5 V38.5" stroke="#d4d4d4" stroke-width="1.8" fill="none"/>
<rect x="7" y="17" width="25" height="10" fill="#1f78d1"/>
<path d="M19 17 V27" stroke="#d4d4d4" stroke-width="1.2"/>
<path d="M32 17 L37 22 L32 27 Z" fill="#1f78d1"/>
<path d="M36 13 L47 29 M47 13 L36 29" stroke="#e04848" stroke-width="1.8"/></svg>
<div class="t" style="top:196.81px;font-size:17px;line-height:17px;color:#f0f0f0;letter-spacing:0.2px;left:1409.6px;">Delete</div>
<svg class="r" style="left:1427.2px;top:221.9px;" width="12" height="8.6" viewBox="0 0 12 8.6"><path d="M2 2 L6 6.6 L10 2" stroke="#e8e8e8" stroke-width="2" fill="none"/></svg>
<svg class="r" style="left:1475px;top:140px;" width="48" height="44" viewBox="0 0 48 44">
<path d="M5 5.5 H46 V38.5 H5 Z M5 16.5 H46 M5 27.5 H46 M19 5.5 V38.5 M32 5.5 V38.5" stroke="#d4d4d4" stroke-width="1.8" fill="none"/>
<rect x="20" y="17" width="11" height="10" fill="#1f78d1"/>
<path d="M14 -1 H37 M14 -3.5 V1.5 M37 -3.5 V1.5" stroke="#3a92dd" stroke-width="1.8"/></svg>
<svg class="r" style="left:1485px;top:134px;" width="32" height="12" viewBox="0 0 32 12"><path d="M3 5 H29 M3 2 V8 M29 2 V8" stroke="#3a92dd" stroke-width="1.8"/></svg>
<div class="t" style="top:194.01px;font-size:17px;line-height:17px;color:#f0f0f0;letter-spacing:0.2px;left:1472.8px;">Format</div>
<svg class="r" style="left:1493.3px;top:220px;" width="12" height="8.6" viewBox="0 0 12 8.6"><path d="M2 2 L6 6.6 L10 2" stroke="#e8e8e8" stroke-width="2" fill="none"/></svg>
<div class="t" style="top:254.2px;font-size:16.3px;line-height:16.3px;color:#f0f0f0;left:1418px;">Cells</div>
<div class="r" style="left:1544.5px;top:135px;width:1.3px;height:134px;background:#4d4d4d;"></div>
<svg class="r" style="left:1562px;top:139px;" width="26" height="27" viewBox="0 0 26 27"><path d="M21.5 5 V2.5 H4 L13.5 13 L4 23.5 H21.5 V21" stroke="#d4d4d4" stroke-width="1.8" fill="none" stroke-linejoin="miter"/></svg>
<div class="t" style="top:145.41px;font-size:17px;line-height:17px;color:#f0f0f0;letter-spacing:0.2px;left:1593px;">AutoSum</div>
<svg class="r" style="left:1693.2px;top:148.2px;" width="12" height="8.6" viewBox="0 0 12 8.6"><path d="M2 2 L6 6.6 L10 2" stroke="#e8e8e8" stroke-width="2" fill="none"/></svg>
<svg class="r" style="left:1561px;top:178px;" width="28" height="26" viewBox="0 0 28 26"><path d="M3.5 3 H24.5 V22.5 H3.5 Z M3.5 8 H24.5" stroke="#d4d4d4" stroke-width="1.8" fill="none"/>
<path d="M14 10.5 V19.5 M10 15.5 L14 19.5 L18 15.5" stroke="#3a92dd" stroke-width="1.8" fill="none"/></svg>
<div class="t" style="top:183.91px;font-size:17px;line-height:17px;color:#f0f0f0;letter-spacing:0.2px;left:1593.5px;">Fill</div>
<svg class="r" style="left:1618.6px;top:185.8px;" width="12" height="8.6" viewBox="0 0 12 8.6"><path d="M2 2 L6 6.6 L10 2" stroke="#e8e8e8" stroke-width="2" fill="none"/></svg>
<svg class="r" style="left:1561px;top:216px;" width="28" height="28" viewBox="0 0 28 28"><path d="M3 18 L8.5 12.5 L17 21 L11.5 26.5 Z" fill="#b84fcc"/>
<path d="M3 18 L16.5 4.5 L25 13 L11.5 26.5 Z" stroke="#c65bd6" stroke-width="2" fill="none" stroke-linejoin="round"/></svg>
<div class="t" style="top:223.21px;font-size:17px;line-height:17px;color:#f0f0f0;letter-spacing:0.2px;left:1593px;">Clear</div>
<svg class="r" style="left:1636.6px;top:225.2px;" width="12" height="8.6" viewBox="0 0 12 8.6"><path d="M2 2 L6 6.6 L10 2" stroke="#e8e8e8" stroke-width="2" fill="none"/></svg>
<svg class="r" style="left:1727px;top:139px;" width="50" height="46" viewBox="0 0 50 46">
<text x="1" y="21" font-family="Liberation Sans" font-size="23" fill="#3a92dd">A</text>
<path d="M3 24.5 H14.5 L3 41.5 H15" stroke="#d4d4d4" stroke-width="1.8" fill="none"/>
<path d="M21 13 H44 L36 23 V35.5 H29 V23 Z" stroke="#d4d4d4" stroke-width="1.8" fill="none" stroke-linejoin="round"/></svg>
<div class="t" style="top:194.41px;font-size:17px;line-height:17px;color:#f0f0f0;letter-spacing:0.3px;left:1725.2px;">Sort &amp;</div>
<div class="t" style="top:218.01px;font-size:17px;line-height:17px;color:#f0f0f0;letter-spacing:0.3px;left:1724.8px;">Filter</div>
<svg class="r" style="left:1766.1px;top:220.7px;" width="12" height="8.6" viewBox="0 0 12 8.6"><path d="M2 2 L6 6.6 L10 2" stroke="#e8e8e8" stroke-width="2" fill="none"/></svg>
<svg class="r" style="left:1795px;top:139px;" width="50" height="48" viewBox="0 0 50 48"><circle cx="31" cy="18" r="15.3" stroke="#d4d4d4" stroke-width="1.8" fill="none"/><path d="M20.5 29 L4.5 45" stroke="#d4d4d4" stroke-width="1.8"/></svg>
<div class="t" style="top:194.41px;font-size:17px;line-height:17px;color:#f0f0f0;letter-spacing:0.3px;left:1795.4px;">Find &amp;</div>
<div class="t" style="top:218.01px;font-size:17px;line-height:17px;color:#f0f0f0;letter-spacing:0.3px;left:1790.6px;">Select</div>
<svg class="r" style="left:1840px;top:220.7px;" width="12" height="8.6" viewBox="0 0 12 8.6"><path d="M2 2 L6 6.6 L10 2" stroke="#e8e8e8" stroke-width="2" fill="none"/></svg>
<div class="t" style="top:254.2px;font-size:16.3px;line-height:16.3px;color:#f0f0f0;left:1682.5px;">Editing</div>
<div class="r" style="left:1868.5px;top:135px;width:1.3px;height:134px;background:#4d4d4d;"></div>
<svg class="r" style="left:1893px;top:139px;" width="46" height="46" viewBox="0 0 46 46"><path d="M2 1.5 H44.5 V44.5 H2 Z M5.5 5 V41 H41 V5 Z" fill="#4a1c10" fill-rule="evenodd" stroke="#d9542c" stroke-width="1.1"/>
<g fill="none" stroke="#e05a2c" stroke-width="1.8">
<rect x="7.3" y="7.5" width="13.2" height="13"/>
<rect x="25.6" y="7.5" width="13.2" height="13"/>
<rect x="7.3" y="25.6" width="13.2" height="13.2"/>
<rect x="25.6" y="25.6" width="13.2" height="13.2"/>
</g></svg>
<div class="t" style="top:194.41px;font-size:17px;line-height:17px;color:#f0f0f0;letter-spacing:0.3px;left:1885.3px;">Add-ins</div>
<div class="t" style="top:254.2px;font-size:16.3px;line-height:16.3px;color:#f0f0f0;letter-spacing:0.2px;left:1888.2px;">Add-ins</div>
<div class="r" style="left:1963.5px;top:135px;width:1.3px;height:134px;background:#4d4d4d;"></div>
<svg class="r" style="left:1987px;top:139px;" width="48" height="48" viewBox="0 0 48 48"><rect x="2.5" y="2.5" width="41" height="41.5" stroke="#d4d4d4" stroke-width="1.8" fill="none"/>
<rect x="3.5" y="3.5" width="39" height="4" fill="#7a7a7a"/>
<path d="M2.5 8.5 H43.5 M2.5 20.5 H10 M37 20.5 H43.5 M2.5 31 H14 M33 31 H43.5 M15.5 33 V44 M29.5 33 V44" stroke="#d4d4d4" stroke-width="1.5"/>
<circle cx="21.5" cy="20" r="12.3" stroke="#d4d4d4" stroke-width="1.8" fill="#292929"/>
<rect x="15.3" y="16.5" width="3" height="8.5" fill="#9a9a9a"/>
<rect x="19.3" y="10.5" width="4.6" height="14.5" fill="#292929" stroke="#e8e8e8" stroke-width="1.2"/>
<rect x="24.8" y="13" width="3.6" height="12" fill="#3a9ae8"/>
<path d="M30 29 L43.5 42.5" stroke="#d4d4d4" stroke-width="2"/></svg>
<div class="t" style="top:194.41px;font-size:17px;line-height:17px;color:#f0f0f0;letter-spacing:0.3px;left:1980.2px;">Analyze</div>
<div class="t" style="top:218.01px;font-size:17px;line-height:17px;color:#f0f0f0;letter-spacing:0.3px;left:1992.3px;">Data</div>
<div class="r" style="left:2056px;top:135px;width:1.3px;height:134px;background:#4d4d4d;"></div>
<svg class="r" style="left:2155px;top:141px;" width="116" height="116" viewBox="0 0 116 116"><circle cx="57.5" cy="57.5" r="56" fill="#ffffff"/>
<rect x="27" y="32" width="61" height="53" fill="#5b62e8"/>
<rect x="35" y="40.5" width="18.4" height="14.2" fill="#ffffff"/>
<rect x="61.3" y="40.5" width="18.6" height="14.2" fill="#ffffff"/>
<rect x="35" y="62" width="18.4" height="14.2" fill="#ffffff"/>
<rect x="61.3" y="62" width="18.6" height="14.2" fill="#ffffff"/></svg>
<div class="t" style="top:154.32px;font-size:51.6px;line-height:51.6px;font-weight:700;color:#ffffff;left:2296px;transform:scaleX(0.878);transform-origin:0 0;letter-spacing:-0.5px;-webkit-text-stroke:1.6px #ffffff;">FINMODELSLAB</div>
<div class="t" style="top:207.45px;font-size:35.5px;line-height:35.5px;color:#ffffff;letter-spacing:23.6px;left:2296px;">Templates</div>
<div class="r" style="left:2414.5px;top:150px;width:17px;height:17px;background:#292929;"></div>
<div class="r" style="left:2418.5px;top:154.5px;width:9px;height:29px;border-radius:4.5px;background:#ffffff;"></div>
<svg class="r" style="left:2848px;top:251.75px;" width="18" height="11.5" viewBox="0 0 18 11.5"><path d="M2 2 L9 9.5 L16 2" stroke="#e0e0e0" stroke-width="1.8" fill="none"/></svg>
<div class="r" style="left:2856px;top:278px;width:4px;height:22px;background:#0a0a0a;"></div>
<div class="r" style="left:2860px;top:278px;width:31px;height:1392px;background:#161616;"></div>
<svg class="r" style="left:2866px;top:283px;" width="20" height="16" viewBox="0 0 20 16"><path d="M10 2.5 L17.5 13 H2.5 Z" fill="#9a9a9a" stroke="#9a9a9a" stroke-width="1.5" stroke-linejoin="round"/></svg>
<div class="r" style="left:2870px;top:306px;width:12px;height:503px;border-radius:6px;background:#9c9c9c;"></div>
<svg class="r" style="left:2866px;top:1651px;" width="20" height="16" viewBox="0 0 20 16"><path d="M10 13.5 L17.5 3 H2.5 Z" fill="#9a9a9a" stroke="#9a9a9a" stroke-width="1.5" stroke-linejoin="round"/></svg>
<div class="r" style="left:11px;top:1670px;width:2880px;height:48px;background:#0a0a0a;"></div>
<svg class="r" style="left:42px;top:1683px;" width="18" height="22" viewBox="0 0 18 22"><path d="M12 3 L5 11 L12 19" stroke="#8c8c8c" stroke-width="1.8" fill="none"/></svg>
<svg class="r" style="left:90px;top:1683px;" width="18" height="22" viewBox="0 0 18 22"><path d="M6 3 L13 11 L6 19" stroke="#bdbdbd" stroke-width="1.8" fill="none"/></svg>
<div class="t" style="top:1686.41px;font-size:19.6px;line-height:19.6px;color:#f2f2f2;left:190px;">Contents</div>
<div class="r" style="left:299px;top:1676px;width:128px;height:36px;border-radius:7px;background:#fde86e;"></div>
<div class="t" style="top:1686.41px;font-size:19.6px;line-height:19.6px;color:#141414;left:-237px;width:1200px;text-align:center;">Dashboard</div>
<div class="r" style="left:440px;top:1676px;width:106px;height:36px;border-radius:7px;background:#fde86e;"></div>
<div class="t" style="top:1686.41px;font-size:19.6px;line-height:19.6px;color:#141414;left:-107px;width:1200px;text-align:center;">Revenue</div>
<div class="r" style="left:559px;top:1676px;width:158px;height:36px;border-radius:7px;background:#fde86e;"></div>
<div class="t" style="top:1686.41px;font-size:19.6px;line-height:19.6px;color:#141414;left:38px;width:1200px;text-align:center;">COGS &amp; OPEX</div>
<div class="r" style="left:730px;top:1676px;width:89px;height:36px;border-radius:7px;background:#fde86e;"></div>
<div class="t" style="top:1686.41px;font-size:19.6px;line-height:19.6px;color:#141414;left:174.5px;width:1200px;text-align:center;">Payroll</div>
<div class="r" style="left:832px;top:1676px;width:86.5px;height:36px;border-radius:7px;background:#fde86e;"></div>
<div class="t" style="top:1686.41px;font-size:19.6px;line-height:19.6px;color:#141414;left:275.25px;width:1200px;text-align:center;">CAPEX</div>
<div class="r" style="left:932px;top:1676px;width:113px;height:36px;border-radius:7px;background:#fde86e;"></div>
<div class="t" style="top:1686.41px;font-size:19.6px;line-height:19.6px;color:#141414;left:388.5px;width:1200px;text-align:center;">CapTable</div>
<div class="r" style="left:1058px;top:1676px;width:90px;height:36px;border-radius:7px;background:#fde86e;"></div>
<div class="t" style="top:1686.41px;font-size:19.6px;line-height:19.6px;color:#141414;left:503px;width:1200px;text-align:center;">Capital</div>
<div class="r" style="left:1161px;top:1676px;width:42px;height:36px;border-radius:7px;background:#4db0e6;"></div>
<div class="t" style="top:1686.41px;font-size:19.6px;line-height:19.6px;color:#141414;left:582px;width:1200px;text-align:center;">IS</div>
<div class="r" style="left:1216px;top:1676px;width:48px;height:36px;border-radius:7px;background:#4db0e6;"></div>
<div class="t" style="top:1686.41px;font-size:19.6px;line-height:19.6px;color:#141414;left:640px;width:1200px;text-align:center;">CF</div>
<div class="r" style="left:1277px;top:1676px;width:48px;height:36px;border-radius:7px;background:#4db0e6;"></div>
<div class="t" style="top:1686.41px;font-size:19.6px;line-height:19.6px;color:#141414;left:701px;width:1200px;text-align:center;">BS</div>
<div class="r" style="left:1338px;top:1676px;width:115px;height:36px;border-radius:7px;background:#4db0e6;"></div>
<div class="t" style="top:1686.41px;font-size:19.6px;line-height:19.6px;color:#141414;left:795.5px;width:1200px;text-align:center;">Scenarios</div>
<div class="r" style="left:1466px;top:1676px;width:115px;height:36px;border-radius:7px;background:#4db0e6;"></div>
<div class="t" style="top:1686.41px;font-size:19.6px;line-height:19.6px;color:#141414;left:923.5px;width:1200px;text-align:center;">Valuation</div>
<div class="r" style="left:1721px;top:1676px;width:48px;height:36px;border-radius:7px;background:#4db0e6;"></div>
<div class="t" style="top:1686.41px;font-size:19.6px;line-height:19.6px;color:#141414;left:1145px;width:1200px;text-align:center;">BE</div>
<div class="r" style="left:1782px;top:1676px;width:71px;height:36px;border-radius:7px;background:#4db0e6;"></div>
<div class="t" style="top:1686.41px;font-size:19.6px;line-height:19.6px;color:#141414;left:1217.5px;width:1200px;text-align:center;">ROIC</div>
<div class="r" style="left:1867px;top:1676px;width:85px;height:36px;border-radius:7px;background:#4db0e6;"></div>
<div class="t" style="top:1686.41px;font-size:19.6px;line-height:19.6px;color:#141414;left:1309.5px;width:1200px;text-align:center;">Charts</div>
<div class="r" style="left:1965px;top:1676px;width:63px;height:36px;border-radius:7px;background:#4db0e6;"></div>
<div class="t" style="top:1686.41px;font-size:19.6px;line-height:19.6px;color:#141414;left:1396.5px;width:1200px;text-align:center;">KPIs</div>
<div class="r" style="left:2042px;top:1676px;width:30px;height:36px;border-radius:7px 0 0 7px;background:#4db0e6;overflow:hidden;"><div class="t" style="left:8px;top:9.41px;font-size:19.6px;line-height:19.6px;color:#141414">Sc</div></div>
<div class="r" style="left:292px;top:1681px;width:1.2px;height:25px;background:#525252;"></div>
<div class="r" style="left:433px;top:1681px;width:1.2px;height:25px;background:#525252;"></div>
<div class="r" style="left:552px;top:1681px;width:1.2px;height:25px;background:#525252;"></div>
<div class="r" style="left:723px;top:1681px;width:1.2px;height:25px;background:#525252;"></div>
<div class="r" style="left:826px;top:1681px;width:1.2px;height:25px;background:#525252;"></div>
<div class="r" style="left:925px;top:1681px;width:1.2px;height:25px;background:#525252;"></div>
<div class="r" style="left:1052px;top:1681px;width:1.2px;height:25px;background:#525252;"></div>
<div class="r" style="left:1154px;top:1681px;width:1.2px;height:25px;background:#525252;"></div>
<div class="r" style="left:1209px;top:1681px;width:1.2px;height:25px;background:#525252;"></div>
<div class="r" style="left:1270px;top:1681px;width:1.2px;height:25px;background:#525252;"></div>
<div class="r" style="left:1331px;top:1681px;width:1.2px;height:25px;background:#525252;"></div>
<div class="r" style="left:1460px;top:1681px;width:1.2px;height:25px;background:#525252;"></div>
<div class="r" style="left:1588px;top:1681px;width:1.2px;height:25px;background:#525252;"></div>
<div class="r" style="left:1714px;top:1681px;width:1.2px;height:25px;background:#525252;"></div>
<div class="r" style="left:1775px;top:1681px;width:1.2px;height:25px;background:#525252;"></div>
<div class="r" style="left:1860px;top:1681px;width:1.2px;height:25px;background:#525252;"></div>
<div class="r" style="left:1958px;top:1681px;width:1.2px;height:25px;background:#525252;"></div>
<div class="r" style="left:2035px;top:1681px;width:1.2px;height:25px;background:#525252;"></div>
<div class="r" style="left:1586px;top:1670px;width:8px;height:8px;background:#ffffff;"></div>
<div class="r" style="left:1708px;top:1670px;width:8px;height:8px;background:#ffffff;"></div>
<div class="r" style="left:1586px;top:1670px;width:8px;height:8px;border-top-right-radius:8px;background:#0a0a0a;"></div>
<div class="r" style="left:1708px;top:1670px;width:8px;height:8px;border-top-left-radius:8px;background:#0a0a0a;"></div>
<div class="r" style="left:1594px;top:1669px;width:114px;height:43px;box-sizing:border-box;border-radius:0 0 8px 8px;border:1.5px solid #ffffff;border-top:0;background:linear-gradient(#ffffff 0%, #eef7fd 45%, #c6e4f8 100%);"></div>
<div class="t" style="top:1680.06px;font-size:20.6px;line-height:20.6px;color:#1a1f2a;letter-spacing:0.1px;left:1051.2px;width:1200px;text-align:center;">Summary</div>
<div class="r" style="left:1606px;top:1705px;width:90px;height:3px;background:#1b7a47;"></div>
<div class="r" style="left:2086.5px;top:1690.5px;width:5px;height:5px;border-radius:50%;background:#e8e8e8;"></div>
<div class="r" style="left:2092.5px;top:1690.5px;width:5px;height:5px;border-radius:50%;background:#e8e8e8;"></div>
<div class="r" style="left:2098.5px;top:1690.5px;width:5px;height:5px;border-radius:50%;background:#e8e8e8;"></div>
<div class="r" style="left:2135px;top:1692.5px;width:18px;height:1.8px;background:#e8e8e8;"></div>
<div class="r" style="left:2143.1px;top:1684.5px;width:1.8px;height:18px;background:#e8e8e8;"></div>
<div class="r" style="left:2189.5px;top:1684px;width:4px;height:4px;border-radius:50%;background:#e8e8e8;"></div>
<div class="r" style="left:2189.5px;top:1691px;width:4px;height:4px;border-radius:50%;background:#e8e8e8;"></div>
<div class="r" style="left:2189.5px;top:1698px;width:4px;height:4px;border-radius:50%;background:#e8e8e8;"></div>
<div class="r" style="left:2216px;top:1680px;width:643px;height:26px;border-radius:13px;background:#1b1b1b;"></div>
<svg class="r" style="left:2222px;top:1684px;" width="16" height="18" viewBox="0 0 16 18"><path d="M3 9 L13 2.5 V15.5 Z" fill="#9a9a9a" stroke="#9a9a9a" stroke-width="1.5" stroke-linejoin="round"/></svg>
<div class="r" style="left:2242px;top:1687px;width:535px;height:12px;border-radius:6px;background:#9c9c9c;"></div>
<svg class="r" style="left:2838px;top:1684px;" width="16" height="18" viewBox="0 0 16 18"><path d="M13 9 L3 2.5 V15.5 Z" fill="#9a9a9a" stroke="#9a9a9a" stroke-width="1.5" stroke-linejoin="round"/></svg>
<div class="r" style="left:11px;top:1718px;width:2880px;height:33px;background:#141414;"></div>
<div class="r" style="left:11px;top:1717px;width:2880px;height:1px;background:#2b2b2b;"></div>
<div class="t" style="top:1726.29px;font-size:16.2px;line-height:16.2px;color:#e6e6e6;letter-spacing:-0.2px;left:27px;">Ready</div>
<svg class="r" style="left:97px;top:1724px;" width="26" height="24" viewBox="0 0 26 24"><rect x="2.5" y="3" width="20" height="17" rx="1.5" stroke="#e0e0e0" stroke-width="1.5" fill="none"/><path d="M2.5 7.5 H22.5" stroke="#e0e0e0" stroke-width="1.5"/><path d="M5.5 11 H10 M5.5 14.5 H9" stroke="#e0e0e0" stroke-width="1.4"/><circle cx="16.5" cy="15.5" r="5" fill="#141414" stroke="#e0e0e0" stroke-width="1.5"/><circle cx="16.5" cy="15.5" r="2.3" fill="#e0e0e0"/></svg>
<svg class="r" style="left:143px;top:1722px;" width="28" height="28" viewBox="0 0 28 28"><circle cx="12" cy="4.5" r="2.3" stroke="#e0e0e0" stroke-width="1.5" fill="none"/><path d="M3 9 Q12 11 21 8 M12 10.5 V16 L7 24 M12 16 L15 20" stroke="#e0e0e0" stroke-width="1.6" fill="none" stroke-linecap="round"/><path d="M17 18 L24 25 M24 18 L17 25" stroke="#e0e0e0" stroke-width="1.6"/></svg>
<div class="t" style="top:1726.46px;font-size:16px;line-height:16px;font-weight:700;color:#f4f4f4;letter-spacing:-0.15px;left:173px;">Accessibility: Investigate</div>
<div class="r" style="left:2445px;top:1719px;width:60px;height:32px;background:#242424;"></div>
<svg class="r" style="left:2462px;top:1723px;" width="24" height="24" viewBox="0 0 24 24"><rect x="2" y="2" width="20" height="20" stroke="#e8e8e8" stroke-width="1.6" fill="none"/><path d="M2 8.7 H22 M2 15.3 H22 M8.7 2 V22 M15.3 2 V22" stroke="#e8e8e8" stroke-width="1.6"/></svg>
<svg class="r" style="left:2522px;top:1723px;" width="26" height="24" viewBox="0 0 26 24"><rect x="2" y="2" width="22" height="20" stroke="#e8e8e8" stroke-width="1.6" fill="none"/><rect x="6" y="5.5" width="14" height="13" stroke="#e8e8e8" stroke-width="1.4" fill="none"/><path d="M9 9 H17 M9 12 H17 M9 15 H17" stroke="#e8e8e8" stroke-width="1.3"/></svg>
<svg class="r" style="left:2582px;top:1723px;" width="26" height="24" viewBox="0 0 26 24"><rect x="2" y="2" width="22" height="20" stroke="#e8e8e8" stroke-width="1.6" fill="none"/><path d="M9 2 V12 H17 V2" stroke="#e8e8e8" stroke-width="1.6" fill="none"/></svg>
<div class="r" style="left:2633px;top:1734.5px;width:12px;height:1.5px;background:#d0d0d0;"></div>
<div class="r" style="left:2653px;top:1734.5px;width:148px;height:1.8px;background:#bdbdbd;"></div>
<div class="r" style="left:2727px;top:1726px;width:9px;height:18px;border-radius:2px;background:#bdbdbd;"></div>
<div class="r" style="left:2809px;top:1734.5px;width:13px;height:1.5px;background:#d0d0d0;"></div>
<div class="r" style="left:2814.8px;top:1729px;width:1.5px;height:12.5px;background:#d0d0d0;"></div>
<div class="t" style="top:1728.12px;font-size:16.4px;line-height:16.4px;color:#e6e6e6;letter-spacing:-0.2px;left:2840px;">115%</div>
</body></html>
